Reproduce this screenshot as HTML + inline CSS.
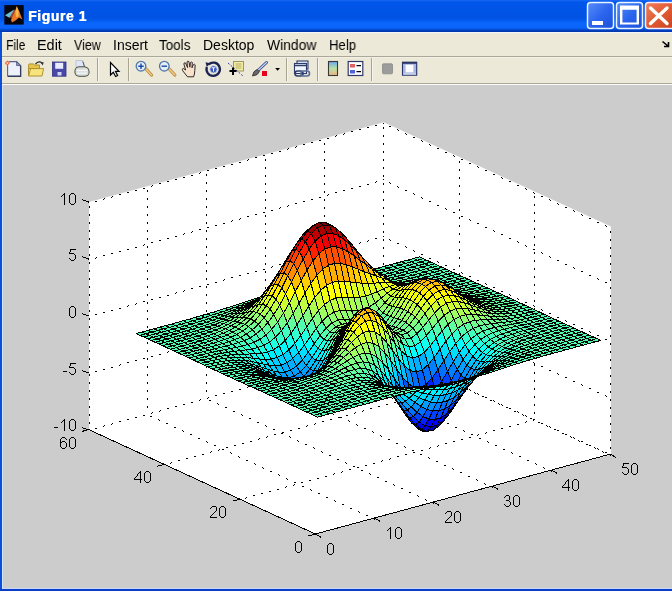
<!DOCTYPE html>
<html><head><meta charset="utf-8">
<style>
html,body{margin:0;padding:0;}
body{width:672px;height:591px;overflow:hidden;position:relative;background:#cccccc;font-family:"Liberation Sans",sans-serif;}
.abs{position:absolute;}
#title{left:0;top:0;width:672px;height:32px;background:linear-gradient(to bottom,#1a68f6 0px,#0056ea 2px,#0052e2 18px,#0a66fc 23px,#0a64fa 28px,#0038b0 31px,#0038b0 32px);}
#ttext{left:28px;top:8.4px;color:#fff;font-weight:bold;font-size:14px;letter-spacing:0.55px;text-shadow:0.4px 0 0 #fff;will-change:transform;}
#menu{left:0;top:32px;width:672px;height:24px;background:linear-gradient(to bottom,#f4f6fa 0px,#f4f6fa 1px,#ece9d8 1px);}
#menuline{left:0;top:56px;width:672px;height:1px;background:#aca899;}
#menuline2{left:0;top:57px;width:672px;height:1px;background:#f2f0e4;}
#tool{left:0;top:58px;width:672px;height:25px;background:#ece9d8;}
#toolline{left:0;top:83px;width:672px;height:1px;background:#aca899;}
#lb{left:0;top:32px;width:2px;height:559px;background:#0c4ed8;}
#lb2{left:2px;top:84px;width:1px;height:505px;background:#d4e2fa;}
#tl2{left:2px;top:84px;width:670px;height:1px;background:#fcfcfc;}
#bb{left:0;top:589px;width:672px;height:2px;background:#0a3cc8;}
#bb2{left:2px;top:588px;width:670px;height:1px;background:#c4d8fc;}
.mi{position:absolute;top:37px;font-size:14px;line-height:16px;color:#000;transform-origin:0 0;will-change:transform;white-space:nowrap;}
svg text{font-family:"Liberation Sans",sans-serif;font-size:16.5px;fill:#000;}
</style></head><body>
<div id="title" class="abs"></div>
<div id="ttext" class="abs">Figure 1</div>
<div id="menu" class="abs"></div>
<div id="menuline" class="abs"></div>
<div id="menuline2" class="abs"></div>
<div id="tool" class="abs"></div>
<div id="toolline" class="abs"></div>
<div id="lb" class="abs"></div>
<div id="bb" class="abs"></div>
<div id="lb2" class="abs"></div>
<div id="tl2" class="abs"></div>
<div id="bb2" class="abs"></div>
<span class="mi" style="left:5.8px;transform:scaleX(0.86)">File</span>
<span class="mi" style="left:36.8px;transform:scaleX(1.03)">Edit</span>
<span class="mi" style="left:73.5px;transform:scaleX(0.886)">View</span>
<span class="mi" style="left:113px;transform:scaleX(1.0)">Insert</span>
<span class="mi" style="left:158.5px;transform:scaleX(0.96)">Tools</span>
<span class="mi" style="left:203.3px;transform:scaleX(1.0)">Desktop</span>
<span class="mi" style="left:266.5px;transform:scaleX(0.99)">Window</span>
<span class="mi" style="left:329px;transform:scaleX(0.94)">Help</span>
<svg class="abs" style="left:0;top:0" width="672" height="591" viewBox="0 0 672 591">
<!-- matlab icon -->
<rect x="4.3" y="5.1" width="19.4" height="19.5" fill="#050510"/>
<path d="M5,15.2 L14.2,9.6 L12.5,14.5 L9.3,17.8 Z" fill="#68c0d8"/>
<path d="M9.5,17.5 L14.2,9.6 L16,12 L13,18 Z" fill="#a04830"/>
<path d="M16.8,6.2 L19.5,12 L22.4,19.6 L19,17.4 L15.5,20.5 L11.9,22.6 L11,19.5 L13.5,15 Z" fill="#e87828"/>
<path d="M16.8,6.2 L18.6,11 L18.5,16.5 L16,17 L15.5,11.5 Z" fill="#f8b848"/>
<!-- caption buttons -->
<defs>
<linearGradient id="gbb" x1="0" y1="0" x2="1" y2="1"><stop offset="0" stop-color="#5a8ef8"/><stop offset="0.5" stop-color="#2c66ee"/><stop offset="1" stop-color="#1c4fd8"/></linearGradient>
<linearGradient id="grb" x1="0" y1="0" x2="1" y2="1"><stop offset="0" stop-color="#f0805c"/><stop offset="0.5" stop-color="#e05a32"/><stop offset="1" stop-color="#c8401c"/></linearGradient>
</defs>
<rect x="587.5" y="2.5" width="26" height="26" rx="3" fill="url(#gbb)" stroke="#e8f4ff" stroke-width="1.5"/>
<rect x="592" y="21" width="11" height="4" fill="#fff"/>
<rect x="616.5" y="2.5" width="26" height="26" rx="3" fill="url(#gbb)" stroke="#e8f4ff" stroke-width="1.5"/>
<path d="M620,5.5 H639 V24.6 H620 Z M622.4,9.8 V22.4 H636.6 V9.8 Z" fill="#fff" fill-rule="evenodd"/>
<rect x="645.5" y="2.5" width="30" height="26" rx="3" fill="url(#grb)" stroke="#f4f0ff" stroke-width="1.5"/>
<path d="M650.5,8 L667,23.5 M667,8 L650.5,23.5" stroke="#fff" stroke-width="3.4" stroke-linecap="round"/>
<!-- dock arrow -->
<path d="M662.5,41.5 L668,46 M664,46.5 H668.5 V42" stroke="#000" stroke-width="1.6" fill="none"/>
<!-- separators -->
<g shape-rendering="crispEdges">
<rect x="97" y="58" width="1" height="23" fill="#a8a490"/><rect x="98" y="58" width="1" height="23" fill="#f6f4ec"/>
<rect x="128" y="58" width="1" height="23" fill="#a8a490"/><rect x="129" y="58" width="1" height="23" fill="#f6f4ec"/>
<rect x="286" y="58" width="1" height="23" fill="#a8a490"/><rect x="287" y="58" width="1" height="23" fill="#f6f4ec"/>
<rect x="317" y="58" width="1" height="23" fill="#a8a490"/><rect x="318" y="58" width="1" height="23" fill="#f6f4ec"/>
<rect x="371" y="58" width="1" height="23" fill="#a8a490"/><rect x="372" y="58" width="1" height="23" fill="#f6f4ec"/>
</g>
<!-- new -->
<path d="M7.6,61.6 H16.6 L20.6,65.6 V76 H7.6 Z" fill="#eef1fc" stroke="#5a6488" stroke-width="1.1"/>
<path d="M20.6,65.6 V76.3 H7.8" fill="none" stroke="#343c60" stroke-width="1.3"/>
<path d="M16.6,61.6 V65.6 H20.6 Z" fill="#8a94bc" stroke="#4a5478" stroke-width="0.8"/>
<circle cx="7.4" cy="63.1" r="2.3" fill="#f4a080" opacity="0.85"/>
<path d="M7.4,60.2 L8.2,62.3 L10.3,63.1 L8.2,63.9 L7.4,66 L6.6,63.9 L4.5,63.1 L6.6,62.3 Z" fill="#e85a30"/>
<circle cx="7.4" cy="63.1" r="0.9" fill="#fff0d8"/>
<!-- open -->
<path d="M28.6,76 V64.6 Q28.6,63.9 29.4,63.9 H33.4 L34.6,65 H39.5 V68.5 H28.6 Z" fill="#e8c448" stroke="#a88a28" stroke-width="0.9"/>
<path d="M28.6,76 L30.6,68.6 H43.6 L42,76 Z" fill="#f8e47c" stroke="#a88a28" stroke-width="0.9" stroke-linejoin="round"/>
<path d="M35.5,64 Q39,60.2 42.2,63.2" stroke="#2a2a2a" stroke-width="1.2" fill="none"/>
<path d="M40.8,62.4 L43.8,62.2 L42.6,65.4 Z" fill="#2a2a2a"/>
<!-- save -->
<rect x="52.5" y="62" width="13.5" height="14.2" fill="#4848a8" stroke="#303080" stroke-width="0.8"/>
<rect x="55.2" y="62.8" width="8" height="6" fill="#e8ecff"/>
<rect x="57.5" y="72" width="4" height="3.5" fill="#d0d4f0"/>
<!-- print -->
<path d="M76,60.5 H82.8 L84.6,67 H76 Z" fill="#dfe6f6" stroke="#a8b0c4" stroke-width="0.6"/>
<path d="M82.8,61.5 L84.6,67" stroke="#505868" stroke-width="1"/>
<path d="M75,70 Q75.5,66.8 79,66.8 H85 Q88.7,67.2 89,71 V73.3 Q88.6,76.3 85,76.3 H79 Q75.3,76.2 75,73 Z" fill="#dadede" stroke="#4a5040" stroke-width="1"/>
<path d="M76.5,70.5 H87.5 M77,73.2 H87" stroke="#fafafa" stroke-width="1"/>
<!-- arrow cursor -->
<path d="M110.5,62.5 V75 L113.3,72.3 L115.6,76.5 L117.6,75.5 L115.4,71.4 H119 Z" fill="#fff" stroke="#000" stroke-width="1.2" stroke-linejoin="miter"/>
<!-- zoom in -->
<path d="M146,69 L151.5,75" stroke="#b88840" stroke-width="3.2" stroke-linecap="round"/>
<path d="M146,69 L151.5,75" stroke="#f0c880" stroke-width="1.6" stroke-linecap="round"/>
<circle cx="141" cy="66.2" r="4.8" fill="#e4eef8" stroke="#5078a8" stroke-width="1.3"/>
<path d="M138.3,66.2 H143.7 M141,63.5 V68.9" stroke="#1848a0" stroke-width="1.4"/>
<!-- zoom out -->
<path d="M169.3,69 L174.8,75" stroke="#b88840" stroke-width="3.2" stroke-linecap="round"/>
<path d="M169.3,69 L174.8,75" stroke="#f0c880" stroke-width="1.6" stroke-linecap="round"/>
<circle cx="164.3" cy="66.2" r="4.8" fill="#e4eef8" stroke="#5078a8" stroke-width="1.3"/>
<path d="M161.6,66.2 H167" stroke="#1848a0" stroke-width="1.4"/>
<!-- hand -->
<path d="M187.5,76.8 L182.6,70.6 Q181.6,68.9 183.2,68.4 L185.6,70 L183.9,64 Q183.9,62.3 185.5,62.9 L187.6,67.6 L187,62 Q187.4,60.6 188.9,61.5 L189.9,67.2 L190.4,62.6 Q191.2,61.4 192.3,62.4 L192,67.8 L193.4,64.6 Q194.5,63.7 195.2,64.9 L194.8,70.5 Q194.6,74.5 193.6,76.8 Z" fill="#f8e2cc" stroke="#302828" stroke-width="1"/>
<!-- rotate -->
<path d="M208.6,64.4 A6.7,6.7 0 1 1 206.9,67" stroke="#1c2450" stroke-width="2.3" fill="none"/>
<path d="M205.5,62.2 L210.3,63.2 L206.8,67 Z" fill="#1c2450"/>
<circle cx="213.5" cy="69.3" r="3.6" fill="#3858b8" stroke="#c8d4f4" stroke-width="0.8"/>
<path d="M211.6,67.8 H215.4 M213.5,67.8 V71.6" stroke="#f0f4ff" stroke-width="1.1"/>
<!-- data cursor -->
<rect x="233.5" y="61.5" width="10" height="9.5" fill="#f2eca0" stroke="#909060" stroke-width="0.9"/>
<path d="M235.5,64 H241.5 M235.5,66 H241.5 M235.5,68 H241.5" stroke="#a8a060" stroke-width="0.8"/>
<path d="M228,63 L243,76" stroke="#3048b0" stroke-width="1" stroke-dasharray="2 1.5"/>
<path d="M229.5,71 H236.5 M233,67.5 V75" stroke="#000" stroke-width="2"/>
<!-- brush -->
<path d="M258.5,70 L266.5,62.5" stroke="#384888" stroke-width="3" stroke-linecap="round"/>
<path d="M258.5,70 L266.5,62.5" stroke="#c8d4f4" stroke-width="1.2" stroke-linecap="round"/>
<path d="M252.5,76 Q253,71 257,69.5 L259.5,71.5 Q258,75.5 252.5,76 Z" fill="#6a6a6a" stroke="#303030" stroke-width="0.8"/>
<rect x="262" y="71" width="5" height="5" fill="#e8001c"/>
<!-- dropdown -->
<path d="M275.2,68 H280 L277.6,70.8 Z" fill="#000"/>
<!-- link -->
<rect x="297" y="61" width="11" height="8" fill="#e0e8f8" stroke="#2c3c68" stroke-width="1.1"/>
<rect x="294.5" y="63.5" width="12" height="10" fill="#f0f4ff" stroke="#2c3c68" stroke-width="1.1"/>
<path d="M294.5,65.5 H306.5" stroke="#2c3c68" stroke-width="1.5"/>
<rect x="295" y="71" width="8" height="5" rx="2.5" fill="none" stroke="#2c3c68" stroke-width="1.6"/>
<rect x="301" y="71" width="8.5" height="5" rx="2.5" fill="none" stroke="#5a6c98" stroke-width="1.6"/>
<!-- colorbar -->
<defs><linearGradient id="cb" x1="0" y1="0" x2="0" y2="1"><stop offset="0" stop-color="#6aa8f0"/><stop offset="0.5" stop-color="#b8e0a8"/><stop offset="1" stop-color="#f0b080"/></linearGradient></defs>
<rect x="328.5" y="61.5" width="9" height="14" fill="url(#cb)" stroke="#383838" stroke-width="1.1"/>
<!-- legend -->
<rect x="348.2" y="61.5" width="14.6" height="14" fill="#fcfcff" stroke="#303868" stroke-width="1.2"/>
<rect x="350" y="64" width="5" height="3.5" fill="#e06060"/>
<rect x="350" y="70" width="5" height="3.5" fill="#5060d8"/>
<path d="M356.5,65.7 H361 M356.5,71.7 H361" stroke="#000" stroke-width="1.3"/>
<!-- gray square -->
<rect x="382.5" y="63.8" width="10" height="10" rx="1" fill="#9c9c9c" stroke="#888" stroke-width="0.8"/>
<!-- plot tools -->
<rect x="402.5" y="62.2" width="14.2" height="13" fill="#a8b8e0" stroke="#283468" stroke-width="1.1"/>
<rect x="402.5" y="62" width="14.2" height="1.8" fill="#283468"/>
<rect x="405.6" y="64.8" width="7.8" height="7.6" fill="#fcfcff"/>
<rect x="403.3" y="72.8" width="12.6" height="2" fill="#c4cce8"/>

<polygon fill="#fff" points="89,202.1 383.8,122.2 611,226.6 611,454.5 315.4,534.4 89,430.0"/>
<g shape-rendering="crispEdges">
<path fill="#000" d="M89 206h1v1h-1zM89 207h1v1h-1zM89 214h1v1h-1zM89 215h1v1h-1zM89 222h1v1h-1zM89 223h1v1h-1zM89 230h1v1h-1zM89 231h1v1h-1zM89 238h1v1h-1zM89 239h1v1h-1zM89 246h1v1h-1zM89 247h1v1h-1zM89 254h1v1h-1zM89 255h1v1h-1zM89 262h1v1h-1zM89 263h1v1h-1zM89 270h1v1h-1zM89 271h1v1h-1zM89 278h1v1h-1zM89 279h1v1h-1zM89 286h1v1h-1zM89 287h1v1h-1zM89 294h1v1h-1zM89 295h1v1h-1zM89 302h1v1h-1zM89 303h1v1h-1zM89 310h1v1h-1zM89 311h1v1h-1zM89 318h1v1h-1zM89 319h1v1h-1zM89 326h1v1h-1zM89 327h1v1h-1zM89 334h1v1h-1zM89 335h1v1h-1zM89 342h1v1h-1zM89 343h1v1h-1zM89 350h1v1h-1zM89 351h1v1h-1zM89 358h1v1h-1zM89 359h1v1h-1zM89 366h1v1h-1zM89 367h1v1h-1zM89 374h1v1h-1zM89 375h1v1h-1zM89 382h1v1h-1zM89 383h1v1h-1zM89 390h1v1h-1zM89 391h1v1h-1zM89 398h1v1h-1zM89 399h1v1h-1zM89 406h1v1h-1zM89 407h1v1h-1zM89 414h1v1h-1zM89 415h1v1h-1zM89 422h1v1h-1zM89 423h1v1h-1zM95 201h1v1h-1zM95 258h1v1h-1zM95 314h1v1h-1zM95 371h1v1h-1zM95 428h1v1h-1zM96 201h1v1h-1zM96 257h1v1h-1zM96 314h1v1h-1zM96 371h1v1h-1zM96 428h1v1h-1zM103 199h1v1h-1zM103 255h1v1h-1zM103 312h1v1h-1zM103 369h1v1h-1zM103 426h1v1h-1zM104 198h1v1h-1zM104 255h1v1h-1zM104 312h1v1h-1zM104 369h1v1h-1zM104 425h1v1h-1zM111 197h1v1h-1zM111 253h1v1h-1zM111 310h1v1h-1zM111 367h1v1h-1zM111 424h1v1h-1zM112 196h1v1h-1zM112 253h1v1h-1zM112 310h1v1h-1zM112 367h1v1h-1zM112 423h1v1h-1zM119 194h1v1h-1zM119 251h1v1h-1zM119 308h1v1h-1zM119 365h1v1h-1zM119 421h1v1h-1zM120 194h1v1h-1zM120 251h1v1h-1zM120 308h1v1h-1zM120 364h1v1h-1zM120 421h1v1h-1zM127 192h1v1h-1zM127 249h1v1h-1zM127 306h1v1h-1zM127 362h1v1h-1zM127 419h1v1h-1zM128 192h1v1h-1zM128 249h1v1h-1zM128 305h1v1h-1zM128 362h1v1h-1zM128 419h1v1h-1zM135 190h1v1h-1zM135 247h1v1h-1zM135 304h1v1h-1zM135 360h1v1h-1zM135 417h1v1h-1zM136 190h1v1h-1zM136 247h1v1h-1zM136 303h1v1h-1zM136 360h1v1h-1zM136 417h1v1h-1zM143 188h1v1h-1zM143 245h1v1h-1zM143 301h1v1h-1zM143 358h1v1h-1zM143 415h1v1h-1zM144 188h1v1h-1zM144 244h1v1h-1zM144 301h1v1h-1zM144 358h1v1h-1zM144 415h1v1h-1zM147 190h1v1h-1zM147 191h1v1h-1zM147 198h1v1h-1zM147 199h1v1h-1zM147 206h1v1h-1zM147 207h1v1h-1zM147 214h1v1h-1zM147 215h1v1h-1zM147 222h1v1h-1zM147 223h1v1h-1zM147 230h1v1h-1zM147 231h1v1h-1zM147 238h1v1h-1zM147 239h1v1h-1zM147 246h1v1h-1zM147 247h1v1h-1zM147 254h1v1h-1zM147 255h1v1h-1zM147 262h1v1h-1zM147 263h1v1h-1zM147 270h1v1h-1zM147 271h1v1h-1zM147 278h1v1h-1zM147 279h1v1h-1zM147 286h1v1h-1zM147 287h1v1h-1zM147 294h1v1h-1zM147 295h1v1h-1zM147 302h1v1h-1zM147 303h1v1h-1zM147 310h1v1h-1zM147 311h1v1h-1zM147 318h1v1h-1zM147 319h1v1h-1zM147 326h1v1h-1zM147 327h1v1h-1zM147 334h1v1h-1zM147 335h1v1h-1zM147 342h1v1h-1zM147 343h1v1h-1zM147 350h1v1h-1zM147 351h1v1h-1zM147 358h1v1h-1zM147 359h1v1h-1zM147 366h1v1h-1zM147 367h1v1h-1zM147 374h1v1h-1zM147 375h1v1h-1zM147 382h1v1h-1zM147 383h1v1h-1zM147 390h1v1h-1zM147 391h1v1h-1zM147 398h1v1h-1zM147 399h1v1h-1zM147 406h1v1h-1zM147 407h1v1h-1zM150 416h1v1h-1zM151 186h1v1h-1zM151 242h1v1h-1zM151 299h1v1h-1zM151 356h1v1h-1zM151 413h1v1h-1zM151 416h1v1h-1zM152 185h1v1h-1zM152 242h1v1h-1zM152 299h1v1h-1zM152 356h1v1h-1zM152 412h1v1h-1zM158 419h1v1h-1zM159 183h1v1h-1zM159 240h1v1h-1zM159 297h1v1h-1zM159 354h1v1h-1zM159 411h1v1h-1zM159 420h1v1h-1zM160 183h1v1h-1zM160 240h1v1h-1zM160 297h1v1h-1zM160 354h1v1h-1zM160 410h1v1h-1zM166 423h1v1h-1zM167 181h1v1h-1zM167 238h1v1h-1zM167 295h1v1h-1zM167 352h1v1h-1zM167 408h1v1h-1zM167 423h1v1h-1zM168 181h1v1h-1zM168 238h1v1h-1zM168 295h1v1h-1zM168 351h1v1h-1zM168 408h1v1h-1zM170 463h1v1h-1zM171 462h1v1h-1zM174 427h1v1h-1zM175 179h1v1h-1zM175 236h1v1h-1zM175 293h1v1h-1zM175 349h1v1h-1zM175 406h1v1h-1zM175 427h1v1h-1zM176 179h1v1h-1zM176 236h1v1h-1zM176 292h1v1h-1zM176 349h1v1h-1zM176 406h1v1h-1zM178 460h1v1h-1zM179 460h1v1h-1zM182 430h1v1h-1zM183 177h1v1h-1zM183 234h1v1h-1zM183 291h1v1h-1zM183 347h1v1h-1zM183 404h1v1h-1zM183 431h1v1h-1zM184 177h1v1h-1zM184 233h1v1h-1zM184 290h1v1h-1zM184 347h1v1h-1zM184 404h1v1h-1zM186 458h1v1h-1zM187 458h1v1h-1zM190 434h1v1h-1zM191 175h1v1h-1zM191 232h1v1h-1zM191 288h1v1h-1zM191 345h1v1h-1zM191 402h1v1h-1zM191 434h1v1h-1zM192 175h1v1h-1zM192 231h1v1h-1zM192 288h1v1h-1zM192 345h1v1h-1zM192 402h1v1h-1zM194 456h1v1h-1zM195 456h1v1h-1zM198 438h1v1h-1zM199 173h1v1h-1zM199 229h1v1h-1zM199 286h1v1h-1zM199 343h1v1h-1zM199 400h1v1h-1zM199 438h1v1h-1zM200 172h1v1h-1zM200 229h1v1h-1zM200 286h1v1h-1zM200 343h1v1h-1zM200 399h1v1h-1zM202 454h1v1h-1zM203 454h1v1h-1zM206 174h1v1h-1zM206 175h1v1h-1zM206 182h1v1h-1zM206 183h1v1h-1zM206 190h1v1h-1zM206 191h1v1h-1zM206 198h1v1h-1zM206 199h1v1h-1zM206 206h1v1h-1zM206 207h1v1h-1zM206 214h1v1h-1zM206 215h1v1h-1zM206 222h1v1h-1zM206 223h1v1h-1zM206 230h1v1h-1zM206 231h1v1h-1zM206 238h1v1h-1zM206 239h1v1h-1zM206 246h1v1h-1zM206 247h1v1h-1zM206 254h1v1h-1zM206 255h1v1h-1zM206 262h1v1h-1zM206 263h1v1h-1zM206 270h1v1h-1zM206 271h1v1h-1zM206 278h1v1h-1zM206 279h1v1h-1zM206 286h1v1h-1zM206 287h1v1h-1zM206 294h1v1h-1zM206 295h1v1h-1zM206 302h1v1h-1zM206 303h1v1h-1zM206 310h1v1h-1zM206 311h1v1h-1zM206 318h1v1h-1zM206 319h1v1h-1zM206 326h1v1h-1zM206 327h1v1h-1zM206 334h1v1h-1zM206 335h1v1h-1zM206 342h1v1h-1zM206 343h1v1h-1zM206 350h1v1h-1zM206 351h1v1h-1zM206 358h1v1h-1zM206 359h1v1h-1zM206 366h1v1h-1zM206 367h1v1h-1zM206 374h1v1h-1zM206 375h1v1h-1zM206 382h1v1h-1zM206 383h1v1h-1zM206 390h1v1h-1zM206 391h1v1h-1zM206 441h1v1h-1zM207 170h1v1h-1zM207 227h1v1h-1zM207 284h1v1h-1zM207 341h1v1h-1zM207 398h1v1h-1zM207 442h1v1h-1zM208 170h1v1h-1zM208 227h1v1h-1zM208 284h1v1h-1zM208 340h1v1h-1zM208 397h1v1h-1zM209 400h1v1h-1zM210 400h1v1h-1zM210 452h1v1h-1zM211 451h1v1h-1zM214 445h1v1h-1zM215 168h1v1h-1zM215 225h1v1h-1zM215 282h1v1h-1zM215 339h1v1h-1zM215 395h1v1h-1zM215 445h1v1h-1zM216 168h1v1h-1zM216 225h1v1h-1zM216 282h1v1h-1zM216 338h1v1h-1zM216 395h1v1h-1zM217 403h1v1h-1zM218 404h1v1h-1zM218 450h1v1h-1zM219 449h1v1h-1zM222 449h1v1h-1zM223 166h1v1h-1zM223 223h1v1h-1zM223 280h1v1h-1zM223 336h1v1h-1zM223 393h1v1h-1zM223 449h1v1h-1zM224 166h1v1h-1zM224 223h1v1h-1zM224 279h1v1h-1zM224 336h1v1h-1zM224 393h1v1h-1zM225 407h1v1h-1zM226 407h1v1h-1zM226 447h1v1h-1zM227 447h1v1h-1zM230 452h1v1h-1zM231 164h1v1h-1zM231 221h1v1h-1zM231 277h1v1h-1zM231 334h1v1h-1zM231 391h1v1h-1zM231 453h1v1h-1zM232 164h1v1h-1zM232 220h1v1h-1zM232 277h1v1h-1zM232 334h1v1h-1zM232 391h1v1h-1zM233 411h1v1h-1zM234 411h1v1h-1zM234 445h1v1h-1zM235 445h1v1h-1zM238 456h1v1h-1zM239 162h1v1h-1zM239 219h1v1h-1zM239 275h1v1h-1zM239 332h1v1h-1zM239 389h1v1h-1zM239 457h1v1h-1zM240 162h1v1h-1zM240 218h1v1h-1zM240 275h1v1h-1zM240 332h1v1h-1zM240 389h1v1h-1zM241 414h1v1h-1zM242 415h1v1h-1zM242 443h1v1h-1zM243 443h1v1h-1zM245 498h1v1h-1zM246 460h1v1h-1zM246 497h1v1h-1zM247 160h1v1h-1zM247 216h1v1h-1zM247 273h1v1h-1zM247 330h1v1h-1zM247 387h1v1h-1zM247 460h1v1h-1zM248 159h1v1h-1zM248 216h1v1h-1zM248 273h1v1h-1zM248 330h1v1h-1zM248 386h1v1h-1zM249 418h1v1h-1zM250 418h1v1h-1zM250 441h1v1h-1zM251 441h1v1h-1zM253 495h1v1h-1zM254 463h1v1h-1zM254 495h1v1h-1zM255 157h1v1h-1zM255 214h1v1h-1zM255 271h1v1h-1zM255 328h1v1h-1zM255 384h1v1h-1zM255 464h1v1h-1zM256 157h1v1h-1zM256 214h1v1h-1zM256 271h1v1h-1zM256 327h1v1h-1zM256 384h1v1h-1zM257 422h1v1h-1zM258 422h1v1h-1zM258 439h1v1h-1zM259 438h1v1h-1zM261 493h1v1h-1zM262 467h1v1h-1zM262 493h1v1h-1zM263 155h1v1h-1zM263 212h1v1h-1zM263 269h1v1h-1zM263 326h1v1h-1zM263 382h1v1h-1zM263 468h1v1h-1zM264 155h1v1h-1zM264 212h1v1h-1zM264 269h1v1h-1zM264 325h1v1h-1zM264 382h1v1h-1zM265 159h1v1h-1zM265 160h1v1h-1zM265 167h1v1h-1zM265 168h1v1h-1zM265 175h1v1h-1zM265 176h1v1h-1zM265 183h1v1h-1zM265 184h1v1h-1zM265 191h1v1h-1zM265 192h1v1h-1zM265 199h1v1h-1zM265 200h1v1h-1zM265 207h1v1h-1zM265 208h1v1h-1zM265 215h1v1h-1zM265 216h1v1h-1zM265 223h1v1h-1zM265 224h1v1h-1zM265 231h1v1h-1zM265 232h1v1h-1zM265 239h1v1h-1zM265 240h1v1h-1zM265 247h1v1h-1zM265 248h1v1h-1zM265 255h1v1h-1zM265 256h1v1h-1zM265 263h1v1h-1zM265 264h1v1h-1zM265 271h1v1h-1zM265 272h1v1h-1zM265 279h1v1h-1zM265 280h1v1h-1zM265 287h1v1h-1zM265 288h1v1h-1zM265 295h1v1h-1zM265 296h1v1h-1zM265 303h1v1h-1zM265 304h1v1h-1zM265 311h1v1h-1zM265 312h1v1h-1zM265 319h1v1h-1zM265 320h1v1h-1zM265 327h1v1h-1zM265 328h1v1h-1zM265 335h1v1h-1zM265 336h1v1h-1zM265 343h1v1h-1zM265 344h1v1h-1zM265 351h1v1h-1zM265 352h1v1h-1zM265 359h1v1h-1zM265 360h1v1h-1zM265 367h1v1h-1zM265 368h1v1h-1zM265 375h1v1h-1zM265 376h1v1h-1zM265 425h1v1h-1zM266 426h1v1h-1zM266 437h1v1h-1zM267 436h1v1h-1zM268 384h1v1h-1zM269 384h1v1h-1zM269 491h1v1h-1zM270 471h1v1h-1zM270 491h1v1h-1zM271 153h1v1h-1zM271 210h1v1h-1zM271 267h1v1h-1zM271 323h1v1h-1zM271 380h1v1h-1zM271 471h1v1h-1zM272 153h1v1h-1zM272 210h1v1h-1zM272 266h1v1h-1zM272 323h1v1h-1zM272 380h1v1h-1zM273 429h1v1h-1zM274 429h1v1h-1zM274 434h1v1h-1zM275 434h1v1h-1zM276 387h1v1h-1zM277 388h1v1h-1zM277 489h1v1h-1zM278 474h1v1h-1zM278 489h1v1h-1zM279 151h1v1h-1zM279 208h1v1h-1zM279 264h1v1h-1zM279 321h1v1h-1zM279 378h1v1h-1zM279 475h1v1h-1zM280 151h1v1h-1zM280 207h1v1h-1zM280 264h1v1h-1zM280 321h1v1h-1zM280 378h1v1h-1zM281 433h1v1h-1zM282 432h1v1h-1zM282 433h1v1h-1zM283 432h1v1h-1zM284 391h1v1h-1zM285 391h1v1h-1zM285 487h1v1h-1zM286 478h1v1h-1zM286 486h1v1h-1zM287 149h1v1h-1zM287 206h1v1h-1zM287 262h1v1h-1zM287 319h1v1h-1zM287 376h1v1h-1zM287 479h1v1h-1zM288 148h1v1h-1zM288 205h1v1h-1zM288 262h1v1h-1zM288 319h1v1h-1zM288 376h1v1h-1zM289 436h1v1h-1zM290 430h1v1h-1zM290 437h1v1h-1zM291 430h1v1h-1zM292 395h1v1h-1zM293 395h1v1h-1zM293 485h1v1h-1zM294 482h1v1h-1zM294 484h1v1h-1zM295 147h1v1h-1zM295 203h1v1h-1zM295 260h1v1h-1zM295 317h1v1h-1zM295 374h1v1h-1zM295 482h1v1h-1zM296 146h1v1h-1zM296 203h1v1h-1zM296 260h1v1h-1zM296 317h1v1h-1zM296 373h1v1h-1zM297 440h1v1h-1zM298 428h1v1h-1zM298 441h1v1h-1zM299 428h1v1h-1zM300 398h1v1h-1zM301 399h1v1h-1zM301 482h1v1h-1zM302 482h1v1h-1zM302 486h1v1h-1zM303 144h1v1h-1zM303 201h1v1h-1zM303 258h1v1h-1zM303 315h1v1h-1zM303 371h1v1h-1zM303 486h1v1h-1zM304 144h1v1h-1zM304 201h1v1h-1zM304 258h1v1h-1zM304 314h1v1h-1zM304 371h1v1h-1zM305 444h1v1h-1zM306 426h1v1h-1zM306 444h1v1h-1zM307 425h1v1h-1zM308 402h1v1h-1zM309 402h1v1h-1zM309 480h1v1h-1zM310 480h1v1h-1zM310 489h1v1h-1zM311 142h1v1h-1zM311 199h1v1h-1zM311 256h1v1h-1zM311 313h1v1h-1zM311 369h1v1h-1zM311 490h1v1h-1zM312 142h1v1h-1zM312 199h1v1h-1zM312 255h1v1h-1zM312 312h1v1h-1zM312 369h1v1h-1zM313 447h1v1h-1zM314 424h1v1h-1zM314 448h1v1h-1zM315 423h1v1h-1zM316 406h1v1h-1zM317 406h1v1h-1zM317 478h1v1h-1zM318 478h1v1h-1zM318 493h1v1h-1zM319 140h1v1h-1zM319 197h1v1h-1zM319 254h1v1h-1zM319 310h1v1h-1zM319 367h1v1h-1zM319 493h1v1h-1zM320 140h1v1h-1zM320 197h1v1h-1zM320 253h1v1h-1zM320 310h1v1h-1zM320 367h1v1h-1zM321 451h1v1h-1zM322 421h1v1h-1zM322 452h1v1h-1zM323 421h1v1h-1zM324 143h1v1h-1zM324 144h1v1h-1zM324 151h1v1h-1zM324 152h1v1h-1zM324 159h1v1h-1zM324 160h1v1h-1zM324 167h1v1h-1zM324 168h1v1h-1zM324 175h1v1h-1zM324 176h1v1h-1zM324 183h1v1h-1zM324 184h1v1h-1zM324 191h1v1h-1zM324 192h1v1h-1zM324 199h1v1h-1zM324 200h1v1h-1zM324 207h1v1h-1zM324 208h1v1h-1zM324 215h1v1h-1zM324 216h1v1h-1zM324 223h1v1h-1zM324 224h1v1h-1zM324 231h1v1h-1zM324 232h1v1h-1zM324 239h1v1h-1zM324 240h1v1h-1zM324 247h1v1h-1zM324 248h1v1h-1zM324 255h1v1h-1zM324 256h1v1h-1zM324 263h1v1h-1zM324 264h1v1h-1zM324 271h1v1h-1zM324 272h1v1h-1zM324 279h1v1h-1zM324 280h1v1h-1zM324 287h1v1h-1zM324 288h1v1h-1zM324 295h1v1h-1zM324 296h1v1h-1zM324 303h1v1h-1zM324 304h1v1h-1zM324 311h1v1h-1zM324 312h1v1h-1zM324 319h1v1h-1zM324 320h1v1h-1zM324 327h1v1h-1zM324 328h1v1h-1zM324 335h1v1h-1zM324 336h1v1h-1zM324 343h1v1h-1zM324 344h1v1h-1zM324 351h1v1h-1zM324 352h1v1h-1zM324 359h1v1h-1zM324 360h1v1h-1zM324 409h1v1h-1zM325 410h1v1h-1zM325 476h1v1h-1zM326 476h1v1h-1zM326 497h1v1h-1zM327 138h1v1h-1zM327 195h1v1h-1zM327 251h1v1h-1zM327 308h1v1h-1zM327 365h1v1h-1zM327 368h1v1h-1zM327 497h1v1h-1zM328 138h1v1h-1zM328 194h1v1h-1zM328 251h1v1h-1zM328 308h1v1h-1zM328 365h1v1h-1zM328 368h1v1h-1zM329 455h1v1h-1zM330 419h1v1h-1zM330 455h1v1h-1zM331 419h1v1h-1zM332 413h1v1h-1zM333 414h1v1h-1zM333 474h1v1h-1zM334 473h1v1h-1zM334 500h1v1h-1zM335 136h1v1h-1zM335 192h1v1h-1zM335 249h1v1h-1zM335 306h1v1h-1zM335 363h1v1h-1zM335 371h1v1h-1zM335 501h1v1h-1zM336 135h1v1h-1zM336 192h1v1h-1zM336 249h1v1h-1zM336 306h1v1h-1zM336 362h1v1h-1zM336 372h1v1h-1zM337 459h1v1h-1zM338 417h1v1h-1zM338 459h1v1h-1zM339 417h1v1h-1zM340 417h1v1h-1zM341 417h1v1h-1zM341 472h1v1h-1zM342 471h1v1h-1zM342 504h1v1h-1zM343 134h1v1h-1zM343 190h1v1h-1zM343 247h1v1h-1zM343 304h1v1h-1zM343 361h1v1h-1zM343 375h1v1h-1zM343 504h1v1h-1zM344 133h1v1h-1zM344 190h1v1h-1zM344 247h1v1h-1zM344 304h1v1h-1zM344 360h1v1h-1zM344 375h1v1h-1zM345 462h1v1h-1zM346 415h1v1h-1zM346 463h1v1h-1zM347 415h1v1h-1zM348 420h1v1h-1zM349 421h1v1h-1zM349 469h1v1h-1zM350 469h1v1h-1zM350 508h1v1h-1zM351 131h1v1h-1zM351 188h1v1h-1zM351 245h1v1h-1zM351 302h1v1h-1zM351 358h1v1h-1zM351 379h1v1h-1zM351 508h1v1h-1zM352 131h1v1h-1zM352 188h1v1h-1zM352 245h1v1h-1zM352 301h1v1h-1zM352 358h1v1h-1zM352 379h1v1h-1zM353 466h1v1h-1zM354 413h1v1h-1zM354 466h1v1h-1zM355 412h1v1h-1zM356 424h1v1h-1zM357 425h1v1h-1zM357 467h1v1h-1zM358 467h1v1h-1zM358 511h1v1h-1zM359 129h1v1h-1zM359 186h1v1h-1zM359 243h1v1h-1zM359 299h1v1h-1zM359 356h1v1h-1zM359 382h1v1h-1zM359 512h1v1h-1zM360 129h1v1h-1zM360 186h1v1h-1zM360 242h1v1h-1zM360 299h1v1h-1zM360 356h1v1h-1zM360 383h1v1h-1zM361 470h1v1h-1zM362 411h1v1h-1zM362 470h1v1h-1zM363 410h1v1h-1zM364 428h1v1h-1zM365 428h1v1h-1zM365 465h1v1h-1zM366 465h1v1h-1zM366 515h1v1h-1zM367 127h1v1h-1zM367 184h1v1h-1zM367 241h1v1h-1zM367 297h1v1h-1zM367 354h1v1h-1zM367 386h1v1h-1zM367 515h1v1h-1zM368 127h1v1h-1zM368 184h1v1h-1zM368 240h1v1h-1zM368 297h1v1h-1zM368 354h1v1h-1zM368 386h1v1h-1zM369 473h1v1h-1zM370 408h1v1h-1zM370 474h1v1h-1zM371 408h1v1h-1zM372 431h1v1h-1zM373 432h1v1h-1zM373 463h1v1h-1zM374 463h1v1h-1zM374 519h1v1h-1zM375 125h1v1h-1zM375 182h1v1h-1zM375 238h1v1h-1zM375 295h1v1h-1zM375 352h1v1h-1zM375 390h1v1h-1zM376 125h1v1h-1zM376 181h1v1h-1zM376 238h1v1h-1zM376 295h1v1h-1zM376 352h1v1h-1zM376 390h1v1h-1zM377 477h1v1h-1zM378 406h1v1h-1zM378 477h1v1h-1zM379 406h1v1h-1zM380 435h1v1h-1zM381 436h1v1h-1zM381 461h1v1h-1zM382 460h1v1h-1zM383 123h1v1h-1zM383 127h1v1h-1zM383 128h1v1h-1zM383 135h1v1h-1zM383 136h1v1h-1zM383 143h1v1h-1zM383 144h1v1h-1zM383 151h1v1h-1zM383 152h1v1h-1zM383 159h1v1h-1zM383 160h1v1h-1zM383 167h1v1h-1zM383 168h1v1h-1zM383 175h1v1h-1zM383 176h1v1h-1zM383 179h1v1h-1zM383 183h1v1h-1zM383 184h1v1h-1zM383 191h1v1h-1zM383 192h1v1h-1zM383 199h1v1h-1zM383 200h1v1h-1zM383 207h1v1h-1zM383 208h1v1h-1zM383 215h1v1h-1zM383 216h1v1h-1zM383 223h1v1h-1zM383 224h1v1h-1zM383 231h1v1h-1zM383 232h1v1h-1zM383 236h1v1h-1zM383 239h1v1h-1zM383 240h1v1h-1zM383 247h1v1h-1zM383 248h1v1h-1zM383 255h1v1h-1zM383 256h1v1h-1zM383 263h1v1h-1zM383 264h1v1h-1zM383 271h1v1h-1zM383 272h1v1h-1zM383 279h1v1h-1zM383 280h1v1h-1zM383 287h1v1h-1zM383 288h1v1h-1zM383 293h1v1h-1zM383 295h1v1h-1zM383 296h1v1h-1zM383 303h1v1h-1zM383 304h1v1h-1zM383 311h1v1h-1zM383 312h1v1h-1zM383 319h1v1h-1zM383 320h1v1h-1zM383 327h1v1h-1zM383 328h1v1h-1zM383 335h1v1h-1zM383 336h1v1h-1zM383 343h1v1h-1zM383 344h1v1h-1zM383 350h1v1h-1zM383 393h1v1h-1zM384 394h1v1h-1zM385 481h1v1h-1zM386 352h1v1h-1zM386 404h1v1h-1zM386 481h1v1h-1zM387 352h1v1h-1zM387 404h1v1h-1zM388 439h1v1h-1zM389 126h1v1h-1zM389 182h1v1h-1zM389 239h1v1h-1zM389 296h1v1h-1zM389 353h1v1h-1zM389 439h1v1h-1zM389 459h1v1h-1zM390 126h1v1h-1zM390 183h1v1h-1zM390 240h1v1h-1zM390 296h1v1h-1zM390 353h1v1h-1zM390 458h1v1h-1zM391 397h1v1h-1zM392 398h1v1h-1zM393 484h1v1h-1zM394 355h1v1h-1zM394 402h1v1h-1zM394 485h1v1h-1zM395 356h1v1h-1zM395 402h1v1h-1zM396 443h1v1h-1zM397 129h1v1h-1zM397 186h1v1h-1zM397 243h1v1h-1zM397 300h1v1h-1zM397 356h1v1h-1zM397 443h1v1h-1zM397 456h1v1h-1zM398 130h1v1h-1zM398 187h1v1h-1zM398 243h1v1h-1zM398 300h1v1h-1zM398 357h1v1h-1zM398 456h1v1h-1zM399 401h1v1h-1zM400 401h1v1h-1zM401 488h1v1h-1zM402 359h1v1h-1zM402 400h1v1h-1zM402 488h1v1h-1zM403 359h1v1h-1zM403 399h1v1h-1zM404 446h1v1h-1zM405 133h1v1h-1zM405 190h1v1h-1zM405 246h1v1h-1zM405 303h1v1h-1zM405 360h1v1h-1zM405 447h1v1h-1zM405 454h1v1h-1zM406 134h1v1h-1zM406 190h1v1h-1zM406 247h1v1h-1zM406 304h1v1h-1zM406 360h1v1h-1zM406 454h1v1h-1zM407 404h1v1h-1zM408 405h1v1h-1zM409 492h1v1h-1zM410 363h1v1h-1zM410 398h1v1h-1zM410 492h1v1h-1zM411 363h1v1h-1zM411 397h1v1h-1zM412 450h1v1h-1zM413 137h1v1h-1zM413 193h1v1h-1zM413 250h1v1h-1zM413 307h1v1h-1zM413 364h1v1h-1zM413 450h1v1h-1zM413 452h1v1h-1zM414 137h1v1h-1zM414 194h1v1h-1zM414 251h1v1h-1zM414 307h1v1h-1zM414 364h1v1h-1zM414 452h1v1h-1zM415 408h1v1h-1zM416 409h1v1h-1zM417 495h1v1h-1zM418 366h1v1h-1zM418 395h1v1h-1zM418 496h1v1h-1zM419 367h1v1h-1zM419 395h1v1h-1zM420 454h1v1h-1zM421 140h1v1h-1zM421 197h1v1h-1zM421 254h1v1h-1zM421 311h1v1h-1zM421 367h1v1h-1zM421 450h1v1h-1zM421 454h1v1h-1zM422 141h1v1h-1zM422 198h1v1h-1zM422 254h1v1h-1zM422 311h1v1h-1zM422 368h1v1h-1zM422 450h1v1h-1zM423 412h1v1h-1zM424 412h1v1h-1zM425 499h1v1h-1zM426 370h1v1h-1zM426 393h1v1h-1zM426 500h1v1h-1zM427 370h1v1h-1zM427 393h1v1h-1zM428 457h1v1h-1zM429 144h1v1h-1zM429 201h1v1h-1zM429 258h1v1h-1zM429 314h1v1h-1zM429 371h1v1h-1zM429 448h1v1h-1zM429 458h1v1h-1zM430 145h1v1h-1zM430 201h1v1h-1zM430 258h1v1h-1zM430 315h1v1h-1zM430 371h1v1h-1zM430 447h1v1h-1zM431 415h1v1h-1zM432 416h1v1h-1zM433 503h1v1h-1zM434 374h1v1h-1zM434 391h1v1h-1zM435 374h1v1h-1zM435 391h1v1h-1zM436 461h1v1h-1zM437 148h1v1h-1zM437 205h1v1h-1zM437 261h1v1h-1zM437 318h1v1h-1zM437 375h1v1h-1zM437 446h1v1h-1zM437 461h1v1h-1zM438 148h1v1h-1zM438 205h1v1h-1zM438 262h1v1h-1zM438 318h1v1h-1zM438 375h1v1h-1zM438 445h1v1h-1zM439 419h1v1h-1zM440 420h1v1h-1zM442 377h1v1h-1zM442 389h1v1h-1zM443 378h1v1h-1zM443 389h1v1h-1zM444 465h1v1h-1zM445 152h1v1h-1zM445 208h1v1h-1zM445 265h1v1h-1zM445 322h1v1h-1zM445 378h1v1h-1zM445 443h1v1h-1zM445 465h1v1h-1zM446 152h1v1h-1zM446 209h1v1h-1zM446 265h1v1h-1zM446 322h1v1h-1zM446 379h1v1h-1zM446 443h1v1h-1zM447 423h1v1h-1zM448 423h1v1h-1zM450 381h1v1h-1zM450 387h1v1h-1zM451 382h1v1h-1zM451 386h1v1h-1zM452 468h1v1h-1zM453 155h1v1h-1zM453 212h1v1h-1zM453 269h1v1h-1zM453 325h1v1h-1zM453 382h1v1h-1zM453 441h1v1h-1zM453 469h1v1h-1zM454 156h1v1h-1zM454 212h1v1h-1zM454 269h1v1h-1zM454 326h1v1h-1zM454 382h1v1h-1zM454 441h1v1h-1zM455 427h1v1h-1zM456 427h1v1h-1zM458 385h1v1h-1zM459 161h1v1h-1zM459 162h1v1h-1zM459 169h1v1h-1zM459 170h1v1h-1zM459 177h1v1h-1zM459 178h1v1h-1zM459 185h1v1h-1zM459 186h1v1h-1zM459 193h1v1h-1zM459 194h1v1h-1zM459 201h1v1h-1zM459 202h1v1h-1zM459 209h1v1h-1zM459 210h1v1h-1zM459 217h1v1h-1zM459 218h1v1h-1zM459 225h1v1h-1zM459 226h1v1h-1zM459 233h1v1h-1zM459 234h1v1h-1zM459 241h1v1h-1zM459 242h1v1h-1zM459 249h1v1h-1zM459 250h1v1h-1zM459 257h1v1h-1zM459 258h1v1h-1zM459 265h1v1h-1zM459 266h1v1h-1zM459 273h1v1h-1zM459 274h1v1h-1zM459 281h1v1h-1zM459 282h1v1h-1zM459 289h1v1h-1zM459 290h1v1h-1zM459 297h1v1h-1zM459 298h1v1h-1zM459 305h1v1h-1zM459 306h1v1h-1zM459 313h1v1h-1zM459 314h1v1h-1zM459 321h1v1h-1zM459 322h1v1h-1zM459 329h1v1h-1zM459 330h1v1h-1zM459 337h1v1h-1zM459 338h1v1h-1zM459 345h1v1h-1zM459 346h1v1h-1zM459 353h1v1h-1zM459 354h1v1h-1zM459 361h1v1h-1zM459 362h1v1h-1zM459 369h1v1h-1zM459 370h1v1h-1zM459 377h1v1h-1zM459 378h1v1h-1zM459 384h1v1h-1zM459 385h1v1h-1zM460 472h1v1h-1zM461 159h1v1h-1zM461 216h1v1h-1zM461 272h1v1h-1zM461 329h1v1h-1zM461 386h1v1h-1zM461 439h1v1h-1zM461 472h1v1h-1zM462 159h1v1h-1zM462 216h1v1h-1zM462 273h1v1h-1zM462 329h1v1h-1zM462 386h1v1h-1zM462 439h1v1h-1zM463 430h1v1h-1zM464 431h1v1h-1zM466 388h1v1h-1zM467 389h1v1h-1zM468 476h1v1h-1zM469 163h1v1h-1zM469 219h1v1h-1zM469 276h1v1h-1zM469 333h1v1h-1zM469 389h1v1h-1zM469 437h1v1h-1zM469 476h1v1h-1zM470 163h1v1h-1zM470 220h1v1h-1zM470 276h1v1h-1zM470 333h1v1h-1zM470 390h1v1h-1zM470 437h1v1h-1zM471 434h1v1h-1zM472 434h1v1h-1zM474 392h1v1h-1zM475 393h1v1h-1zM476 479h1v1h-1zM477 166h1v1h-1zM477 223h1v1h-1zM477 280h1v1h-1zM477 336h1v1h-1zM477 393h1v1h-1zM477 435h1v1h-1zM477 480h1v1h-1zM478 167h1v1h-1zM478 223h1v1h-1zM478 280h1v1h-1zM478 337h1v1h-1zM478 394h1v1h-1zM478 434h1v1h-1zM479 438h1v1h-1zM480 438h1v1h-1zM482 396h1v1h-1zM483 396h1v1h-1zM484 483h1v1h-1zM485 170h1v1h-1zM485 227h1v1h-1zM485 283h1v1h-1zM485 340h1v1h-1zM485 397h1v1h-1zM485 433h1v1h-1zM485 484h1v1h-1zM486 170h1v1h-1zM486 227h1v1h-1zM486 284h1v1h-1zM486 341h1v1h-1zM486 397h1v1h-1zM486 432h1v1h-1zM487 441h1v1h-1zM488 442h1v1h-1zM490 400h1v1h-1zM491 400h1v1h-1zM492 487h1v1h-1zM493 174h1v1h-1zM493 230h1v1h-1zM493 287h1v1h-1zM493 344h1v1h-1zM493 400h1v1h-1zM493 430h1v1h-1zM494 174h1v1h-1zM494 231h1v1h-1zM494 287h1v1h-1zM494 344h1v1h-1zM494 401h1v1h-1zM494 430h1v1h-1zM495 445h1v1h-1zM496 445h1v1h-1zM498 403h1v1h-1zM499 404h1v1h-1zM501 177h1v1h-1zM501 234h1v1h-1zM501 291h1v1h-1zM501 347h1v1h-1zM501 404h1v1h-1zM501 428h1v1h-1zM502 178h1v1h-1zM502 234h1v1h-1zM502 291h1v1h-1zM502 348h1v1h-1zM502 405h1v1h-1zM502 428h1v1h-1zM503 449h1v1h-1zM504 449h1v1h-1zM506 407h1v1h-1zM507 407h1v1h-1zM509 181h1v1h-1zM509 238h1v1h-1zM509 294h1v1h-1zM509 351h1v1h-1zM509 408h1v1h-1zM509 426h1v1h-1zM510 181h1v1h-1zM510 238h1v1h-1zM510 295h1v1h-1zM510 352h1v1h-1zM510 408h1v1h-1zM510 426h1v1h-1zM511 452h1v1h-1zM512 453h1v1h-1zM514 411h1v1h-1zM515 411h1v1h-1zM517 185h1v1h-1zM517 241h1v1h-1zM517 298h1v1h-1zM517 355h1v1h-1zM517 411h1v1h-1zM517 424h1v1h-1zM518 185h1v1h-1zM518 242h1v1h-1zM518 299h1v1h-1zM518 355h1v1h-1zM518 412h1v1h-1zM518 424h1v1h-1zM519 456h1v1h-1zM520 456h1v1h-1zM522 414h1v1h-1zM523 415h1v1h-1zM525 188h1v1h-1zM525 245h1v1h-1zM525 302h1v1h-1zM525 358h1v1h-1zM525 415h1v1h-1zM525 422h1v1h-1zM526 189h1v1h-1zM526 246h1v1h-1zM526 302h1v1h-1zM526 359h1v1h-1zM526 416h1v1h-1zM526 421h1v1h-1zM527 460h1v1h-1zM528 460h1v1h-1zM530 418h1v1h-1zM531 418h1v1h-1zM533 192h1v1h-1zM533 249h1v1h-1zM533 305h1v1h-1zM533 362h1v1h-1zM533 419h1v1h-1zM533 420h1v1h-1zM534 193h1v1h-1zM534 196h1v1h-1zM534 197h1v1h-1zM534 204h1v1h-1zM534 205h1v1h-1zM534 212h1v1h-1zM534 213h1v1h-1zM534 220h1v1h-1zM534 221h1v1h-1zM534 228h1v1h-1zM534 229h1v1h-1zM534 236h1v1h-1zM534 237h1v1h-1zM534 244h1v1h-1zM534 245h1v1h-1zM534 249h1v1h-1zM534 252h1v1h-1zM534 253h1v1h-1zM534 260h1v1h-1zM534 261h1v1h-1zM534 268h1v1h-1zM534 269h1v1h-1zM534 276h1v1h-1zM534 277h1v1h-1zM534 284h1v1h-1zM534 285h1v1h-1zM534 292h1v1h-1zM534 293h1v1h-1zM534 300h1v1h-1zM534 301h1v1h-1zM534 306h1v1h-1zM534 308h1v1h-1zM534 309h1v1h-1zM534 316h1v1h-1zM534 317h1v1h-1zM534 324h1v1h-1zM534 325h1v1h-1zM534 332h1v1h-1zM534 333h1v1h-1zM534 340h1v1h-1zM534 341h1v1h-1zM534 348h1v1h-1zM534 349h1v1h-1zM534 356h1v1h-1zM534 357h1v1h-1zM534 363h1v1h-1zM534 364h1v1h-1zM534 365h1v1h-1zM534 372h1v1h-1zM534 373h1v1h-1zM534 380h1v1h-1zM534 381h1v1h-1zM534 388h1v1h-1zM534 389h1v1h-1zM534 396h1v1h-1zM534 397h1v1h-1zM534 404h1v1h-1zM534 405h1v1h-1zM534 412h1v1h-1zM534 413h1v1h-1zM534 419h1v1h-1zM535 463h1v1h-1zM536 464h1v1h-1zM538 422h1v1h-1zM539 422h1v1h-1zM541 196h1v1h-1zM541 252h1v1h-1zM541 309h1v1h-1zM541 366h1v1h-1zM541 423h1v1h-1zM542 196h1v1h-1zM542 253h1v1h-1zM542 310h1v1h-1zM542 366h1v1h-1zM542 423h1v1h-1zM543 467h1v1h-1zM544 468h1v1h-1zM546 425h1v1h-1zM547 426h1v1h-1zM549 199h1v1h-1zM549 256h1v1h-1zM549 313h1v1h-1zM549 370h1v1h-1zM549 426h1v1h-1zM550 200h1v1h-1zM550 257h1v1h-1zM550 313h1v1h-1zM550 370h1v1h-1zM550 427h1v1h-1zM551 471h1v1h-1zM554 429h1v1h-1zM555 429h1v1h-1zM557 203h1v1h-1zM557 260h1v1h-1zM557 317h1v1h-1zM557 373h1v1h-1zM557 430h1v1h-1zM558 204h1v1h-1zM558 260h1v1h-1zM558 317h1v1h-1zM558 374h1v1h-1zM558 430h1v1h-1zM562 433h1v1h-1zM563 433h1v1h-1zM565 207h1v1h-1zM565 264h1v1h-1zM565 320h1v1h-1zM565 377h1v1h-1zM565 434h1v1h-1zM566 207h1v1h-1zM566 264h1v1h-1zM566 321h1v1h-1zM566 377h1v1h-1zM566 434h1v1h-1zM570 436h1v1h-1zM571 437h1v1h-1zM573 210h1v1h-1zM573 267h1v1h-1zM573 324h1v1h-1zM573 381h1v1h-1zM573 437h1v1h-1zM574 211h1v1h-1zM574 268h1v1h-1zM574 324h1v1h-1zM574 381h1v1h-1zM574 438h1v1h-1zM578 440h1v1h-1zM579 441h1v1h-1zM581 214h1v1h-1zM581 271h1v1h-1zM581 328h1v1h-1zM581 384h1v1h-1zM581 441h1v1h-1zM582 215h1v1h-1zM582 271h1v1h-1zM582 328h1v1h-1zM582 385h1v1h-1zM582 441h1v1h-1zM586 444h1v1h-1zM587 444h1v1h-1zM589 218h1v1h-1zM589 275h1v1h-1zM589 331h1v1h-1zM589 388h1v1h-1zM589 445h1v1h-1zM590 218h1v1h-1zM590 275h1v1h-1zM590 332h1v1h-1zM590 388h1v1h-1zM590 445h1v1h-1zM594 447h1v1h-1zM595 448h1v1h-1zM597 222h1v1h-1zM597 278h1v1h-1zM597 335h1v1h-1zM597 392h1v1h-1zM597 448h1v1h-1zM598 222h1v1h-1zM598 279h1v1h-1zM598 335h1v1h-1zM598 392h1v1h-1zM598 449h1v1h-1zM602 451h1v1h-1zM603 452h1v1h-1zM605 225h1v1h-1zM605 282h1v1h-1zM605 339h1v1h-1zM605 395h1v1h-1zM605 452h1v1h-1zM606 226h1v1h-1zM606 282h1v1h-1zM606 339h1v1h-1zM606 396h1v1h-1zM606 452h1v1h-1zM610 231h1v1h-1zM610 232h1v1h-1zM610 239h1v1h-1zM610 240h1v1h-1zM610 247h1v1h-1zM610 248h1v1h-1zM610 255h1v1h-1zM610 256h1v1h-1zM610 263h1v1h-1zM610 264h1v1h-1zM610 271h1v1h-1zM610 272h1v1h-1zM610 279h1v1h-1zM610 280h1v1h-1zM610 287h1v1h-1zM610 288h1v1h-1zM610 295h1v1h-1zM610 296h1v1h-1zM610 303h1v1h-1zM610 304h1v1h-1zM610 311h1v1h-1zM610 312h1v1h-1zM610 319h1v1h-1zM610 320h1v1h-1zM610 327h1v1h-1zM610 328h1v1h-1zM610 335h1v1h-1zM610 336h1v1h-1zM610 343h1v1h-1zM610 344h1v1h-1zM610 351h1v1h-1zM610 352h1v1h-1zM610 359h1v1h-1zM610 360h1v1h-1zM610 367h1v1h-1zM610 368h1v1h-1zM610 375h1v1h-1zM610 376h1v1h-1zM610 383h1v1h-1zM610 384h1v1h-1zM610 391h1v1h-1zM610 392h1v1h-1zM610 399h1v1h-1zM610 400h1v1h-1zM610 407h1v1h-1zM610 408h1v1h-1zM610 415h1v1h-1zM610 416h1v1h-1zM610 423h1v1h-1zM610 424h1v1h-1zM610 431h1v1h-1zM610 432h1v1h-1zM610 439h1v1h-1zM610 440h1v1h-1zM610 447h1v1h-1zM610 448h1v1h-1zM610 455h1v1h-1z"/>
<line x1="315.4" y1="534.0" x2="610.4" y2="454.1" stroke="#000" stroke-width="1"/>
<line x1="315.4" y1="534.0" x2="88.8" y2="429.6" stroke="#000" stroke-width="1"/>
</g>
<g stroke="#000" stroke-width="1" stroke-linejoin="bevel" shape-rendering="crispEdges">
<polygon fill="#50ffaf" points="417.3,260.2 423.2,258.6 419.4,256.9 413.5,258.5"/>
<polygon fill="#50ffaf" points="411.4,261.8 417.3,260.2 413.5,258.5 407.6,260.1"/>
<polygon fill="#50ffaf" points="421.1,261.9 427,260.3 423.2,258.6 417.3,260.2"/>
<polygon fill="#50ffaf" points="405.5,263.4 411.4,261.8 407.6,260.1 401.7,261.7"/>
<polygon fill="#50ffaf" points="415.2,263.5 421.1,261.9 417.3,260.2 411.4,261.8"/>
<polygon fill="#50ffaf" points="399.6,265 405.5,263.4 401.7,261.7 395.8,263.2"/>
<polygon fill="#50ffaf" points="424.9,263.7 430.8,262.1 427,260.3 421.1,261.9"/>
<polygon fill="#50ffaf" points="409.3,265.1 415.2,263.5 411.4,261.8 405.5,263.4"/>
<polygon fill="#50ffaf" points="393.7,266.6 399.6,265 395.8,263.2 389.9,264.8"/>
<polygon fill="#50ffaf" points="419,265.3 424.9,263.7 421.1,261.9 415.2,263.5"/>
<polygon fill="#50ffaf" points="403.4,266.7 409.3,265.1 405.5,263.4 399.6,265"/>
<polygon fill="#50ffaf" points="428.6,265.4 434.5,263.8 430.8,262.1 424.9,263.7"/>
<polygon fill="#50ffaf" points="387.8,268.2 393.7,266.6 389.9,264.8 384,266.4"/>
<polygon fill="#50ffaf" points="413.1,266.9 419,265.3 415.2,263.5 409.3,265.1"/>
<polygon fill="#50ffaf" points="397.5,268.3 403.4,266.7 399.6,265 393.7,266.6"/>
<polygon fill="#50ffaf" points="422.7,267 428.6,265.4 424.9,263.7 419,265.3"/>
<polygon fill="#50ffaf" points="381.9,269.7 387.8,268.2 384,266.4 378.1,268"/>
<polygon fill="#50ffaf" points="407.2,268.4 413.1,266.9 409.3,265.1 403.4,266.7"/>
<polygon fill="#50ffaf" points="432.4,267.2 438.3,265.6 434.5,263.8 428.6,265.4"/>
<polygon fill="#50ffaf" points="391.6,269.9 397.5,268.3 393.7,266.6 387.8,268.2"/>
<polygon fill="#50ffaf" points="416.8,268.6 422.7,267 419,265.3 413.1,266.9"/>
<polygon fill="#50ffaf" points="376,271.3 381.9,269.7 378.1,268 372.2,269.6"/>
<polygon fill="#50ffaf" points="401.3,270 407.2,268.4 403.4,266.7 397.5,268.3"/>
<polygon fill="#50ffaf" points="426.5,268.7 432.4,267.2 428.6,265.4 422.7,267"/>
<polygon fill="#50ffaf" points="385.7,271.4 391.6,269.9 387.8,268.2 381.9,269.7"/>
<polygon fill="#50ffaf" points="410.9,270.2 416.8,268.6 413.1,266.9 407.2,268.4"/>
<polygon fill="#50ffaf" points="436.2,268.9 442.1,267.3 438.3,265.6 432.4,267.2"/>
<polygon fill="#50ffaf" points="370.1,272.8 376,271.3 372.2,269.6 366.3,271.1"/>
<polygon fill="#50ffaf" points="395.4,271.6 401.3,270 397.5,268.3 391.6,269.9"/>
<polygon fill="#50ffaf" points="420.6,270.3 426.5,268.7 422.7,267 416.8,268.6"/>
<polygon fill="#50ffaf" points="379.8,272.9 385.7,271.4 381.9,269.7 376,271.3"/>
<polygon fill="#50ffaf" points="405,271.7 410.9,270.2 407.2,268.4 401.3,270"/>
<polygon fill="#50ffaf" points="430.3,270.5 436.2,268.9 432.4,267.2 426.5,268.7"/>
<polygon fill="#50ffaf" points="364.2,274.3 370.1,272.8 366.3,271.1 360.4,272.7"/>
<polygon fill="#50ffaf" points="389.5,273.1 395.4,271.6 391.6,269.9 385.7,271.4"/>
<polygon fill="#50ffaf" points="414.7,271.9 420.6,270.3 416.8,268.6 410.9,270.2"/>
<polygon fill="#50ffaf" points="440,270.6 445.9,269 442.1,267.3 436.2,268.9"/>
<polygon fill="#50ffaf" points="373.9,274.4 379.8,272.9 376,271.3 370.1,272.8"/>
<polygon fill="#50ffaf" points="399.1,273.3 405,271.7 401.3,270 395.4,271.6"/>
<polygon fill="#50ffaf" points="424.4,272 430.3,270.5 426.5,268.7 420.6,270.3"/>
<polygon fill="#50ffaf" points="358.3,275.8 364.2,274.3 360.4,272.7 354.5,274.2"/>
<polygon fill="#50ffaf" points="383.6,274.6 389.5,273.1 385.7,271.4 379.8,272.9"/>
<polygon fill="#50ffaf" points="408.8,273.4 414.7,271.9 410.9,270.2 405,271.7"/>
<polygon fill="#50ffaf" points="434.1,272.2 440,270.6 436.2,268.9 430.3,270.5"/>
<polygon fill="#50ffaf" points="368,275.9 373.9,274.4 370.1,272.8 364.2,274.3"/>
<polygon fill="#50ffaf" points="393.2,274.8 399.1,273.3 395.4,271.6 389.5,273.1"/>
<polygon fill="#50ffaf" points="418.5,273.6 424.4,272 420.6,270.3 414.7,271.9"/>
<polygon fill="#50ffaf" points="443.8,272.4 449.7,270.8 445.9,269 440,270.6"/>
<polygon fill="#50ffaf" points="352.4,277.2 358.3,275.8 354.5,274.2 348.6,275.7"/>
<polygon fill="#50ffaf" points="377.7,276 383.6,274.6 379.8,272.9 373.9,274.4"/>
<polygon fill="#50ffaf" points="402.9,274.9 408.8,273.4 405,271.7 399.1,273.3"/>
<polygon fill="#50ffaf" points="428.2,273.8 434.1,272.2 430.3,270.5 424.4,272"/>
<polygon fill="#50ffaf" points="362.1,277.2 368,275.9 364.2,274.3 358.3,275.8"/>
<polygon fill="#50ffaf" points="387.3,276.2 393.2,274.8 389.5,273.1 383.6,274.6"/>
<polygon fill="#50ffaf" points="412.6,275.1 418.5,273.6 414.7,271.9 408.8,273.4"/>
<polygon fill="#50ffaf" points="437.9,273.9 443.8,272.4 440,270.6 434.1,272.2"/>
<polygon fill="#50ffaf" points="346.5,278.5 352.4,277.2 348.6,275.7 342.7,277.1"/>
<polygon fill="#50ffaf" points="371.8,277.4 377.7,276 373.9,274.4 368,275.9"/>
<polygon fill="#50ffaf" points="397,276.4 402.9,274.9 399.1,273.3 393.2,274.8"/>
<polygon fill="#50ffaf" points="422.3,275.3 428.2,273.8 424.4,272 418.5,273.6"/>
<polygon fill="#50ffaf" points="447.5,274.1 453.4,272.5 449.7,270.8 443.8,272.4"/>
<polygon fill="#60ff9f" points="356.2,278.5 362.1,277.2 358.3,275.8 352.4,277.2"/>
<polygon fill="#50ffaf" points="381.4,277.5 387.3,276.2 383.6,274.6 377.7,276"/>
<polygon fill="#50ffaf" points="406.7,276.6 412.6,275.1 408.8,273.4 402.9,274.9"/>
<polygon fill="#50ffaf" points="432,275.5 437.9,273.9 434.1,272.2 428.2,273.8"/>
<polygon fill="#60ff9f" points="340.6,279.8 346.5,278.5 342.7,277.1 336.8,278.5"/>
<polygon fill="#60ff9f" points="365.9,278.6 371.8,277.4 368,275.9 362.1,277.2"/>
<polygon fill="#50ffaf" points="391.1,277.7 397,276.4 393.2,274.8 387.3,276.2"/>
<polygon fill="#50ffaf" points="416.4,276.8 422.3,275.3 418.5,273.6 412.6,275.1"/>
<polygon fill="#50ffaf" points="441.6,275.6 447.5,274.1 443.8,272.4 437.9,273.9"/>
<polygon fill="#60ff9f" points="350.3,279.7 356.2,278.5 352.4,277.2 346.5,278.5"/>
<polygon fill="#60ff9f" points="375.5,278.7 381.4,277.5 377.7,276 371.8,277.4"/>
<polygon fill="#50ffaf" points="400.8,278 406.7,276.6 402.9,274.9 397,276.4"/>
<polygon fill="#50ffaf" points="426.1,277 432,275.5 428.2,273.8 422.3,275.3"/>
<polygon fill="#60ff9f" points="334.7,280.9 340.6,279.8 336.8,278.5 330.9,279.9"/>
<polygon fill="#50ffaf" points="451.3,275.8 457.2,274.2 453.4,272.5 447.5,274.1"/>
<polygon fill="#60ff9f" points="360,279.7 365.9,278.6 362.1,277.2 356.2,278.5"/>
<polygon fill="#60ff9f" points="385.2,279 391.1,277.7 387.3,276.2 381.4,277.5"/>
<polygon fill="#50ffaf" points="410.5,278.2 416.4,276.8 412.6,275.1 406.7,276.6"/>
<polygon fill="#50ffaf" points="435.7,277.2 441.6,275.6 437.9,273.9 432,275.5"/>
<polygon fill="#60ff9f" points="344.4,280.7 350.3,279.7 346.5,278.5 340.6,279.8"/>
<polygon fill="#60ff9f" points="369.6,279.8 375.5,278.7 371.8,277.4 365.9,278.6"/>
<polygon fill="#50ffaf" points="394.9,279.2 400.8,278 397,276.4 391.1,277.7"/>
<polygon fill="#50ffaf" points="420.2,278.4 426.1,277 422.3,275.3 416.4,276.8"/>
<polygon fill="#60ff9f" points="328.8,282 334.7,280.9 330.9,279.9 325,281.2"/>
<polygon fill="#50ffaf" points="445.4,277.4 451.3,275.8 447.5,274.1 441.6,275.6"/>
<polygon fill="#60ff9f" points="354.1,280.6 360,279.7 356.2,278.5 350.3,279.7"/>
<polygon fill="#60ff9f" points="379.3,280 385.2,279 381.4,277.5 375.5,278.7"/>
<polygon fill="#50ffaf" points="404.6,279.5 410.5,278.2 406.7,276.6 400.8,278"/>
<polygon fill="#50ffaf" points="429.8,278.7 435.7,277.2 432,275.5 426.1,277"/>
<polygon fill="#50ffaf" points="455.1,277.5 461,276 457.2,274.2 451.3,275.8"/>
<polygon fill="#60ff9f" points="338.5,281.7 344.4,280.7 340.6,279.8 334.7,280.9"/>
<polygon fill="#60ff9f" points="363.7,280.7 369.6,279.8 365.9,278.6 360,279.7"/>
<polygon fill="#60ff9f" points="389,280.3 394.9,279.2 391.1,277.7 385.2,279"/>
<polygon fill="#50ffaf" points="414.3,279.8 420.2,278.4 416.4,276.8 410.5,278.2"/>
<polygon fill="#60ff9f" points="322.9,283.1 328.8,282 325,281.2 319.1,282.4"/>
<polygon fill="#50ffaf" points="439.5,278.9 445.4,277.4 441.6,275.6 435.7,277.2"/>
<polygon fill="#60ff9f" points="348.2,281.4 354.1,280.6 350.3,279.7 344.4,280.7"/>
<polygon fill="#60ff9f" points="373.4,280.8 379.3,280 375.5,278.7 369.6,279.8"/>
<polygon fill="#60ff9f" points="398.7,280.7 404.6,279.5 400.8,278 394.9,279.2"/>
<polygon fill="#50ffaf" points="423.9,280.1 429.8,278.7 426.1,277 420.2,278.4"/>
<polygon fill="#50ffaf" points="449.2,279.1 455.1,277.5 451.3,275.8 445.4,277.4"/>
<polygon fill="#60ff9f" points="332.6,282.5 338.5,281.7 334.7,280.9 328.8,282"/>
<polygon fill="#60ff9f" points="357.8,281.3 363.7,280.7 360,279.7 354.1,280.6"/>
<polygon fill="#60ff9f" points="383.1,281.2 389,280.3 385.2,279 379.3,280"/>
<polygon fill="#60ff9f" points="408.4,281 414.3,279.8 410.5,278.2 404.6,279.5"/>
<polygon fill="#50ffaf" points="433.6,280.3 439.5,278.9 435.7,277.2 429.8,278.7"/>
<polygon fill="#60ff9f" points="317,284.1 322.9,283.1 319.1,282.4 313.2,283.7"/>
<polygon fill="#50ffaf" points="458.9,279.2 464.8,277.7 461,276 455.1,277.5"/>
<polygon fill="#70ff8f" points="342.3,281.9 348.2,281.4 344.4,280.7 338.5,281.7"/>
<polygon fill="#60ff9f" points="367.5,281.4 373.4,280.8 369.6,279.8 363.7,280.7"/>
<polygon fill="#60ff9f" points="392.8,281.6 398.7,280.7 394.9,279.2 389,280.3"/>
<polygon fill="#50ffaf" points="418,281.4 423.9,280.1 420.2,278.4 414.3,279.8"/>
<polygon fill="#50ffaf" points="443.3,280.6 449.2,279.1 445.4,277.4 439.5,278.9"/>
<polygon fill="#70ff8f" points="326.7,283.2 332.6,282.5 328.8,282 322.9,283.1"/>
<polygon fill="#70ff8f" points="351.9,281.6 357.8,281.3 354.1,280.6 348.2,281.4"/>
<polygon fill="#60ff9f" points="377.2,281.7 383.1,281.2 379.3,280 373.4,280.8"/>
<polygon fill="#60ff9f" points="402.5,282.1 408.4,281 404.6,279.5 398.7,280.7"/>
<polygon fill="#50ffaf" points="427.7,281.7 433.6,280.3 429.8,278.7 423.9,280.1"/>
<polygon fill="#70ff8f" points="311.1,285.1 317,284.1 313.2,283.7 307.3,284.9"/>
<polygon fill="#50ffaf" points="453,280.8 458.9,279.2 455.1,277.5 449.2,279.1"/>
<polygon fill="#70ff8f" points="336.4,282.3 342.3,281.9 338.5,281.7 332.6,282.5"/>
<polygon fill="#70ff8f" points="361.6,281.6 367.5,281.4 363.7,280.7 357.8,281.3"/>
<polygon fill="#60ff9f" points="386.9,282.2 392.8,281.6 389,280.3 383.1,281.2"/>
<polygon fill="#60ff9f" points="412.1,282.5 418,281.4 414.3,279.8 408.4,281"/>
<polygon fill="#50ffaf" points="437.4,282 443.3,280.6 439.5,278.9 433.6,280.3"/>
<polygon fill="#70ff8f" points="320.8,283.8 326.7,283.2 322.9,283.1 317,284.1"/>
<polygon fill="#50ffaf" points="462.6,281 468.5,279.4 464.8,277.7 458.9,279.2"/>
<polygon fill="#80ff80" points="346,281.7 351.9,281.6 348.2,281.4 342.3,281.9"/>
<polygon fill="#70ff8f" points="371.3,281.9 377.2,281.7 373.4,280.8 367.5,281.4"/>
<polygon fill="#60ff9f" points="396.6,282.8 402.5,282.1 398.7,280.7 392.8,281.6"/>
<polygon fill="#60ff9f" points="421.8,282.9 427.7,281.7 423.9,280.1 418,281.4"/>
<polygon fill="#70ff8f" points="305.2,286.1 311.1,285.1 307.3,284.9 301.4,286.2"/>
<polygon fill="#50ffaf" points="447.1,282.2 453,280.8 449.2,279.1 443.3,280.6"/>
<polygon fill="#80ff80" points="330.5,282.5 336.4,282.3 332.6,282.5 326.7,283.2"/>
<polygon fill="#80ff80" points="355.7,281.4 361.6,281.6 357.8,281.3 351.9,281.6"/>
<polygon fill="#70ff8f" points="381,282.4 386.9,282.2 383.1,281.2 377.2,281.7"/>
<polygon fill="#60ff9f" points="406.2,283.4 412.1,282.5 408.4,281 402.5,282.1"/>
<polygon fill="#50ffaf" points="431.5,283.3 437.4,282 433.6,280.3 427.7,281.7"/>
<polygon fill="#80ff80" points="314.9,284.4 320.8,283.8 317,284.1 311.1,285.1"/>
<polygon fill="#50ffaf" points="456.7,282.5 462.6,281 458.9,279.2 453,280.8"/>
<polygon fill="#80ff80" points="340.1,281.4 346,281.7 342.3,281.9 336.4,282.3"/>
<polygon fill="#80ff80" points="365.4,281.5 371.3,281.9 367.5,281.4 361.6,281.6"/>
<polygon fill="#70ff8f" points="390.7,283.2 396.6,282.8 392.8,281.6 386.9,282.2"/>
<polygon fill="#60ff9f" points="415.9,284 421.8,282.9 418,281.4 412.1,282.5"/>
<polygon fill="#70ff8f" points="299.3,287.2 305.2,286.1 301.4,286.2 295.5,287.5"/>
<polygon fill="#50ffaf" points="441.2,283.6 447.1,282.2 443.3,280.6 437.4,282"/>
<polygon fill="#50ffaf" points="466.4,282.7 472.3,281.1 468.5,279.4 462.6,281"/>
<polygon fill="#80ff80" points="324.6,282.6 330.5,282.5 326.7,283.2 320.8,283.8"/>
<polygon fill="#8fff70" points="349.8,280.8 355.7,281.4 351.9,281.6 346,281.7"/>
<polygon fill="#70ff8f" points="375.1,282.1 381,282.4 377.2,281.7 371.3,281.9"/>
<polygon fill="#60ff9f" points="400.3,283.9 406.2,283.4 402.5,282.1 396.6,282.8"/>
<polygon fill="#60ff9f" points="425.6,284.4 431.5,283.3 427.7,281.7 421.8,282.9"/>
<polygon fill="#80ff80" points="309,285.1 314.9,284.4 311.1,285.1 305.2,286.1"/>
<polygon fill="#50ffaf" points="450.8,283.9 456.7,282.5 453,280.8 447.1,282.2"/>
<polygon fill="#8fff70" points="334.2,281 340.1,281.4 336.4,282.3 330.5,282.5"/>
<polygon fill="#8fff70" points="359.5,280.7 365.4,281.5 361.6,281.6 355.7,281.4"/>
<polygon fill="#70ff8f" points="384.8,283 390.7,283.2 386.9,282.2 381,282.4"/>
<polygon fill="#60ff9f" points="410,284.7 415.9,284 412.1,282.5 406.2,283.4"/>
<polygon fill="#70ff8f" points="293.4,288.4 299.3,287.2 295.5,287.5 289.6,288.8"/>
<polygon fill="#50ffaf" points="435.3,284.9 441.2,283.6 437.4,282 431.5,283.3"/>
<polygon fill="#50ffaf" points="460.5,284.1 466.4,282.7 462.6,281 456.7,282.5"/>
<polygon fill="#8fff70" points="318.7,282.7 324.6,282.6 320.8,283.8 314.9,284.4"/>
<polygon fill="#9fff60" points="343.9,279.8 349.8,280.8 346,281.7 340.1,281.4"/>
<polygon fill="#80ff80" points="369.2,281.2 375.1,282.1 371.3,281.9 365.4,281.5"/>
<polygon fill="#70ff8f" points="394.4,284 400.3,283.9 396.6,282.8 390.7,283.2"/>
<polygon fill="#60ff9f" points="419.7,285.4 425.6,284.4 421.8,282.9 415.9,284"/>
<polygon fill="#50ffaf" points="444.9,285.2 450.8,283.9 447.1,282.2 441.2,283.6"/>
<polygon fill="#80ff80" points="303.1,285.8 309,285.1 305.2,286.1 299.3,287.2"/>
<polygon fill="#50ffaf" points="470.2,284.4 476.1,282.9 472.3,281.1 466.4,282.7"/>
<polygon fill="#9fff60" points="328.3,280.3 334.2,281 330.5,282.5 324.6,282.6"/>
<polygon fill="#9fff60" points="353.6,279.3 359.5,280.7 355.7,281.4 349.8,280.8"/>
<polygon fill="#80ff80" points="378.9,282.2 384.8,283 381,282.4 375.1,282.1"/>
<polygon fill="#70ff8f" points="287.5,289.7 293.4,288.4 289.6,288.8 283.7,290.3"/>
<polygon fill="#70ff8f" points="404.1,285.1 410,284.7 406.2,283.4 400.3,283.9"/>
<polygon fill="#60ff9f" points="429.4,285.9 435.3,284.9 431.5,283.3 425.6,284.4"/>
<polygon fill="#50ffaf" points="454.6,285.5 460.5,284.1 456.7,282.5 450.8,283.9"/>
<polygon fill="#8fff70" points="312.8,282.8 318.7,282.7 314.9,284.4 309,285.1"/>
<polygon fill="#afff50" points="338,278.4 343.9,279.8 340.1,281.4 334.2,281"/>
<polygon fill="#80ff80" points="388.5,283.5 394.4,284 390.7,283.2 384.8,283"/>
<polygon fill="#9fff60" points="363.3,279.7 369.2,281.2 365.4,281.5 359.5,280.7"/>
<polygon fill="#60ff9f" points="413.8,286 419.7,285.4 415.9,284 410,284.7"/>
<polygon fill="#60ff9f" points="439,286.4 444.9,285.2 441.2,283.6 435.3,284.9"/>
<polygon fill="#8fff70" points="297.2,286.8 303.1,285.8 299.3,287.2 293.4,288.4"/>
<polygon fill="#50ffaf" points="464.3,285.8 470.2,284.4 466.4,282.7 460.5,284.1"/>
<polygon fill="#afff50" points="322.4,279.6 328.3,280.3 324.6,282.6 318.7,282.7"/>
<polygon fill="#70ff8f" points="281.6,291.2 287.5,289.7 283.7,290.3 277.8,291.8"/>
<polygon fill="#70ff8f" points="398.2,284.9 404.1,285.1 400.3,283.9 394.4,284"/>
<polygon fill="#afff50" points="347.7,277.4 353.6,279.3 349.8,280.8 343.9,279.8"/>
<polygon fill="#8fff70" points="373,280.7 378.9,282.2 375.1,282.1 369.2,281.2"/>
<polygon fill="#60ff9f" points="423.5,286.7 429.4,285.9 425.6,284.4 419.7,285.4"/>
<polygon fill="#50ffaf" points="448.7,286.8 454.6,285.5 450.8,283.9 444.9,285.2"/>
<polygon fill="#50ffaf" points="474,286 479.9,284.6 476.1,282.9 470.2,284.4"/>
<polygon fill="#9fff60" points="306.9,283.1 312.8,282.8 309,285.1 303.1,285.8"/>
<polygon fill="#bfff40" points="332.1,276.8 338,278.4 334.2,281 328.3,280.3"/>
<polygon fill="#70ff8f" points="407.9,286.1 413.8,286 410,284.7 404.1,285.1"/>
<polygon fill="#8fff70" points="382.6,282.3 388.5,283.5 384.8,283 378.9,282.2"/>
<polygon fill="#afff50" points="357.4,277.4 363.3,279.7 359.5,280.7 353.6,279.3"/>
<polygon fill="#60ff9f" points="433.1,287.3 439,286.4 435.3,284.9 429.4,285.9"/>
<polygon fill="#8fff70" points="291.3,287.9 297.2,286.8 293.4,288.4 287.5,289.7"/>
<polygon fill="#50ffaf" points="458.4,287.1 464.3,285.8 460.5,284.1 454.6,285.5"/>
<polygon fill="#bfff40" points="316.5,279.1 322.4,279.6 318.7,282.7 312.8,282.8"/>
<polygon fill="#70ff8f" points="275.7,292.9 281.6,291.2 277.8,291.8 271.9,293.4"/>
<polygon fill="#80ff80" points="392.3,284.1 398.2,284.9 394.4,284 388.5,283.5"/>
<polygon fill="#60ff9f" points="417.6,287.2 423.5,286.7 419.7,285.4 413.8,286"/>
<polygon fill="#cfff30" points="341.8,275 347.7,277.4 343.9,279.8 338,278.4"/>
<polygon fill="#afff50" points="367.1,278.4 373,280.7 369.2,281.2 363.3,279.7"/>
<polygon fill="#60ff9f" points="442.8,287.9 448.7,286.8 444.9,285.2 439,286.4"/>
<polygon fill="#50ffaf" points="468.1,287.4 474,286 470.2,284.4 464.3,285.8"/>
<polygon fill="#9fff60" points="301,283.7 306.9,283.1 303.1,285.8 297.2,286.8"/>
<polygon fill="#80ff80" points="402,285.8 407.9,286.1 404.1,285.1 398.2,284.9"/>
<polygon fill="#cfff30" points="326.2,275.2 332.1,276.8 328.3,280.3 322.4,279.6"/>
<polygon fill="#8fff70" points="285.4,289.4 291.3,287.9 287.5,289.7 281.6,291.2"/>
<polygon fill="#60ff9f" points="427.2,288 433.1,287.3 429.4,285.9 423.5,286.7"/>
<polygon fill="#9fff60" points="376.7,280.3 382.6,282.3 378.9,282.2 373,280.7"/>
<polygon fill="#60ff9f" points="452.5,288.3 458.4,287.1 454.6,285.5 448.7,286.8"/>
<polygon fill="#cfff30" points="351.5,274.4 357.4,277.4 353.6,279.3 347.7,277.4"/>
<polygon fill="#50ffaf" points="477.7,287.7 483.6,286.3 479.9,284.6 474,286"/>
<polygon fill="#70ff8f" points="269.8,294.7 275.7,292.9 271.9,293.4 266,295.2"/>
<polygon fill="#bfff40" points="310.6,278.7 316.5,279.1 312.8,282.8 306.9,283.1"/>
<polygon fill="#70ff8f" points="411.7,287.2 417.6,287.2 413.8,286 407.9,286.1"/>
<polygon fill="#8fff70" points="386.4,282.5 392.3,284.1 388.5,283.5 382.6,282.3"/>
<polygon fill="#60ff9f" points="436.9,288.7 442.8,287.9 439,286.4 433.1,287.3"/>
<polygon fill="#dfff20" points="335.9,272.3 341.8,275 338,278.4 332.1,276.8"/>
<polygon fill="#cfff30" points="361.2,275.2 367.1,278.4 363.3,279.7 357.4,277.4"/>
<polygon fill="#50ffaf" points="462.2,288.7 468.1,287.4 464.3,285.8 458.4,287.1"/>
<polygon fill="#afff50" points="295.1,284.6 301,283.7 297.2,286.8 291.3,287.9"/>
<polygon fill="#8fff70" points="279.5,291.1 285.4,289.4 281.6,291.2 275.7,292.9"/>
<polygon fill="#70ff8f" points="421.3,288.3 427.2,288 423.5,286.7 417.6,287.2"/>
<polygon fill="#8fff70" points="396.1,284.7 402,285.8 398.2,284.9 392.3,284.1"/>
<polygon fill="#dfff20" points="320.3,273.7 326.2,275.2 322.4,279.6 316.5,279.1"/>
<polygon fill="#60ff9f" points="446.6,289.3 452.5,288.3 448.7,286.8 442.8,287.9"/>
<polygon fill="#bfff40" points="370.8,277.2 376.7,280.3 373,280.7 367.1,278.4"/>
<polygon fill="#50ffaf" points="471.8,289.1 477.7,287.7 474,286 468.1,287.4"/>
<polygon fill="#efff10" points="345.6,270.8 351.5,274.4 347.7,277.4 341.8,275"/>
<polygon fill="#70ff8f" points="263.9,296.7 269.8,294.7 266,295.2 260.1,297"/>
<polygon fill="#cfff30" points="304.7,278.8 310.6,278.7 306.9,283.1 301,283.7"/>
<polygon fill="#80ff80" points="405.8,286.6 411.7,287.2 407.9,286.1 402,285.8"/>
<polygon fill="#60ff9f" points="431,289.2 436.9,288.7 433.1,287.3 427.2,288"/>
<polygon fill="#afff50" points="380.5,280 386.4,282.5 382.6,282.3 376.7,280.3"/>
<polygon fill="#60ff9f" points="456.3,289.8 462.2,288.7 458.4,287.1 452.5,288.3"/>
<polygon fill="#afff50" points="289.2,286 295.1,284.6 291.3,287.9 285.4,289.4"/>
<polygon fill="#ffff00" points="330,269.5 335.9,272.3 332.1,276.8 326.2,275.2"/>
<polygon fill="#50ffaf" points="481.5,289.4 487.4,288 483.6,286.3 477.7,287.7"/>
<polygon fill="#efff10" points="355.3,271.2 361.2,275.2 357.4,277.4 351.5,274.4"/>
<polygon fill="#8fff70" points="273.6,293.1 279.5,291.1 275.7,292.9 269.8,294.7"/>
<polygon fill="#70ff8f" points="415.4,288.2 421.3,288.3 417.6,287.2 411.7,287.2"/>
<polygon fill="#60ff9f" points="440.7,290 446.6,289.3 442.8,287.9 436.9,288.7"/>
<polygon fill="#9fff60" points="390.2,282.8 396.1,284.7 392.3,284.1 386.4,282.5"/>
<polygon fill="#efff10" points="314.4,272.6 320.3,273.7 316.5,279.1 310.6,278.7"/>
<polygon fill="#60ff9f" points="465.9,290.3 471.8,289.1 468.1,287.4 462.2,288.7"/>
<polygon fill="#dfff20" points="364.9,273.2 370.8,277.2 367.1,278.4 361.2,275.2"/>
<polygon fill="#70ff8f" points="258,298.9 263.9,296.7 260.1,297 254.2,298.9"/>
<polygon fill="#ffef00" points="339.7,266.9 345.6,270.8 341.8,275 335.9,272.3"/>
<polygon fill="#cfff30" points="298.8,279.4 304.7,278.8 301,283.7 295.1,284.6"/>
<polygon fill="#70ff8f" points="425.1,289.3 431,289.2 427.2,288 421.3,288.3"/>
<polygon fill="#8fff70" points="399.9,285.4 405.8,286.6 402,285.8 396.1,284.7"/>
<polygon fill="#60ff9f" points="450.4,290.6 456.3,289.8 452.5,288.3 446.6,289.3"/>
<polygon fill="#afff50" points="283.3,287.8 289.2,286 285.4,289.4 279.5,291.1"/>
<polygon fill="#50ffaf" points="475.6,290.7 481.5,289.4 477.7,287.7 471.8,289.1"/>
<polygon fill="#cfff30" points="374.6,276.4 380.5,280 376.7,280.3 370.8,277.2"/>
<polygon fill="#ffdf00" points="324.1,266.9 330,269.5 326.2,275.2 320.3,273.7"/>
<polygon fill="#ffef00" points="349.4,266.4 355.3,271.2 351.5,274.4 345.6,270.8"/>
<polygon fill="#80ff80" points="267.7,295.4 273.6,293.1 269.8,294.7 263.9,296.7"/>
<polygon fill="#80ff80" points="409.5,287.5 415.4,288.2 411.7,287.2 405.8,286.6"/>
<polygon fill="#70ff8f" points="434.8,290.3 440.7,290 436.9,288.7 431,289.2"/>
<polygon fill="#ffff00" points="308.5,272 314.4,272.6 310.6,278.7 304.7,278.8"/>
<polygon fill="#60ff9f" points="460,291.2 465.9,290.3 462.2,288.7 456.3,289.8"/>
<polygon fill="#bfff40" points="384.3,280 390.2,282.8 386.4,282.5 380.5,280"/>
<polygon fill="#70ff8f" points="252.1,301.1 258,298.9 254.2,298.9 248.3,300.9"/>
<polygon fill="#50ffaf" points="485.3,291.1 491.2,289.7 487.4,288 481.5,289.4"/>
<polygon fill="#cfff30" points="292.9,280.7 298.8,279.4 295.1,284.6 289.2,286"/>
<polygon fill="#ffef00" points="359,268.2 364.9,273.2 361.2,275.2 355.3,271.2"/>
<polygon fill="#ffcf00" points="333.8,262.8 339.7,266.9 335.9,272.3 330,269.5"/>
<polygon fill="#80ff80" points="419.2,289 425.1,289.3 421.3,288.3 415.4,288.2"/>
<polygon fill="#9fff60" points="277.4,290.1 283.3,287.8 279.5,291.1 273.6,293.1"/>
<polygon fill="#60ff9f" points="444.5,291.1 450.4,290.6 446.6,289.3 440.7,290"/>
<polygon fill="#9fff60" points="394,283.4 399.9,285.4 396.1,284.7 390.2,282.8"/>
<polygon fill="#60ff9f" points="469.7,291.8 475.6,290.7 471.8,289.1 465.9,290.3"/>
<polygon fill="#80ff80" points="261.8,297.8 267.7,295.4 263.9,296.7 258,298.9"/>
<polygon fill="#efff10" points="368.7,271.8 374.6,276.4 370.8,277.2 364.9,273.2"/>
<polygon fill="#ffcf00" points="318.2,264.8 324.1,266.9 320.3,273.7 314.4,272.6"/>
<polygon fill="#ffbf00" points="343.5,261.2 349.4,266.4 345.6,270.8 339.7,266.9"/>
<polygon fill="#70ff8f" points="428.9,290.2 434.8,290.3 431,289.2 425.1,289.3"/>
<polygon fill="#8fff70" points="403.6,286.2 409.5,287.5 405.8,286.6 399.9,285.4"/>
<polygon fill="#60ff9f" points="454.1,291.9 460,291.2 456.3,289.8 450.4,290.6"/>
<polygon fill="#ffef00" points="302.6,272.2 308.5,272 304.7,278.8 298.8,279.4"/>
<polygon fill="#60ff9f" points="246.2,303.3 252.1,301.1 248.3,300.9 242.4,302.9"/>
<polygon fill="#50ffaf" points="479.4,292.3 485.3,291.1 481.5,289.4 475.6,290.7"/>
<polygon fill="#dfff20" points="378.4,276.2 384.3,280 380.5,280 374.6,276.4"/>
<polygon fill="#cfff30" points="287,282.6 292.9,280.7 289.2,286 283.3,287.8"/>
<polygon fill="#9fff60" points="271.5,292.7 277.4,290.1 273.6,293.1 267.7,295.4"/>
<polygon fill="#ffcf00" points="353.1,262.4 359,268.2 355.3,271.2 349.4,266.4"/>
<polygon fill="#ffaf00" points="327.9,258.9 333.8,262.8 330,269.5 324.1,266.9"/>
<polygon fill="#70ff8f" points="438.6,291.2 444.5,291.1 440.7,290 434.8,290.3"/>
<polygon fill="#8fff70" points="413.3,288.2 419.2,289 415.4,288.2 409.5,287.5"/>
<polygon fill="#60ff9f" points="463.8,292.6 469.7,291.8 465.9,290.3 460,291.2"/>
<polygon fill="#bfff40" points="388.1,280.5 394,283.4 390.2,282.8 384.3,280"/>
<polygon fill="#50ffaf" points="489.1,292.7 495,291.4 491.2,289.7 485.3,291.1"/>
<polygon fill="#80ff80" points="255.9,300.4 261.8,297.8 258,298.9 252.1,301.1"/>
<polygon fill="#ffbf00" points="312.3,263.4 318.2,264.8 314.4,272.6 308.5,272"/>
<polygon fill="#ffdf00" points="362.8,266.1 368.7,271.8 364.9,273.2 359,268.2"/>
<polygon fill="#80ff80" points="423,289.7 428.9,290.2 425.1,289.3 419.2,289"/>
<polygon fill="#60ff9f" points="240.3,305.5 246.2,303.3 242.4,302.9 236.5,304.8"/>
<polygon fill="#70ff8f" points="448.2,292.2 454.1,291.9 450.4,290.6 444.5,291.1"/>
<polygon fill="#ffef00" points="296.7,273.4 302.6,272.2 298.8,279.4 292.9,280.7"/>
<polygon fill="#afff50" points="397.7,284.2 403.6,286.2 399.9,285.4 394,283.4"/>
<polygon fill="#60ff9f" points="473.5,293.3 479.4,292.3 475.6,290.7 469.7,291.8"/>
<polygon fill="#ff8f00" points="337.6,255.8 343.5,261.2 339.7,266.9 333.8,262.8"/>
<polygon fill="#cfff30" points="281.1,285.2 287,282.6 283.3,287.8 277.4,290.1"/>
<polygon fill="#ffff00" points="372.5,271.3 378.4,276.2 374.6,276.4 368.7,271.8"/>
<polygon fill="#8fff70" points="265.6,295.6 271.5,292.7 267.7,295.4 261.8,297.8"/>
<polygon fill="#80ff80" points="432.7,290.9 438.6,291.2 434.8,290.3 428.9,290.2"/>
<polygon fill="#60ff9f" points="457.9,293.1 463.8,292.6 460,291.2 454.1,291.9"/>
<polygon fill="#9fff60" points="407.4,286.8 413.3,288.2 409.5,287.5 403.6,286.2"/>
<polygon fill="#ff8f00" points="322,255.7 327.9,258.9 324.1,266.9 318.2,264.8"/>
<polygon fill="#60ff9f" points="483.2,293.9 489.1,292.7 485.3,291.1 479.4,292.3"/>
<polygon fill="#70ff8f" points="250,303 255.9,300.4 252.1,301.1 246.2,303.3"/>
<polygon fill="#ff8f00" points="347.2,256 353.1,262.4 349.4,266.4 343.5,261.2"/>
<polygon fill="#dfff20" points="382.2,276.7 388.1,280.5 384.3,280 378.4,276.2"/>
<polygon fill="#ffaf00" points="306.4,263.1 312.3,263.4 308.5,272 302.6,272.2"/>
<polygon fill="#60ff9f" points="234.4,307.6 240.3,305.5 236.5,304.8 230.6,306.7"/>
<polygon fill="#ffef00" points="290.8,275.4 296.7,273.4 292.9,280.7 287,282.6"/>
<polygon fill="#70ff8f" points="442.3,292 448.2,292.2 444.5,291.1 438.6,291.2"/>
<polygon fill="#8fff70" points="417.1,288.7 423,289.7 419.2,289 413.3,288.2"/>
<polygon fill="#60ff9f" points="467.6,294 473.5,293.3 469.7,291.8 463.8,292.6"/>
<polygon fill="#bfff40" points="275.2,288.3 281.1,285.2 277.4,290.1 271.5,292.7"/>
<polygon fill="#ffaf00" points="356.9,259.5 362.8,266.1 359,268.2 353.1,262.4"/>
<polygon fill="#50ffaf" points="492.9,294.4 498.8,293.1 495,291.4 489.1,292.7"/>
<polygon fill="#bfff40" points="391.8,281.5 397.7,284.2 394,283.4 388.1,280.5"/>
<polygon fill="#ff7000" points="331.7,250.7 337.6,255.8 333.8,262.8 327.9,258.9"/>
<polygon fill="#8fff70" points="259.7,298.7 265.6,295.6 261.8,297.8 255.9,300.4"/>
<polygon fill="#ffcf00" points="366.6,265.3 372.5,271.3 368.7,271.8 362.8,266.1"/>
<polygon fill="#8fff70" points="426.8,290.1 432.7,290.9 428.9,290.2 423,289.7"/>
<polygon fill="#70ff8f" points="452,293.2 457.9,293.1 454.1,291.9 448.2,292.2"/>
<polygon fill="#70ff8f" points="244.1,305.6 250,303 246.2,303.3 240.3,305.5"/>
<polygon fill="#60ff9f" points="477.3,294.9 483.2,293.9 479.4,292.3 473.5,293.3"/>
<polygon fill="#afff50" points="401.5,285 407.4,286.8 403.6,286.2 397.7,284.2"/>
<polygon fill="#ff7000" points="316.1,253.5 322,255.7 318.2,264.8 312.3,263.4"/>
<polygon fill="#ffaf00" points="300.5,264.1 306.4,263.1 302.6,272.2 296.7,273.4"/>
<polygon fill="#ff6000" points="341.3,249.5 347.2,256 343.5,261.2 337.6,255.8"/>
<polygon fill="#60ff9f" points="228.5,309.7 234.4,307.6 230.6,306.7 224.7,308.6"/>
<polygon fill="#ffef00" points="376.3,271.9 382.2,276.7 378.4,276.2 372.5,271.3"/>
<polygon fill="#ffff00" points="284.9,278.4 290.8,275.4 287,282.6 281.1,285.2"/>
<polygon fill="#bfff40" points="269.3,291.9 275.2,288.3 271.5,292.7 265.6,295.6"/>
<polygon fill="#80ff80" points="436.4,291.3 442.3,292 438.6,291.2 432.7,290.9"/>
<polygon fill="#70ff8f" points="461.7,294.3 467.6,294 463.8,292.6 457.9,293.1"/>
<polygon fill="#9fff60" points="411.2,287.3 417.1,288.7 413.3,288.2 407.4,286.8"/>
<polygon fill="#60ff9f" points="487,295.5 492.9,294.4 489.1,292.7 483.2,293.9"/>
<polygon fill="#80ff80" points="253.8,301.8 259.7,298.7 255.9,300.4 250,303"/>
<polygon fill="#dfff20" points="385.9,278 391.8,281.5 388.1,280.5 382.2,276.7"/>
<polygon fill="#ff7000" points="351,252.4 356.9,259.5 353.1,262.4 347.2,256"/>
<polygon fill="#ff5000" points="325.8,246.4 331.7,250.7 327.9,258.9 322,255.7"/>
<polygon fill="#60ff9f" points="238.2,308.1 244.1,305.6 240.3,305.5 234.4,307.6"/>
<polygon fill="#80ff80" points="446.1,292.7 452,293.2 448.2,292.2 442.3,292"/>
<polygon fill="#60ff9f" points="471.4,295.4 477.3,294.9 473.5,293.3 467.6,294"/>
<polygon fill="#9fff60" points="420.9,288.9 426.8,290.1 423,289.7 417.1,288.7"/>
<polygon fill="#50ffaf" points="496.6,296.1 502.5,294.8 498.8,293.1 492.9,294.4"/>
<polygon fill="#cfff30" points="395.6,282.6 401.5,285 397.7,284.2 391.8,281.5"/>
<polygon fill="#ff6000" points="310.2,252.7 316.1,253.5 312.3,263.4 306.4,263.1"/>
<polygon fill="#ff9f00" points="360.7,258.5 366.6,265.3 362.8,266.1 356.9,259.5"/>
<polygon fill="#ffaf00" points="294.6,266.3 300.5,264.1 296.7,273.4 290.8,275.4"/>
<polygon fill="#efff10" points="279,282.2 284.9,278.4 281.1,285.2 275.2,288.3"/>
<polygon fill="#60ff9f" points="222.6,311.7 228.5,309.7 224.7,308.6 218.8,310.5"/>
<polygon fill="#afff50" points="263.4,295.7 269.3,291.9 265.6,295.6 259.7,298.7"/>
<polygon fill="#70ff8f" points="455.8,294.1 461.7,294.3 457.9,293.1 452,293.2"/>
<polygon fill="#ff3000" points="335.4,243.3 341.3,249.5 337.6,255.8 331.7,250.7"/>
<polygon fill="#8fff70" points="430.5,290.2 436.4,291.3 432.7,290.9 426.8,290.1"/>
<polygon fill="#ffcf00" points="370.4,266.2 376.3,271.9 372.5,271.3 366.6,265.3"/>
<polygon fill="#60ff9f" points="481.1,296.4 487,295.5 483.2,293.9 477.3,294.9"/>
<polygon fill="#80ff80" points="247.9,304.9 253.8,301.8 250,303 244.1,305.6"/>
<polygon fill="#bfff40" points="405.3,285.6 411.2,287.3 407.4,286.8 401.5,285"/>
<polygon fill="#ffef00" points="380,273.8 385.9,278 382.2,276.7 376.3,271.9"/>
<polygon fill="#60ff9f" points="232.3,310.5 238.2,308.1 234.4,307.6 228.5,309.7"/>
<polygon fill="#ff3000" points="319.9,243.3 325.8,246.4 322,255.7 316.1,253.5"/>
<polygon fill="#70ff8f" points="465.5,295.5 471.4,295.4 467.6,294 461.7,294.3"/>
<polygon fill="#ff4000" points="345.1,245 351,252.4 347.2,256 341.3,249.5"/>
<polygon fill="#8fff70" points="440.2,291.6 446.1,292.7 442.3,292 436.4,291.3"/>
<polygon fill="#60ff9f" points="490.7,297.2 496.6,296.1 492.9,294.4 487,295.5"/>
<polygon fill="#afff50" points="415,287.4 420.9,288.9 417.1,288.7 411.2,287.3"/>
<polygon fill="#ff6000" points="304.3,253.4 310.2,252.7 306.4,263.1 300.5,264.1"/>
<polygon fill="#dfff20" points="273.1,286.5 279,282.2 275.2,288.3 269.3,291.9"/>
<polygon fill="#ffbf00" points="288.7,269.8 294.6,266.3 290.8,275.4 284.9,278.4"/>
<polygon fill="#dfff20" points="389.7,279.8 395.6,282.6 391.8,281.5 385.9,278"/>
<polygon fill="#50ffaf" points="216.7,313.7 222.6,311.7 218.8,310.5 212.9,312.3"/>
<polygon fill="#9fff60" points="257.5,299.6 263.4,295.7 259.7,298.7 253.8,301.8"/>
<polygon fill="#ff6000" points="354.8,251.1 360.7,258.5 356.9,259.5 351,252.4"/>
<polygon fill="#70ff8f" points="242,307.9 247.9,304.9 244.1,305.6 238.2,308.1"/>
<polygon fill="#60ff9f" points="475.2,296.9 481.1,296.4 477.3,294.9 471.4,295.4"/>
<polygon fill="#80ff80" points="449.9,293.3 455.8,294.1 452,293.2 446.1,292.7"/>
<polygon fill="#9fff60" points="424.6,288.7 430.5,290.2 426.8,290.1 420.9,288.9"/>
<polygon fill="#50ffaf" points="500.4,297.8 506.3,296.5 502.5,294.8 496.6,296.1"/>
<polygon fill="#cfff30" points="399.4,283.7 405.3,285.6 401.5,285 395.6,282.6"/>
<polygon fill="#ff1000" points="329.5,238 335.4,243.3 331.7,250.7 325.8,246.4"/>
<polygon fill="#ff8f00" points="364.5,259.8 370.4,266.2 366.6,265.3 360.7,258.5"/>
<polygon fill="#60ff9f" points="226.4,312.7 232.3,310.5 228.5,309.7 222.6,311.7"/>
<polygon fill="#80ff80" points="459.6,295.1 465.5,295.5 461.7,294.3 455.8,294.1"/>
<polygon fill="#ffcf00" points="374.1,268.9 380,273.8 376.3,271.9 370.4,266.2"/>
<polygon fill="#60ff9f" points="484.8,298 490.7,297.2 487,295.5 481.1,296.4"/>
<polygon fill="#ff2000" points="314,241.9 319.9,243.3 316.1,253.5 310.2,252.7"/>
<polygon fill="#cfff30" points="267.2,291.3 273.1,286.5 269.3,291.9 263.4,295.7"/>
<polygon fill="#9fff60" points="434.3,290.1 440.2,291.6 436.4,291.3 430.5,290.2"/>
<polygon fill="#ffcf00" points="282.8,274.3 288.7,269.8 284.9,278.4 279,282.2"/>
<polygon fill="#ff6000" points="298.4,255.8 304.3,253.4 300.5,264.1 294.6,266.3"/>
<polygon fill="#bfff40" points="409.1,285.9 415,287.4 411.2,287.3 405.3,285.6"/>
<polygon fill="#8fff70" points="251.6,303.4 257.5,299.6 253.8,301.8 247.9,304.9"/>
<polygon fill="#50ffaf" points="210.8,315.5 216.7,313.7 212.9,312.3 207,314"/>
<polygon fill="#ff1000" points="339.2,238 345.1,245 341.3,249.5 335.4,243.3"/>
<polygon fill="#ffff00" points="383.8,276.6 389.7,279.8 385.9,278 380,273.8"/>
<polygon fill="#70ff8f" points="236.1,310.8 242,307.9 238.2,308.1 232.3,310.5"/>
<polygon fill="#70ff8f" points="469.3,296.8 475.2,296.9 471.4,295.4 465.5,295.5"/>
<polygon fill="#60ff9f" points="494.5,298.9 500.4,297.8 496.6,296.1 490.7,297.2"/>
<polygon fill="#8fff70" points="444,291.8 449.9,293.3 446.1,292.7 440.2,291.6"/>
<polygon fill="#bfff40" points="418.7,287.1 424.6,288.7 420.9,288.9 415,287.4"/>
<polygon fill="#ff3000" points="348.9,243.4 354.8,251.1 351,252.4 345.1,245"/>
<polygon fill="#dfff20" points="393.5,281.7 399.4,283.7 395.6,282.6 389.7,279.8"/>
<polygon fill="#60ff9f" points="220.5,314.9 226.4,312.7 222.6,311.7 216.7,313.7"/>
<polygon fill="#ef0000" points="323.6,234.1 329.5,238 325.8,246.4 319.9,243.3"/>
<polygon fill="#bfff40" points="261.3,296.2 267.2,291.3 263.4,295.7 257.5,299.6"/>
<polygon fill="#ffdf00" points="276.9,279.7 282.8,274.3 279,282.2 273.1,286.5"/>
<polygon fill="#ff6000" points="358.6,252.7 364.5,259.8 360.7,258.5 354.8,251.1"/>
<polygon fill="#60ff9f" points="478.9,298.4 484.8,298 481.1,296.4 475.2,296.9"/>
<polygon fill="#ff7000" points="292.5,259.9 298.4,255.8 294.6,266.3 288.7,269.8"/>
<polygon fill="#8fff70" points="453.7,293.9 459.6,295.1 455.8,294.1 449.9,293.3"/>
<polygon fill="#ff1000" points="308.1,242.4 314,241.9 310.2,252.7 304.3,253.4"/>
<polygon fill="#80ff80" points="245.7,307.1 251.6,303.4 247.9,304.9 242,307.9"/>
<polygon fill="#50ffaf" points="504.2,299.5 510.1,298.2 506.3,296.5 500.4,297.8"/>
<polygon fill="#afff50" points="428.4,288.2 434.3,290.1 430.5,290.2 424.6,288.7"/>
<polygon fill="#50ffaf" points="204.9,317.3 210.8,315.5 207,314 201.1,315.7"/>
<polygon fill="#cfff30" points="403.2,284.4 409.1,285.9 405.3,285.6 399.4,283.7"/>
<polygon fill="#ff9f00" points="368.2,263.4 374.1,268.9 370.4,266.2 364.5,259.8"/>
<polygon fill="#60ff9f" points="230.2,313.4 236.1,310.8 232.3,310.5 226.4,312.7"/>
<polygon fill="#df0000" points="333.3,232 339.2,238 335.4,243.3 329.5,238"/>
<polygon fill="#ffdf00" points="377.9,273 383.8,276.6 380,273.8 374.1,268.9"/>
<polygon fill="#60ff9f" points="488.6,299.6 494.5,298.9 490.7,297.2 484.8,298"/>
<polygon fill="#80ff80" points="463.4,296.1 469.3,296.8 465.5,295.5 459.6,295.1"/>
<polygon fill="#afff50" points="438.1,289.8 444,291.8 440.2,291.6 434.3,290.1"/>
<polygon fill="#cfff30" points="412.8,285.6 418.7,287.1 415,287.4 409.1,285.9"/>
<polygon fill="#60ff9f" points="214.6,316.9 220.5,314.9 216.7,313.7 210.8,315.5"/>
<polygon fill="#ffff00" points="271,285.6 276.9,279.7 273.1,286.5 267.2,291.3"/>
<polygon fill="#afff50" points="255.4,301 261.3,296.2 257.5,299.6 251.6,303.4"/>
<polygon fill="#ffff00" points="387.6,279.7 393.5,281.7 389.7,279.8 383.8,276.6"/>
<polygon fill="#ef0000" points="343,236.1 348.9,243.4 345.1,245 339.2,238"/>
<polygon fill="#ff8f00" points="286.6,265.3 292.5,259.9 288.7,269.8 282.8,274.3"/>
<polygon fill="#cf0000" points="317.7,232.1 323.6,234.1 319.9,243.3 314,241.9"/>
<polygon fill="#70ff8f" points="239.8,310.6 245.7,307.1 242,307.9 236.1,310.8"/>
<polygon fill="#ff2000" points="302.2,245 308.1,242.4 304.3,253.4 298.4,255.8"/>
<polygon fill="#70ff8f" points="473,298.2 478.9,298.4 475.2,296.9 469.3,296.8"/>
<polygon fill="#60ff9f" points="498.3,300.6 504.2,299.5 500.4,297.8 494.5,298.9"/>
<polygon fill="#50ffaf" points="199,319.1 204.9,317.3 201.1,315.7 195.2,317.4"/>
<polygon fill="#9fff60" points="447.8,292 453.7,293.9 449.9,293.3 444,291.8"/>
<polygon fill="#cfff30" points="422.5,286.3 428.4,288.2 424.6,288.7 418.7,287.1"/>
<polygon fill="#ff3000" points="352.7,245.5 358.6,252.7 354.8,251.1 348.9,243.4"/>
<polygon fill="#dfff20" points="397.3,283.3 403.2,284.4 399.4,283.7 393.5,281.7"/>
<polygon fill="#60ff9f" points="224.3,315.9 230.2,313.4 226.4,312.7 220.5,314.9"/>
<polygon fill="#ff7000" points="362.3,257.4 368.2,263.4 364.5,259.8 358.6,252.7"/>
<polygon fill="#60ff9f" points="482.7,300 488.6,299.6 484.8,298 478.9,298.4"/>
<polygon fill="#50ffaf" points="508,301.3 513.9,300 510.1,298.2 504.2,299.5"/>
<polygon fill="#8fff70" points="457.5,294.6 463.4,296.1 459.6,295.1 453.7,293.9"/>
<polygon fill="#af0000" points="327.4,227.5 333.3,232 329.5,238 323.6,234.1"/>
<polygon fill="#dfff20" points="265.1,291.7 271,285.6 267.2,291.3 261.3,296.2"/>
<polygon fill="#ffbf00" points="372,269 377.9,273 374.1,268.9 368.2,263.4"/>
<polygon fill="#50ffaf" points="208.7,318.8 214.6,316.9 210.8,315.5 204.9,317.3"/>
<polygon fill="#8fff70" points="249.5,305.6 255.4,301 251.6,303.4 245.7,307.1"/>
<polygon fill="#bfff40" points="432.2,287.4 438.1,289.8 434.3,290.1 428.4,288.2"/>
<polygon fill="#dfff20" points="406.9,284.5 412.8,285.6 409.1,285.9 403.2,284.4"/>
<polygon fill="#ffaf00" points="280.7,271.8 286.6,265.3 282.8,274.3 276.9,279.7"/>
<polygon fill="#70ff8f" points="233.9,313.7 239.8,310.6 236.1,310.8 230.2,313.4"/>
<polygon fill="#ff3000" points="296.3,249.6 302.2,245 298.4,255.8 292.5,259.9"/>
<polygon fill="#ffef00" points="381.7,277.8 387.6,279.7 383.8,276.6 377.9,273"/>
<polygon fill="#cf0000" points="311.8,232.4 317.7,232.1 314,241.9 308.1,242.4"/>
<polygon fill="#60ff9f" points="492.4,301.3 498.3,300.6 494.5,298.9 488.6,299.6"/>
<polygon fill="#80ff80" points="467.1,297.2 473,298.2 469.3,296.8 463.4,296.1"/>
<polygon fill="#50ffaf" points="193.1,320.8 199,319.1 195.2,317.4 189.3,319.1"/>
<polygon fill="#bf0000" points="337.1,229.8 343,236.1 339.2,238 333.3,232"/>
<polygon fill="#bfff40" points="441.9,289.5 447.8,292 444,291.8 438.1,289.8"/>
<polygon fill="#60ff9f" points="218.4,318.1 224.3,315.9 220.5,314.9 214.6,316.9"/>
<polygon fill="#dfff20" points="416.6,284.7 422.5,286.3 418.7,287.1 412.8,285.6"/>
<polygon fill="#efff10" points="391.4,282.7 397.3,283.3 393.5,281.7 387.6,279.7"/>
<polygon fill="#ef0000" points="346.8,238.5 352.7,245.5 348.9,243.4 343,236.1"/>
<polygon fill="#cfff30" points="259.2,297.7 265.1,291.7 261.3,296.2 255.4,301"/>
<polygon fill="#70ff8f" points="476.8,299.7 482.7,300 478.9,298.4 473,298.2"/>
<polygon fill="#60ff9f" points="502.1,302.4 508,301.3 504.2,299.5 498.3,300.6"/>
<polygon fill="#80ff80" points="243.6,309.8 249.5,305.6 245.7,307.1 239.8,310.6"/>
<polygon fill="#ffcf00" points="274.8,279 280.7,271.8 276.9,279.7 271,285.6"/>
<polygon fill="#50ffaf" points="202.8,320.6 208.7,318.8 204.9,317.3 199,319.1"/>
<polygon fill="#9fff60" points="451.6,292.3 457.5,294.6 453.7,293.9 447.8,292"/>
<polygon fill="#ff4000" points="356.4,251.3 362.3,257.4 358.6,252.7 352.7,245.5"/>
<polygon fill="#9f0000" points="321.5,225.1 327.4,227.5 323.6,234.1 317.7,232.1"/>
<polygon fill="#ff5000" points="290.4,255.9 296.3,249.6 292.5,259.9 286.6,265.3"/>
<polygon fill="#dfff20" points="426.3,285.1 432.2,287.4 428.4,288.2 422.5,286.3"/>
<polygon fill="#efff10" points="401,284.2 406.9,284.5 403.2,284.4 397.3,283.3"/>
<polygon fill="#60ff9f" points="228,316.6 233.9,313.7 230.2,313.4 224.3,315.9"/>
<polygon fill="#ff8f00" points="366.1,264.8 372,269 368.2,263.4 362.3,257.4"/>
<polygon fill="#cf0000" points="305.9,235.2 311.8,232.4 308.1,242.4 302.2,245"/>
<polygon fill="#50ffaf" points="187.2,322.4 193.1,320.8 189.3,319.1 183.4,320.7"/>
<polygon fill="#ffdf00" points="375.8,275.8 381.7,277.8 377.9,273 372,269"/>
<polygon fill="#60ff9f" points="486.5,301.6 492.4,301.3 488.6,299.6 482.7,300"/>
<polygon fill="#50ffaf" points="511.7,303 517.6,301.7 513.9,300 508,301.3"/>
<polygon fill="#8fff70" points="461.2,295.5 467.1,297.2 463.4,296.1 457.5,294.6"/>
<polygon fill="#60ff9f" points="212.5,320.2 218.4,318.1 214.6,316.9 208.7,318.8"/>
<polygon fill="#cfff30" points="436,286.6 441.9,289.5 438.1,289.8 432.2,287.4"/>
<polygon fill="#afff50" points="253.3,303.4 259.2,297.7 255.4,301 249.5,305.6"/>
<polygon fill="#efff10" points="410.7,283.8 416.6,284.7 412.8,285.6 406.9,284.5"/>
<polygon fill="#9f0000" points="331.2,225 337.1,229.8 333.3,232 327.4,227.5"/>
<polygon fill="#ffef00" points="268.9,286.4 274.8,279 271,285.6 265.1,291.7"/>
<polygon fill="#ffff00" points="385.5,282.5 391.4,282.7 387.6,279.7 381.7,277.8"/>
<polygon fill="#80ff80" points="237.7,313.6 243.6,309.8 239.8,310.6 233.9,313.7"/>
<polygon fill="#60ff9f" points="496.2,303.1 502.1,302.4 498.3,300.6 492.4,301.3"/>
<polygon fill="#50ffaf" points="196.9,322.4 202.8,320.6 199,319.1 193.1,320.8"/>
<polygon fill="#80ff80" points="470.9,298.6 476.8,299.7 473,298.2 467.1,297.2"/>
<polygon fill="#ff7000" points="284.5,263.6 290.4,255.9 286.6,265.3 280.7,271.8"/>
<polygon fill="#cf0000" points="340.9,232.4 346.8,238.5 343,236.1 337.1,229.8"/>
<polygon fill="#bfff40" points="445.7,289.4 451.6,292.3 447.8,292 441.9,289.5"/>
<polygon fill="#60ff9f" points="222.1,319.2 228,316.6 224.3,315.9 218.4,318.1"/>
<polygon fill="#8f0000" points="315.6,225.2 321.5,225.1 317.7,232.1 311.8,232.4"/>
<polygon fill="#df0000" points="300,240.3 305.9,235.2 302.2,245 296.3,249.6"/>
<polygon fill="#efff10" points="395.1,284.8 401,284.2 397.3,283.3 391.4,282.7"/>
<polygon fill="#efff10" points="420.4,283.3 426.3,285.1 422.5,286.3 416.6,284.7"/>
<polygon fill="#ff1000" points="350.5,245.3 356.4,251.3 352.7,245.5 346.8,238.5"/>
<polygon fill="#50ffaf" points="181.3,324.1 187.2,322.4 183.4,320.7 177.5,322.3"/>
<polygon fill="#ff7000" points="360.2,260.4 366.1,264.8 362.3,257.4 356.4,251.3"/>
<polygon fill="#70ff8f" points="480.6,301.3 486.5,301.6 482.7,300 476.8,299.7"/>
<polygon fill="#60ff9f" points="505.8,304.1 511.7,303 508,301.3 502.1,302.4"/>
<polygon fill="#50ffaf" points="206.6,322.2 212.5,320.2 208.7,318.8 202.8,320.6"/>
<polygon fill="#ffbf00" points="369.9,273.8 375.8,275.8 372,269 366.1,264.8"/>
<polygon fill="#efff10" points="263,293.8 268.9,286.4 265.1,291.7 259.2,297.7"/>
<polygon fill="#9fff60" points="247.4,308.6 253.3,303.4 249.5,305.6 243.6,309.8"/>
<polygon fill="#afff50" points="455.3,292.9 461.2,295.5 457.5,294.6 451.6,292.3"/>
<polygon fill="#efff10" points="404.8,284.1 410.7,283.8 406.9,284.5 401,284.2"/>
<polygon fill="#ff9f00" points="278.6,272.2 284.5,263.6 280.7,271.8 274.8,279"/>
<polygon fill="#70ff8f" points="231.8,317 237.7,313.6 233.9,313.7 228,316.6"/>
<polygon fill="#efff10" points="430.1,283.9 436,286.6 432.2,287.4 426.3,285.1"/>
<polygon fill="#ffff00" points="379.6,282.8 385.5,282.5 381.7,277.8 375.8,275.8"/>
<polygon fill="#800000" points="325.3,222.4 331.2,225 327.4,227.5 321.5,225.1"/>
<polygon fill="#50ffaf" points="191,324.1 196.9,322.4 193.1,320.8 187.2,322.4"/>
<polygon fill="#60ff9f" points="490.3,303.4 496.2,303.1 492.4,301.3 486.5,301.6"/>
<polygon fill="#50ffaf" points="515.5,304.8 521.4,303.5 517.6,301.7 511.7,303"/>
<polygon fill="#9fff60" points="465,296.7 470.9,298.6 467.1,297.2 461.2,295.5"/>
<polygon fill="#ff1000" points="294.1,247.5 300,240.3 296.3,249.6 290.4,255.9"/>
<polygon fill="#60ff9f" points="216.2,321.5 222.1,319.2 218.4,318.1 212.5,320.2"/>
<polygon fill="#9f0000" points="309.7,228.1 315.6,225.2 311.8,232.4 305.9,235.2"/>
<polygon fill="#efff10" points="389.2,286.5 395.1,284.8 391.4,282.7 385.5,282.5"/>
<polygon fill="#dfff20" points="439.8,286 445.7,289.4 441.9,289.5 436,286.6"/>
<polygon fill="#9f0000" points="335,227.7 340.9,232.4 337.1,229.8 331.2,225"/>
<polygon fill="#ffff00" points="414.5,282.5 420.4,283.3 416.6,284.7 410.7,283.8"/>
<polygon fill="#50ffaf" points="175.4,325.7 181.3,324.1 177.5,322.3 171.6,324"/>
<polygon fill="#cfff30" points="257.1,300.7 263,293.8 259.2,297.7 253.3,303.4"/>
<polygon fill="#80ff80" points="241.5,313.2 247.4,308.6 243.6,309.8 237.7,313.6"/>
<polygon fill="#60ff9f" points="499.9,304.9 505.8,304.1 502.1,302.4 496.2,303.1"/>
<polygon fill="#50ffaf" points="200.7,324 206.6,322.2 202.8,320.6 196.9,322.4"/>
<polygon fill="#80ff80" points="474.7,300.2 480.6,301.3 476.8,299.7 470.9,298.6"/>
<polygon fill="#ef0000" points="344.6,240 350.5,245.3 346.8,238.5 340.9,232.4"/>
<polygon fill="#ffbf00" points="272.7,281.1 278.6,272.2 274.8,279 268.9,286.4"/>
<polygon fill="#ff5000" points="354.3,256 360.2,260.4 356.4,251.3 350.5,245.3"/>
<polygon fill="#ffaf00" points="364,271.6 369.9,273.8 366.1,264.8 360.2,260.4"/>
<polygon fill="#60ff9f" points="225.9,320 231.8,317 228,316.6 222.1,319.2"/>
<polygon fill="#cfff30" points="449.4,289.6 455.3,292.9 451.6,292.3 445.7,289.4"/>
<polygon fill="#efff10" points="398.9,285.9 404.8,284.1 401,284.2 395.1,284.8"/>
<polygon fill="#ff3000" points="288.2,256.3 294.1,247.5 290.4,255.9 284.5,263.6"/>
<polygon fill="#ffef00" points="373.7,283.1 379.6,282.8 375.8,275.8 369.9,273.8"/>
<polygon fill="#ffff00" points="424.2,281.7 430.1,283.9 426.3,285.1 420.4,283.3"/>
<polygon fill="#50ffaf" points="185.1,325.8 191,324.1 187.2,322.4 181.3,324.1"/>
<polygon fill="#800000" points="319.4,222.4 325.3,222.4 321.5,225.1 315.6,225.2"/>
<polygon fill="#70ff8f" points="484.4,303.1 490.3,303.4 486.5,301.6 480.6,301.3"/>
<polygon fill="#60ff9f" points="509.6,306 515.5,304.8 511.7,303 505.8,304.1"/>
<polygon fill="#af0000" points="303.8,233.6 309.7,228.1 305.9,235.2 300,240.3"/>
<polygon fill="#60ff9f" points="210.3,323.6 216.2,321.5 212.5,320.2 206.6,322.2"/>
<polygon fill="#afff50" points="459.1,293.9 465,296.7 461.2,295.5 455.3,292.9"/>
<polygon fill="#afff50" points="251.2,307 257.1,300.7 253.3,303.4 247.4,308.6"/>
<polygon fill="#efff10" points="383.3,288.8 389.2,286.5 385.5,282.5 379.6,282.8"/>
<polygon fill="#ffef00" points="266.8,289.8 272.7,281.1 268.9,286.4 263,293.8"/>
<polygon fill="#50ffaf" points="169.5,327.3 175.4,325.7 171.6,324 165.7,325.6"/>
<polygon fill="#70ff8f" points="235.6,317.2 241.5,313.2 237.7,313.6 231.8,317"/>
<polygon fill="#ffff00" points="408.6,283.2 414.5,282.5 410.7,283.8 404.8,284.1"/>
<polygon fill="#ffff00" points="433.9,282.8 439.8,286 436,286.6 430.1,283.9"/>
<polygon fill="#800000" points="329.1,225.1 335,227.7 331.2,225 325.3,222.4"/>
<polygon fill="#50ffaf" points="194.8,325.8 200.7,324 196.9,322.4 191,324.1"/>
<polygon fill="#60ff9f" points="494,305.3 499.9,304.9 496.2,303.1 490.3,303.4"/>
<polygon fill="#50ffaf" points="519.3,306.6 525.2,305.3 521.4,303.5 515.5,304.8"/>
<polygon fill="#ff7000" points="282.3,266.1 288.2,256.3 284.5,263.6 278.6,272.2"/>
<polygon fill="#9fff60" points="468.8,298.2 474.7,300.2 470.9,298.6 465,296.7"/>
<polygon fill="#60ff9f" points="220,322.6 225.9,320 222.1,319.2 216.2,321.5"/>
<polygon fill="#cf0000" points="338.7,235.8 344.6,240 340.9,232.4 335,227.7"/>
<polygon fill="#efff10" points="393,289 398.9,285.9 395.1,284.8 389.2,286.5"/>
<polygon fill="#ff3000" points="348.4,252 354.3,256 350.5,245.3 344.6,240"/>
<polygon fill="#ff8f00" points="358.1,269.2 364,271.6 360.2,260.4 354.3,256"/>
<polygon fill="#efff10" points="443.5,285.9 449.4,289.6 445.7,289.4 439.8,286"/>
<polygon fill="#df0000" points="297.9,241.4 303.8,233.6 300,240.3 294.1,247.5"/>
<polygon fill="#50ffaf" points="179.2,327.4 185.1,325.8 181.3,324.1 175.4,325.7"/>
<polygon fill="#800000" points="313.5,225.2 319.4,222.4 315.6,225.2 309.7,228.1"/>
<polygon fill="#ffef00" points="367.8,283.4 373.7,283.1 369.9,273.8 364,271.6"/>
<polygon fill="#ffef00" points="418.3,280.8 424.2,281.7 420.4,283.3 414.5,282.5"/>
<polygon fill="#60ff9f" points="503.7,306.8 509.6,306 505.8,304.1 499.9,304.9"/>
<polygon fill="#50ffaf" points="204.4,325.6 210.3,323.6 206.6,322.2 200.7,324"/>
<polygon fill="#80ff80" points="478.5,302 484.4,303.1 480.6,301.3 474.7,300.2"/>
<polygon fill="#8fff70" points="245.3,312.5 251.2,307 247.4,308.6 241.5,313.2"/>
<polygon fill="#dfff20" points="260.9,298 266.8,289.8 263,293.8 257.1,300.7"/>
<polygon fill="#dfff20" points="377.4,291.6 383.3,288.8 379.6,282.8 373.7,283.1"/>
<polygon fill="#70ff8f" points="229.7,320.7 235.6,317.2 231.8,317 225.9,320"/>
<polygon fill="#cfff30" points="453.2,290.3 459.1,293.9 455.3,292.9 449.4,289.6"/>
<polygon fill="#ff9f00" points="276.4,276.4 282.3,266.1 278.6,272.2 272.7,281.1"/>
<polygon fill="#50ffaf" points="163.6,328.9 169.5,327.3 165.7,325.6 159.8,327.2"/>
<polygon fill="#ffff00" points="402.7,285.8 408.6,283.2 404.8,284.1 398.9,285.9"/>
<polygon fill="#50ffaf" points="188.9,327.5 194.8,325.8 191,324.1 185.1,325.8"/>
<polygon fill="#70ff8f" points="488.1,305.1 494,305.3 490.3,303.4 484.4,303.1"/>
<polygon fill="#ffdf00" points="428,280.3 433.9,282.8 430.1,283.9 424.2,281.7"/>
<polygon fill="#800000" points="323.2,225 329.1,225.1 325.3,222.4 319.4,222.4"/>
<polygon fill="#60ff9f" points="513.4,307.8 519.3,306.6 515.5,304.8 509.6,306"/>
<polygon fill="#60ff9f" points="214.1,325 220,322.6 216.2,321.5 210.3,323.6"/>
<polygon fill="#ff1000" points="292,251.1 297.9,241.4 294.1,247.5 288.2,256.3"/>
<polygon fill="#dfff20" points="387.1,293.3 393,289 389.2,286.5 383.3,288.8"/>
<polygon fill="#afff50" points="462.9,295.3 468.8,298.2 465,296.7 459.1,293.9"/>
<polygon fill="#9f0000" points="307.6,230.9 313.5,225.2 309.7,228.1 303.8,233.6"/>
<polygon fill="#af0000" points="332.8,233.5 338.7,235.8 335,227.7 329.1,225.1"/>
<polygon fill="#50ffaf" points="173.3,329 179.2,327.4 175.4,325.7 169.5,327.3"/>
<polygon fill="#bfff40" points="255,305.5 260.9,298 257.1,300.7 251.2,307"/>
<polygon fill="#80ff80" points="239.4,317.3 245.3,312.5 241.5,313.2 235.6,317.2"/>
<polygon fill="#ff1000" points="342.5,248.7 348.4,252 344.6,240 338.7,235.8"/>
<polygon fill="#ff8000" points="352.2,266.9 358.1,269.2 354.3,256 348.4,252"/>
<polygon fill="#ffdf00" points="412.4,281.8 418.3,280.8 414.5,282.5 408.6,283.2"/>
<polygon fill="#ffef00" points="437.6,282.2 443.5,285.9 439.8,286 433.9,282.8"/>
<polygon fill="#50ffaf" points="198.5,327.4 204.4,325.6 200.7,324 194.8,325.8"/>
<polygon fill="#60ff9f" points="497.8,307.2 503.7,306.8 499.9,304.9 494,305.3"/>
<polygon fill="#ffdf00" points="361.9,283.2 367.8,283.4 364,271.6 358.1,269.2"/>
<polygon fill="#ffcf00" points="270.5,286.4 276.4,276.4 272.7,281.1 266.8,289.8"/>
<polygon fill="#50ffaf" points="523.1,308.4 529,307.1 525.2,305.3 519.3,306.6"/>
<polygon fill="#9fff60" points="472.6,300.1 478.5,302 474.7,300.2 468.8,298.2"/>
<polygon fill="#dfff20" points="371.5,294.2 377.4,291.6 373.7,283.1 367.8,283.4"/>
<polygon fill="#60ff9f" points="223.8,323.7 229.7,320.7 225.9,320 220,322.6"/>
<polygon fill="#efff10" points="396.8,290.1 402.7,285.8 398.9,285.9 393,289"/>
<polygon fill="#50ffaf" points="157.7,330.5 163.6,328.9 159.8,327.2 153.9,328.8"/>
<polygon fill="#ff4000" points="286.1,262 292,251.1 288.2,256.3 282.3,266.1"/>
<polygon fill="#50ffaf" points="183,329.1 188.9,327.5 185.1,325.8 179.2,327.4"/>
<polygon fill="#efff10" points="447.3,286.3 453.2,290.3 449.4,289.6 443.5,285.9"/>
<polygon fill="#800000" points="317.3,227.8 323.2,225 319.4,222.4 313.5,225.2"/>
<polygon fill="#60ff9f" points="507.5,308.7 513.4,307.8 509.6,306 503.7,306.8"/>
<polygon fill="#80ff80" points="482.2,304.1 488.1,305.1 484.4,303.1 478.5,302"/>
<polygon fill="#50ffaf" points="208.2,327.1 214.1,325 210.3,323.6 204.4,325.6"/>
<polygon fill="#bfff40" points="381.2,298.2 387.1,293.3 383.3,288.8 377.4,291.6"/>
<polygon fill="#ffcf00" points="422.1,279.2 428,280.3 424.2,281.7 418.3,280.8"/>
<polygon fill="#bf0000" points="301.7,239.1 307.6,230.9 303.8,233.6 297.9,241.4"/>
<polygon fill="#9fff60" points="249.1,311.9 255,305.5 251.2,307 245.3,312.5"/>
<polygon fill="#ffff00" points="264.6,295.9 270.5,286.4 266.8,289.8 260.9,298"/>
<polygon fill="#cfff30" points="457,291.7 462.9,295.3 459.1,293.9 453.2,290.3"/>
<polygon fill="#50ffaf" points="167.4,330.6 173.3,329 169.5,327.3 163.6,328.9"/>
<polygon fill="#70ff8f" points="233.5,321.3 239.4,317.3 235.6,317.2 229.7,320.7"/>
<polygon fill="#9f0000" points="326.9,233.4 332.8,233.5 329.1,225.1 323.2,225"/>
<polygon fill="#ffef00" points="406.5,284.9 412.4,281.8 408.6,283.2 402.7,285.8"/>
<polygon fill="#50ffaf" points="192.6,329.1 198.5,327.4 194.8,325.8 188.9,327.5"/>
<polygon fill="#70ff8f" points="491.9,307.1 497.8,307.2 494,305.3 488.1,305.1"/>
<polygon fill="#ff8000" points="280.2,273.3 286.1,262 282.3,266.1 276.4,276.4"/>
<polygon fill="#50ffaf" points="517.2,309.7 523.1,308.4 519.3,306.6 513.4,307.8"/>
<polygon fill="#ffcf00" points="356,282.7 361.9,283.2 358.1,269.2 352.2,266.9"/>
<polygon fill="#ff0000" points="336.6,246.8 342.5,248.7 338.7,235.8 332.8,233.5"/>
<polygon fill="#ff6000" points="346.3,264.8 352.2,266.9 348.4,252 342.5,248.7"/>
<polygon fill="#ffcf00" points="431.7,279.4 437.6,282.2 433.9,282.8 428,280.3"/>
<polygon fill="#60ff9f" points="217.9,326.3 223.8,323.7 220,322.6 214.1,325"/>
<polygon fill="#cfff30" points="390.9,296 396.8,290.1 393,289 387.1,293.3"/>
<polygon fill="#dfff20" points="365.6,296.2 371.5,294.2 367.8,283.4 361.9,283.2"/>
<polygon fill="#afff50" points="466.7,297.2 472.6,300.1 468.8,298.2 462.9,295.3"/>
<polygon fill="#50ffaf" points="151.8,332.1 157.7,330.5 153.9,328.8 148,330.4"/>
<polygon fill="#ef0000" points="295.8,249.4 301.7,239.1 297.9,241.4 292,251.1"/>
<polygon fill="#9f0000" points="311.4,233.4 317.3,227.8 313.5,225.2 307.6,230.9"/>
<polygon fill="#50ffaf" points="177.1,330.8 183,329.1 179.2,327.4 173.3,329"/>
<polygon fill="#afff50" points="375.3,302.9 381.2,298.2 377.4,291.6 371.5,294.2"/>
<polygon fill="#cfff30" points="258.7,304.4 264.6,295.9 260.9,298 255,305.5"/>
<polygon fill="#60ff9f" points="501.6,309.3 507.5,308.7 503.7,306.8 497.8,307.2"/>
<polygon fill="#50ffaf" points="202.3,329 208.2,327.1 204.4,325.6 198.5,327.4"/>
<polygon fill="#8fff70" points="243.2,317.4 249.1,311.9 245.3,312.5 239.4,317.3"/>
<polygon fill="#50ffaf" points="526.8,310.2 532.7,308.8 529,307.1 523.1,308.4"/>
<polygon fill="#ffef00" points="441.4,282.5 447.3,286.3 443.5,285.9 437.6,282.2"/>
<polygon fill="#ffcf00" points="416.2,280.2 422.1,279.2 418.3,280.8 412.4,281.8"/>
<polygon fill="#8fff70" points="476.3,302.3 482.2,304.1 478.5,302 472.6,300.1"/>
<polygon fill="#ffbf00" points="274.3,284.5 280.2,273.3 276.4,276.4 270.5,286.4"/>
<polygon fill="#60ff9f" points="227.6,324.7 233.5,321.3 229.7,320.7 223.8,323.7"/>
<polygon fill="#50ffaf" points="161.5,332.2 167.4,330.6 163.6,328.9 157.7,330.5"/>
<polygon fill="#ffff00" points="400.6,290.2 406.5,284.9 402.7,285.8 396.8,290.1"/>
<polygon fill="#af0000" points="321,235.9 326.9,233.4 323.2,225 317.3,227.8"/>
<polygon fill="#50ffaf" points="186.7,330.8 192.6,329.1 188.9,327.5 183,329.1"/>
<polygon fill="#ffff00" points="451.1,287.6 457,291.7 453.2,290.3 447.3,286.3"/>
<polygon fill="#afff50" points="385,302.6 390.9,296 387.1,293.3 381.2,298.2"/>
<polygon fill="#ff3000" points="289.9,260.9 295.8,249.4 292,251.1 286.1,262"/>
<polygon fill="#60ff9f" points="511.3,310.7 517.2,309.7 513.4,307.8 507.5,308.7"/>
<polygon fill="#80ff80" points="486,306.4 491.9,307.1 488.1,305.1 482.2,304.1"/>
<polygon fill="#60ff9f" points="212,328.5 217.9,326.3 214.1,325 208.2,327.1"/>
<polygon fill="#ef0000" points="330.7,246.8 336.6,246.8 332.8,233.5 326.9,233.4"/>
<polygon fill="#ffbf00" points="350.1,281.8 356,282.7 352.2,266.9 346.3,264.8"/>
<polygon fill="#ff5000" points="340.4,263.5 346.3,264.8 342.5,248.7 336.6,246.8"/>
<polygon fill="#dfff20" points="359.7,297.3 365.6,296.2 361.9,283.2 356,282.7"/>
<polygon fill="#bf0000" points="305.5,241.6 311.4,233.4 307.6,230.9 301.7,239.1"/>
<polygon fill="#ffbf00" points="425.8,278.2 431.7,279.4 428,280.3 422.1,279.2"/>
<polygon fill="#50ffaf" points="145.9,333.7 151.8,332.1 148,330.4 142.1,332"/>
<polygon fill="#afff50" points="252.8,311.7 258.7,304.4 255,305.5 249.1,311.9"/>
<polygon fill="#cfff30" points="460.8,293.7 466.7,297.2 462.9,295.3 457,291.7"/>
<polygon fill="#50ffaf" points="171.2,332.4 177.1,330.8 173.3,329 167.4,330.6"/>
<polygon fill="#ffef00" points="268.4,294.9 274.3,284.5 270.5,286.4 264.6,295.9"/>
<polygon fill="#9fff60" points="369.4,306.8 375.3,302.9 371.5,294.2 365.6,296.2"/>
<polygon fill="#80ff80" points="237.3,322 243.2,317.4 239.4,317.3 233.5,321.3"/>
<polygon fill="#50ffaf" points="196.4,330.8 202.3,329 198.5,327.4 192.6,329.1"/>
<polygon fill="#70ff8f" points="495.7,309.3 501.6,309.3 497.8,307.2 491.9,307.1"/>
<polygon fill="#50ffaf" points="520.9,311.5 526.8,310.2 523.1,308.4 517.2,309.7"/>
<polygon fill="#ffdf00" points="410.3,283.7 416.2,280.2 412.4,281.8 406.5,284.9"/>
<polygon fill="#ff7000" points="284,272.9 289.9,260.9 286.1,262 280.2,273.3"/>
<polygon fill="#60ff9f" points="221.7,327.6 227.6,324.7 223.8,323.7 217.9,326.3"/>
<polygon fill="#cfff30" points="394.7,297.2 400.6,290.2 396.8,290.1 390.9,296"/>
<polygon fill="#ffcf00" points="435.5,279.5 441.4,282.5 437.6,282.2 431.7,279.4"/>
<polygon fill="#afff50" points="470.4,299.6 476.3,302.3 472.6,300.1 466.7,297.2"/>
<polygon fill="#50ffaf" points="155.6,333.8 161.5,332.2 157.7,330.5 151.8,332.1"/>
<polygon fill="#bf0000" points="315.1,241.2 321,235.9 317.3,227.8 311.4,233.4"/>
<polygon fill="#8fff70" points="379.1,309 385,302.6 381.2,298.2 375.3,302.9"/>
<polygon fill="#ff0000" points="299.6,251.9 305.5,241.6 301.7,239.1 295.8,249.4"/>
<polygon fill="#50ffaf" points="180.8,332.5 186.7,330.8 183,329.1 177.1,330.8"/>
<polygon fill="#60ff9f" points="505.4,311.3 511.3,310.7 507.5,308.7 501.6,309.3"/>
<polygon fill="#50ffaf" points="206.1,330.6 212,328.5 208.2,327.1 202.3,329"/>
<polygon fill="#50ffaf" points="530.6,312.1 536.5,310.6 532.7,308.8 526.8,310.2"/>
<polygon fill="#8fff70" points="246.9,317.9 252.8,311.7 249.1,311.9 243.2,317.4"/>
<polygon fill="#dfff20" points="262.5,304.3 268.4,294.9 264.6,295.9 258.7,304.4"/>
<polygon fill="#ef0000" points="324.8,249 330.7,246.8 326.9,233.4 321,235.9"/>
<polygon fill="#ffdf00" points="445.2,283.6 451.1,287.6 447.3,286.3 441.4,282.5"/>
<polygon fill="#8fff70" points="480.1,304.8 486,306.4 482.2,304.1 476.3,302.3"/>
<polygon fill="#dfff20" points="353.8,297.6 359.7,297.3 356,282.7 350.1,281.8"/>
<polygon fill="#ffaf00" points="344.2,281.1 350.1,281.8 346.3,264.8 340.4,263.5"/>
<polygon fill="#50ffaf" points="140,335.3 145.9,333.7 142.1,332 136.2,333.6"/>
<polygon fill="#ff5000" points="334.5,263.4 340.4,263.5 336.6,246.8 330.7,246.8"/>
<polygon fill="#ffbf00" points="419.9,279.2 425.8,278.2 422.1,279.2 416.2,280.2"/>
<polygon fill="#70ff8f" points="231.4,325.8 237.3,322 233.5,321.3 227.6,324.7"/>
<polygon fill="#ffaf00" points="278.1,284.8 284,272.9 280.2,273.3 274.3,284.5"/>
<polygon fill="#50ffaf" points="165.3,334 171.2,332.4 167.4,330.6 161.5,332.2"/>
<polygon fill="#9fff60" points="363.5,309.4 369.4,306.8 365.6,296.2 359.7,297.3"/>
<polygon fill="#ffff00" points="404.4,289.6 410.3,283.7 406.5,284.9 400.6,290.2"/>
<polygon fill="#50ffaf" points="190.5,332.5 196.4,330.8 192.6,329.1 186.7,330.8"/>
<polygon fill="#efff10" points="454.9,289.6 460.8,293.7 457,291.7 451.1,287.6"/>
<polygon fill="#afff50" points="388.8,305.1 394.7,297.2 390.9,296 385,302.6"/>
<polygon fill="#60ff9f" points="515,312.6 520.9,311.5 517.2,309.7 511.3,310.7"/>
<polygon fill="#80ff80" points="489.8,308.8 495.7,309.3 491.9,307.1 486,306.4"/>
<polygon fill="#ff4000" points="293.7,263.6 299.6,251.9 295.8,249.4 289.9,260.9"/>
<polygon fill="#ef0000" points="309.2,249 315.1,241.2 311.4,233.4 305.5,241.6"/>
<polygon fill="#60ff9f" points="215.8,330 221.7,327.6 217.9,326.3 212,328.5"/>
<polygon fill="#80ff80" points="373.2,314.5 379.1,309 375.3,302.9 369.4,306.8"/>
<polygon fill="#50ffaf" points="149.7,335.4 155.6,333.8 151.8,332.1 145.9,333.7"/>
<polygon fill="#ffbf00" points="429.6,278.1 435.5,279.5 431.7,279.4 425.8,278.2"/>
<polygon fill="#cfff30" points="464.5,296.3 470.4,299.6 466.7,297.2 460.8,293.7"/>
<polygon fill="#afff50" points="256.6,312.3 262.5,304.3 258.7,304.4 252.8,311.7"/>
<polygon fill="#50ffaf" points="174.9,334.1 180.8,332.5 177.1,330.8 171.2,332.4"/>
<polygon fill="#80ff80" points="241,323 246.9,317.9 243.2,317.4 237.3,322"/>
<polygon fill="#ffef00" points="272.2,295.9 278.1,284.8 274.3,284.5 268.4,294.9"/>
<polygon fill="#50ffaf" points="200.2,332.4 206.1,330.6 202.3,329 196.4,330.8"/>
<polygon fill="#ff0000" points="318.9,253.7 324.8,249 321,235.9 315.1,241.2"/>
<polygon fill="#70ff8f" points="499.5,311.6 505.4,311.3 501.6,309.3 495.7,309.3"/>
<polygon fill="#50ffaf" points="524.7,313.4 530.6,312.1 526.8,310.2 520.9,311.5"/>
<polygon fill="#ffcf00" points="414,282.9 419.9,279.2 416.2,280.2 410.3,283.7"/>
<polygon fill="#ff8000" points="287.8,275.8 293.7,263.6 289.9,260.9 284,272.9"/>
<polygon fill="#ff5000" points="328.6,265.2 334.5,263.4 330.7,246.8 324.8,249"/>
<polygon fill="#60ff9f" points="225.5,328.9 231.4,325.8 227.6,324.7 221.7,327.6"/>
<polygon fill="#afff50" points="474.2,302.4 480.1,304.8 476.3,302.3 470.4,299.6"/>
<polygon fill="#efff10" points="347.9,297.4 353.8,297.6 350.1,281.8 344.2,281.1"/>
<polygon fill="#ffaf00" points="338.3,281 344.2,281.1 340.4,263.5 334.5,263.4"/>
<polygon fill="#ffcf00" points="439.3,280.6 445.2,283.6 441.4,282.5 435.5,279.5"/>
<polygon fill="#dfff20" points="398.5,297.5 404.4,289.6 400.6,290.2 394.7,297.2"/>
<polygon fill="#8fff70" points="382.9,312.9 388.8,305.1 385,302.6 379.1,309"/>
<polygon fill="#50ffaf" points="159.4,335.6 165.3,334 161.5,332.2 155.6,333.8"/>
<polygon fill="#ff2000" points="303.3,259 309.2,249 305.5,241.6 299.6,251.9"/>
<polygon fill="#9fff60" points="357.6,310.6 363.5,309.4 359.7,297.3 353.8,297.6"/>
<polygon fill="#50ffaf" points="184.6,334.2 190.5,332.5 186.7,330.8 180.8,332.5"/>
<polygon fill="#60ff9f" points="509.1,313.4 515,312.6 511.3,310.7 505.4,311.3"/>
<polygon fill="#50ffaf" points="209.9,332.2 215.8,330 212,328.5 206.1,330.6"/>
<polygon fill="#50ffaf" points="534.4,313.9 540.3,312.4 536.5,310.6 530.6,312.1"/>
<polygon fill="#70ff8f" points="367.3,318.1 373.2,314.5 369.4,306.8 363.5,309.4"/>
<polygon fill="#8fff70" points="483.9,307.5 489.8,308.8 486,306.4 480.1,304.8"/>
<polygon fill="#ffdf00" points="449,285.8 454.9,289.6 451.1,287.6 445.2,283.6"/>
<polygon fill="#8fff70" points="250.7,319 256.6,312.3 252.8,311.7 246.9,317.9"/>
<polygon fill="#dfff20" points="266.3,305.7 272.2,295.9 268.4,294.9 262.5,304.3"/>
<polygon fill="#50ffaf" points="143.8,337 149.7,335.4 145.9,333.7 140,335.3"/>
<polygon fill="#ffaf00" points="423.7,279.1 429.6,278.1 425.8,278.2 419.9,279.2"/>
<polygon fill="#70ff8f" points="235.1,327.1 241,323 237.3,322 231.4,325.8"/>
<polygon fill="#50ffaf" points="169,335.7 174.9,334.1 171.2,332.4 165.3,334"/>
<polygon fill="#ff2000" points="313,260.8 318.9,253.7 315.1,241.2 309.2,249"/>
<polygon fill="#ffbf00" points="281.9,287.9 287.8,275.8 284,272.9 278.1,284.8"/>
<polygon fill="#50ffaf" points="194.3,334.2 200.2,332.4 196.4,330.8 190.5,332.5"/>
<polygon fill="#efff10" points="458.6,292.5 464.5,296.3 460.8,293.7 454.9,289.6"/>
<polygon fill="#ff6000" points="297.4,270.3 303.3,259 299.6,251.9 293.7,263.6"/>
<polygon fill="#afff50" points="392.6,306.4 398.5,297.5 394.7,297.2 388.8,305.1"/>
<polygon fill="#ffef00" points="408.1,289.2 414,282.9 410.3,283.7 404.4,289.6"/>
<polygon fill="#60ff9f" points="518.8,314.6 524.7,313.4 520.9,311.5 515,312.6"/>
<polygon fill="#70ff8f" points="493.6,311.3 499.5,311.6 495.7,309.3 489.8,308.8"/>
<polygon fill="#70ff8f" points="377,319.3 382.9,312.9 379.1,309 373.2,314.5"/>
<polygon fill="#ff6000" points="322.7,269.1 328.6,265.2 324.8,249 318.9,253.7"/>
<polygon fill="#60ff9f" points="219.6,331.5 225.5,328.9 221.7,327.6 215.8,330"/>
<polygon fill="#ffaf00" points="332.4,282.3 338.3,281 334.5,263.4 328.6,265.2"/>
<polygon fill="#ffff00" points="342,297.3 347.9,297.4 344.2,281.1 338.3,281"/>
<polygon fill="#50ffaf" points="153.5,337.2 159.4,335.6 155.6,333.8 149.7,335.4"/>
<polygon fill="#bfff40" points="468.3,299.4 474.2,302.4 470.4,299.6 464.5,296.3"/>
<polygon fill="#afff50" points="351.7,310.7 357.6,310.6 353.8,297.6 347.9,297.4"/>
<polygon fill="#ffaf00" points="433.4,279.2 439.3,280.6 435.5,279.5 429.6,278.1"/>
<polygon fill="#50ffaf" points="178.7,335.8 184.6,334.2 180.8,332.5 174.9,334.1"/>
<polygon fill="#afff50" points="260.4,314.2 266.3,305.7 262.5,304.3 256.6,312.3"/>
<polygon fill="#ffef00" points="276,299.2 281.9,287.9 278.1,284.8 272.2,295.9"/>
<polygon fill="#80ff80" points="244.8,324.4 250.7,319 246.9,317.9 241,323"/>
<polygon fill="#50ffaf" points="204,334.1 209.9,332.2 206.1,330.6 200.2,332.4"/>
<polygon fill="#60ff9f" points="503.2,313.9 509.1,313.4 505.4,311.3 499.5,311.6"/>
<polygon fill="#70ff8f" points="361.4,319.9 367.3,318.1 363.5,309.4 357.6,310.6"/>
<polygon fill="#50ffaf" points="528.5,315.3 534.4,313.9 530.6,312.1 524.7,313.4"/>
<polygon fill="#ff5000" points="307.1,269.9 313,260.8 309.2,249 303.3,259"/>
<polygon fill="#ff8f00" points="291.5,282.2 297.4,270.3 293.7,263.6 287.8,275.8"/>
<polygon fill="#9fff60" points="478,305.6 483.9,307.5 480.1,304.8 474.2,302.4"/>
<polygon fill="#60ff9f" points="229.2,330.4 235.1,327.1 231.4,325.8 225.5,328.9"/>
<polygon fill="#ffbf00" points="417.8,282.9 423.7,279.1 419.9,279.2 414,282.9"/>
<polygon fill="#ffcf00" points="443.1,282.8 449,285.8 445.2,283.6 439.3,280.6"/>
<polygon fill="#8fff70" points="386.7,315 392.6,306.4 388.8,305.1 382.9,312.9"/>
<polygon fill="#50ffaf" points="163.1,337.3 169,335.7 165.3,334 159.4,335.6"/>
<polygon fill="#efff10" points="402.2,297.7 408.1,289.2 404.4,289.6 398.5,297.5"/>
<polygon fill="#50ffaf" points="188.4,335.9 194.3,334.2 190.5,332.5 184.6,334.2"/>
<polygon fill="#60ff9f" points="371.1,323.8 377,319.3 373.2,314.5 367.3,318.1"/>
<polygon fill="#ff7000" points="316.8,275.3 322.7,269.1 318.9,253.7 313,260.8"/>
<polygon fill="#60ff9f" points="512.9,315.6 518.8,314.6 515,312.6 509.1,313.4"/>
<polygon fill="#60ff9f" points="213.7,333.8 219.6,331.5 215.8,330 209.9,332.2"/>
<polygon fill="#80ff80" points="487.7,310.4 493.6,311.3 489.8,308.8 483.9,307.5"/>
<polygon fill="#50ffaf" points="538.2,315.7 544.1,314.2 540.3,312.4 534.4,313.9"/>
<polygon fill="#ffef00" points="452.7,288.9 458.6,292.5 454.9,289.6 449,285.8"/>
<polygon fill="#cfff30" points="270.1,309.1 276,299.2 272.2,295.9 266.3,305.7"/>
<polygon fill="#ffaf00" points="326.5,285.4 332.4,282.3 328.6,265.2 322.7,269.1"/>
<polygon fill="#8fff70" points="254.5,321.1 260.4,314.2 256.6,312.3 250.7,319"/>
<polygon fill="#50ffaf" points="147.6,338.8 153.5,337.2 149.7,335.4 143.8,337"/>
<polygon fill="#ffcf00" points="285.6,294 291.5,282.2 287.8,275.8 281.9,287.9"/>
<polygon fill="#ffff00" points="336.1,298 342,297.3 338.3,281 332.4,282.3"/>
<polygon fill="#ff8f00" points="301.2,280.5 307.1,269.9 303.3,259 297.4,270.3"/>
<polygon fill="#50ffaf" points="172.8,337.5 178.7,335.8 174.9,334.1 169,335.7"/>
<polygon fill="#afff50" points="345.8,310.3 351.7,310.7 347.9,297.4 342,297.3"/>
<polygon fill="#70ff8f" points="238.9,328.8 244.8,324.4 241,323 235.1,327.1"/>
<polygon fill="#ffaf00" points="427.5,280.2 433.4,279.2 429.6,278.1 423.7,279.1"/>
<polygon fill="#dfff20" points="462.4,296.1 468.3,299.4 464.5,296.3 458.6,292.5"/>
<polygon fill="#50ffaf" points="198.1,335.9 204,334.1 200.2,332.4 194.3,334.2"/>
<polygon fill="#80ff80" points="355.5,320.1 361.4,319.9 357.6,310.6 351.7,310.7"/>
<polygon fill="#70ff8f" points="497.3,313.9 503.2,313.9 499.5,311.6 493.6,311.3"/>
<polygon fill="#50ffaf" points="522.6,316.5 528.5,315.3 524.7,313.4 518.8,314.6"/>
<polygon fill="#60ff9f" points="380.8,322.2 386.7,315 382.9,312.9 377,319.3"/>
<polygon fill="#bfff40" points="396.3,307.2 402.2,297.7 398.5,297.5 392.6,306.4"/>
<polygon fill="#ffdf00" points="411.9,289.5 417.8,282.9 414,282.9 408.1,289.2"/>
<polygon fill="#60ff9f" points="223.3,333.2 229.2,330.4 225.5,328.9 219.6,331.5"/>
<polygon fill="#ff9f00" points="310.9,283.4 316.8,275.3 313,260.8 307.1,269.9"/>
<polygon fill="#50ffaf" points="157.2,338.9 163.1,337.3 159.4,335.6 153.5,337.2"/>
<polygon fill="#bfff40" points="472.1,303 478,305.6 474.2,302.4 468.3,299.4"/>
<polygon fill="#ffbf00" points="437.2,281.4 443.1,282.8 439.3,280.6 433.4,279.2"/>
<polygon fill="#60ff9f" points="365.2,325.8 371.1,323.8 367.3,318.1 361.4,319.9"/>
<polygon fill="#afff50" points="264.2,317.6 270.1,309.1 266.3,305.7 260.4,314.2"/>
<polygon fill="#50ffaf" points="182.5,337.6 188.4,335.9 184.6,334.2 178.7,335.8"/>
<polygon fill="#efff10" points="279.7,305 285.6,294 281.9,287.9 276,299.2"/>
<polygon fill="#ffbf00" points="295.3,291.7 301.2,280.5 297.4,270.3 291.5,282.2"/>
<polygon fill="#80ff80" points="248.6,326.6 254.5,321.1 250.7,319 244.8,324.4"/>
<polygon fill="#60ff9f" points="507,316.2 512.9,315.6 509.1,313.4 503.2,313.9"/>
<polygon fill="#50ffaf" points="207.8,335.8 213.7,333.8 209.9,332.2 204,334.1"/>
<polygon fill="#ffcf00" points="320.6,290.5 326.5,285.4 322.7,269.1 316.8,275.3"/>
<polygon fill="#50ffaf" points="532.3,317.1 538.2,315.7 534.4,313.9 528.5,315.3"/>
<polygon fill="#8fff70" points="481.8,309 487.7,310.4 483.9,307.5 478,305.6"/>
<polygon fill="#ffff00" points="330.2,300.3 336.1,298 332.4,282.3 326.5,285.4"/>
<polygon fill="#ffcf00" points="446.8,286.1 452.7,288.9 449,285.8 443.1,282.8"/>
<polygon fill="#60ff9f" points="233,332.2 238.9,328.8 235.1,327.1 229.2,330.4"/>
<polygon fill="#8fff70" points="390.4,316.4 396.3,307.2 392.6,306.4 386.7,315"/>
<polygon fill="#ffbf00" points="421.6,284.1 427.5,280.2 423.7,279.1 417.8,282.9"/>
<polygon fill="#50ffaf" points="166.9,339.1 172.8,337.5 169,335.7 163.1,337.3"/>
<polygon fill="#bfff40" points="339.9,310.5 345.8,310.3 342,297.3 336.1,298"/>
<polygon fill="#50ffaf" points="374.9,327 380.8,322.2 377,319.3 371.1,323.8"/>
<polygon fill="#efff10" points="406,298.3 411.9,289.5 408.1,289.2 402.2,297.7"/>
<polygon fill="#50ffaf" points="192.2,337.6 198.1,335.9 194.3,334.2 188.4,335.9"/>
<polygon fill="#ffcf00" points="305,293 310.9,283.4 307.1,269.9 301.2,280.5"/>
<polygon fill="#60ff9f" points="516.7,317.6 522.6,316.5 518.8,314.6 512.9,315.6"/>
<polygon fill="#8fff70" points="349.6,319.4 355.5,320.1 351.7,310.7 345.8,310.3"/>
<polygon fill="#80ff80" points="491.4,313.5 497.3,313.9 493.6,311.3 487.7,310.4"/>
<polygon fill="#ffff00" points="289.4,302.8 295.3,291.7 291.5,282.2 285.6,294"/>
<polygon fill="#ffff00" points="456.5,292.8 462.4,296.1 458.6,292.5 452.7,288.9"/>
<polygon fill="#bfff40" points="273.8,314.6 279.7,305 276,299.2 270.1,309.1"/>
<polygon fill="#60ff9f" points="217.4,335.5 223.3,333.2 219.6,331.5 213.7,333.8"/>
<polygon fill="#50ffaf" points="541.9,317.5 547.8,315.9 544.1,314.2 538.2,315.7"/>
<polygon fill="#8fff70" points="258.3,324.4 264.2,317.6 260.4,314.2 254.5,321.1"/>
<polygon fill="#50ffaf" points="151.3,340.5 157.2,338.9 153.5,337.2 147.6,338.8"/>
<polygon fill="#ffef00" points="314.7,297.6 320.6,290.5 316.8,275.3 310.9,283.4"/>
<polygon fill="#60ff9f" points="359.3,325.8 365.2,325.8 361.4,319.9 355.5,320.1"/>
<polygon fill="#50ffaf" points="176.6,339.2 182.5,337.6 178.7,335.8 172.8,337.5"/>
<polygon fill="#70ff8f" points="242.7,331 248.6,326.6 244.8,324.4 238.9,328.8"/>
<polygon fill="#ffaf00" points="431.3,282.5 437.2,281.4 433.4,279.2 427.5,280.2"/>
<polygon fill="#cfff30" points="466.2,300.2 472.1,303 468.3,299.4 462.4,296.1"/>
<polygon fill="#50ffaf" points="201.9,337.6 207.8,335.8 204,334.1 198.1,335.9"/>
<polygon fill="#70ff8f" points="501.1,316.6 507,316.2 503.2,313.9 497.3,313.9"/>
<polygon fill="#60ff9f" points="384.5,323.9 390.4,316.4 386.7,315 380.8,322.2"/>
<polygon fill="#50ffaf" points="526.4,318.5 532.3,317.1 528.5,315.3 522.6,316.5"/>
<polygon fill="#bfff40" points="400.1,308.1 406,298.3 402.2,297.7 396.3,307.2"/>
<polygon fill="#efff10" points="324.3,304.5 330.2,300.3 326.5,285.4 320.6,290.5"/>
<polygon fill="#ffff00" points="299.1,303.2 305,293 301.2,280.5 295.3,291.7"/>
<polygon fill="#ffdf00" points="415.7,290.7 421.6,284.1 417.8,282.9 411.9,289.5"/>
<polygon fill="#60ff9f" points="227.1,335 233,332.2 229.2,330.4 223.3,333.2"/>
<polygon fill="#afff50" points="475.9,307 481.8,309 478,305.6 472.1,303"/>
<polygon fill="#cfff30" points="283.5,313.1 289.4,302.8 285.6,294 279.7,305"/>
<polygon fill="#50ffaf" points="161,340.7 166.9,339.1 163.1,337.3 157.2,338.9"/>
<polygon fill="#50ffaf" points="369,329 374.9,327 371.1,323.8 365.2,325.8"/>
<polygon fill="#8fff70" points="267.9,322.6 273.8,314.6 270.1,309.1 264.2,317.6"/>
<polygon fill="#ffbf00" points="440.9,284.9 446.8,286.1 443.1,282.8 437.2,281.4"/>
<polygon fill="#bfff40" points="334,312.1 339.9,310.5 336.1,298 330.2,300.3"/>
<polygon fill="#50ffaf" points="186.3,339.3 192.2,337.6 188.4,335.9 182.5,337.6"/>
<polygon fill="#70ff8f" points="252.4,329.8 258.3,324.4 254.5,321.1 248.6,326.6"/>
<polygon fill="#60ff9f" points="510.8,318.5 516.7,317.6 512.9,315.6 507,316.2"/>
<polygon fill="#50ffaf" points="211.5,337.6 217.4,335.5 213.7,333.8 207.8,335.8"/>
<polygon fill="#50ffaf" points="536,319 541.9,317.5 538.2,315.7 532.3,317.1"/>
<polygon fill="#8fff70" points="343.7,319 349.6,319.4 345.8,310.3 339.9,310.5"/>
<polygon fill="#efff10" points="308.8,306.2 314.7,297.6 310.9,283.4 305,293"/>
<polygon fill="#8fff70" points="485.5,312.5 491.4,313.5 487.7,310.4 481.8,309"/>
<polygon fill="#ffdf00" points="450.6,290.4 456.5,292.8 452.7,288.9 446.8,286.1"/>
<polygon fill="#60ff9f" points="236.8,334.5 242.7,331 238.9,328.8 233,332.2"/>
<polygon fill="#ffbf00" points="425.4,286.4 431.3,282.5 427.5,280.2 421.6,284.1"/>
<polygon fill="#bfff40" points="293.2,313.4 299.1,303.2 295.3,291.7 289.4,302.8"/>
<polygon fill="#8fff70" points="394.2,317.6 400.1,308.1 396.3,307.2 390.4,316.4"/>
<polygon fill="#50ffaf" points="170.7,340.8 176.6,339.2 172.8,337.5 166.9,339.1"/>
<polygon fill="#50ffaf" points="378.6,328.8 384.5,323.9 380.8,322.2 374.9,327"/>
<polygon fill="#70ff8f" points="353.4,324.7 359.3,325.8 355.5,320.1 349.6,319.4"/>
<polygon fill="#efff10" points="409.8,299.6 415.7,290.7 411.9,289.5 406,298.3"/>
<polygon fill="#9fff60" points="277.6,322 283.5,313.1 279.7,305 273.8,314.6"/>
<polygon fill="#50ffaf" points="196,339.4 201.9,337.6 198.1,335.9 192.2,337.6"/>
<polygon fill="#cfff30" points="318.4,310.7 324.3,304.5 320.6,290.5 314.7,297.6"/>
<polygon fill="#efff10" points="460.3,297.5 466.2,300.2 462.4,296.1 456.5,292.8"/>
<polygon fill="#60ff9f" points="520.5,319.7 526.4,318.5 522.6,316.5 516.7,317.6"/>
<polygon fill="#70ff8f" points="495.2,316.5 501.1,316.6 497.3,313.9 491.4,313.5"/>
<polygon fill="#80ff80" points="262,329.1 267.9,322.6 264.2,317.6 258.3,324.4"/>
<polygon fill="#50ffaf" points="221.2,337.4 227.1,335 223.3,333.2 217.4,335.5"/>
<polygon fill="#50ffaf" points="545.7,319.3 551.6,317.7 547.8,315.9 541.9,317.5"/>
<polygon fill="#50ffaf" points="155.1,342.3 161,340.7 157.2,338.9 151.3,340.5"/>
<polygon fill="#afff50" points="328.1,315.5 334,312.1 330.2,300.3 324.3,304.5"/>
<polygon fill="#60ff9f" points="363.1,328.7 369,329 365.2,325.8 359.3,325.8"/>
<polygon fill="#bfff40" points="302.9,315.5 308.8,306.2 305,293 299.1,303.2"/>
<polygon fill="#bfff40" points="470,304.8 475.9,307 472.1,303 466.2,300.2"/>
<polygon fill="#60ff9f" points="246.5,334 252.4,329.8 248.6,326.6 242.7,331"/>
<polygon fill="#ffbf00" points="435,286.1 440.9,284.9 437.2,281.4 431.3,282.5"/>
<polygon fill="#50ffaf" points="180.4,340.9 186.3,339.3 182.5,337.6 176.6,339.2"/>
<polygon fill="#50ffaf" points="205.6,339.4 211.5,337.6 207.8,335.8 201.9,337.6"/>
<polygon fill="#9fff60" points="287.3,322.8 293.2,313.4 289.4,302.8 283.5,313.1"/>
<polygon fill="#60ff9f" points="504.9,319.2 510.8,318.5 507,316.2 501.1,316.6"/>
<polygon fill="#50ffaf" points="530.1,320.4 536,319 532.3,317.1 526.4,318.5"/>
<polygon fill="#70ff8f" points="388.3,325.2 394.2,317.6 390.4,316.4 384.5,323.9"/>
<polygon fill="#9fff60" points="337.8,320 343.7,319 339.9,310.5 334,312.1"/>
<polygon fill="#bfff40" points="403.9,309.5 409.8,299.6 406,298.3 400.1,308.1"/>
<polygon fill="#ffdf00" points="419.5,293 425.4,286.4 421.6,284.1 415.7,290.7"/>
<polygon fill="#60ff9f" points="230.9,337.2 236.8,334.5 233,332.2 227.1,335"/>
<polygon fill="#9fff60" points="479.6,311.2 485.5,312.5 481.8,309 475.9,307"/>
<polygon fill="#80ff80" points="271.7,329.3 277.6,322 273.8,314.6 267.9,322.6"/>
<polygon fill="#afff50" points="312.5,318.4 318.4,310.7 314.7,297.6 308.8,306.2"/>
<polygon fill="#ffcf00" points="444.7,289.5 450.6,290.4 446.8,286.1 440.9,284.9"/>
<polygon fill="#50ffaf" points="372.7,330.6 378.6,328.8 374.9,327 369,329"/>
<polygon fill="#50ffaf" points="164.8,342.4 170.7,340.8 166.9,339.1 161,340.7"/>
<polygon fill="#50ffaf" points="190.1,341 196,339.4 192.2,337.6 186.3,339.3"/>
<polygon fill="#60ff9f" points="256.1,334 262,329.1 258.3,324.4 252.4,329.8"/>
<polygon fill="#80ff80" points="347.5,323.8 353.4,324.7 349.6,319.4 343.7,319"/>
<polygon fill="#60ff9f" points="514.6,320.8 520.5,319.7 516.7,317.6 510.8,318.5"/>
<polygon fill="#8fff70" points="297,324.7 302.9,315.5 299.1,303.2 293.2,313.4"/>
<polygon fill="#50ffaf" points="215.3,339.4 221.2,337.4 217.4,335.5 211.5,337.6"/>
<polygon fill="#80ff80" points="489.3,316.1 495.2,316.5 491.4,313.5 485.5,312.5"/>
<polygon fill="#50ffaf" points="539.8,320.8 545.7,319.3 541.9,317.5 536,319"/>
<polygon fill="#ffff00" points="454.4,295.6 460.3,297.5 456.5,292.8 450.6,290.4"/>
<polygon fill="#9fff60" points="322.2,321.1 328.1,315.5 324.3,304.5 318.4,310.7"/>
<polygon fill="#70ff8f" points="281.4,330.8 287.3,322.8 283.5,313.1 277.6,322"/>
<polygon fill="#60ff9f" points="240.6,337.2 246.5,334 242.7,331 236.8,334.5"/>
<polygon fill="#ffcf00" points="429.1,289.9 435,286.1 431.3,282.5 425.4,286.4"/>
<polygon fill="#70ff8f" points="357.2,327.1 363.1,328.7 359.3,325.8 353.4,324.7"/>
<polygon fill="#50ffaf" points="174.5,342.5 180.4,340.9 176.6,339.2 170.7,340.8"/>
<polygon fill="#8fff70" points="398,318.9 403.9,309.5 400.1,308.1 394.2,317.6"/>
<polygon fill="#50ffaf" points="382.4,329.9 388.3,325.2 384.5,323.9 378.6,328.8"/>
<polygon fill="#dfff20" points="464.1,302.8 470,304.8 466.2,300.2 460.3,297.5"/>
<polygon fill="#efff10" points="413.6,301.7 419.5,293 415.7,290.7 409.8,299.6"/>
<polygon fill="#50ffaf" points="199.7,341.1 205.6,339.4 201.9,337.6 196,339.4"/>
<polygon fill="#60ff9f" points="265.8,335 271.7,329.3 267.9,322.6 262,329.1"/>
<polygon fill="#80ff80" points="306.6,327 312.5,318.4 308.8,306.2 302.9,315.5"/>
<polygon fill="#70ff8f" points="499,319.5 504.9,319.2 501.1,316.6 495.2,316.5"/>
<polygon fill="#50ffaf" points="524.2,321.7 530.1,320.4 526.4,318.5 520.5,319.7"/>
<polygon fill="#8fff70" points="331.9,322.9 337.8,320 334,312.1 328.1,315.5"/>
<polygon fill="#50ffaf" points="225,339.5 230.9,337.2 227.1,335 221.2,337.4"/>
<polygon fill="#50ffaf" points="549.5,321 555.4,319.5 551.6,317.7 545.7,319.3"/>
<polygon fill="#60ff9f" points="291.1,333.2 297,324.7 293.2,313.4 287.3,322.8"/>
<polygon fill="#afff50" points="473.7,309.7 479.6,311.2 475.9,307 470,304.8"/>
<polygon fill="#50ffaf" points="158.9,344 164.8,342.4 161,340.7 155.1,342.3"/>
<polygon fill="#60ff9f" points="366.8,329.8 372.7,330.6 369,329 363.1,328.7"/>
<polygon fill="#ffcf00" points="438.8,290.8 444.7,289.5 440.9,284.9 435,286.1"/>
<polygon fill="#50ffaf" points="250.2,337.8 256.1,334 252.4,329.8 246.5,334"/>
<polygon fill="#50ffaf" points="184.2,342.7 190.1,341 186.3,339.3 180.4,340.9"/>
<polygon fill="#80ff80" points="316.3,328.4 322.2,321.1 318.4,310.7 312.5,318.4"/>
<polygon fill="#8fff70" points="341.6,324.1 347.5,323.8 343.7,319 337.8,320"/>
<polygon fill="#60ff9f" points="508.7,321.7 514.6,320.8 510.8,318.5 504.9,319.2"/>
<polygon fill="#50ffaf" points="275.5,337.2 281.4,330.8 277.6,322 271.7,329.3"/>
<polygon fill="#50ffaf" points="209.4,341.2 215.3,339.4 211.5,337.6 205.6,339.4"/>
<polygon fill="#50ffaf" points="533.9,322.3 539.8,320.8 536,319 530.1,320.4"/>
<polygon fill="#70ff8f" points="392.1,326.3 398,318.9 394.2,317.6 388.3,325.2"/>
<polygon fill="#8fff70" points="483.4,315.4 489.3,316.1 485.5,312.5 479.6,311.2"/>
<polygon fill="#ffef00" points="423.2,296.3 429.1,289.9 425.4,286.4 419.5,293"/>
<polygon fill="#bfff40" points="407.7,311.4 413.6,301.7 409.8,299.6 403.9,309.5"/>
<polygon fill="#50ffaf" points="234.7,339.7 240.6,337.2 236.8,334.5 230.9,337.2"/>
<polygon fill="#ffef00" points="448.5,295.1 454.4,295.6 450.6,290.4 444.7,289.5"/>
<polygon fill="#50ffaf" points="300.7,335.6 306.6,327 302.9,315.5 297,324.7"/>
<polygon fill="#50ffaf" points="168.6,344.1 174.5,342.5 170.7,340.8 164.8,342.4"/>
<polygon fill="#50ffaf" points="376.5,331.3 382.4,329.9 378.6,328.8 372.7,330.6"/>
<polygon fill="#50ffaf" points="259.9,339.3 265.8,335 262,329.1 256.1,334"/>
<polygon fill="#80ff80" points="351.3,325.5 357.2,327.1 353.4,324.7 347.5,323.8"/>
<polygon fill="#80ff80" points="326,328.2 331.9,322.9 328.1,315.5 322.2,321.1"/>
<polygon fill="#50ffaf" points="193.8,342.8 199.7,341.1 196,339.4 190.1,341"/>
<polygon fill="#40ffbf" points="285.2,340.4 291.1,333.2 287.3,322.8 281.4,330.8"/>
<polygon fill="#60ff9f" points="518.3,323 524.2,321.7 520.5,319.7 514.6,320.8"/>
<polygon fill="#efff10" points="458.2,301.5 464.1,302.8 460.3,297.5 454.4,295.6"/>
<polygon fill="#70ff8f" points="493.1,319.6 499,319.5 495.2,316.5 489.3,316.1"/>
<polygon fill="#50ffaf" points="219.1,341.4 225,339.5 221.2,337.4 215.3,339.4"/>
<polygon fill="#50ffaf" points="543.6,322.6 549.5,321 545.7,319.3 539.8,320.8"/>
<polygon fill="#50ffaf" points="244.3,340.6 250.2,337.8 246.5,334 240.6,337.2"/>
<polygon fill="#50ffaf" points="310.4,336.6 316.3,328.4 312.5,318.4 306.6,327"/>
<polygon fill="#ffdf00" points="432.9,294.5 438.8,290.8 435,286.1 429.1,289.9"/>
<polygon fill="#40ffbf" points="269.6,342 275.5,337.2 271.7,329.3 265.8,335"/>
<polygon fill="#bfff40" points="467.8,308.5 473.7,309.7 470,304.8 464.1,302.8"/>
<polygon fill="#70ff8f" points="360.9,327.5 366.8,329.8 363.1,328.7 357.2,327.1"/>
<polygon fill="#50ffaf" points="178.3,344.3 184.2,342.7 180.4,340.9 174.5,342.5"/>
<polygon fill="#8fff70" points="401.8,320.4 407.7,311.4 403.9,309.5 398,318.9"/>
<polygon fill="#80ff80" points="335.7,326.8 341.6,324.1 337.8,320 331.9,322.9"/>
<polygon fill="#efff10" points="417.3,304.6 423.2,296.3 419.5,293 413.6,301.7"/>
<polygon fill="#60ff9f" points="386.2,330.7 392.1,326.3 388.3,325.2 382.4,329.9"/>
<polygon fill="#30ffcf" points="294.8,343.4 300.7,335.6 297,324.7 291.1,333.2"/>
<polygon fill="#50ffaf" points="203.5,342.9 209.4,341.2 205.6,339.4 199.7,341.1"/>
<polygon fill="#60ff9f" points="502.8,322.4 508.7,321.7 504.9,319.2 499,319.5"/>
<polygon fill="#50ffaf" points="528,323.7 533.9,322.3 530.1,320.4 524.2,321.7"/>
<polygon fill="#50ffaf" points="228.8,341.8 234.7,339.7 230.9,337.2 225,339.5"/>
<polygon fill="#50ffaf" points="553.3,322.8 559.2,321.2 555.4,319.5 549.5,321"/>
<polygon fill="#9fff60" points="477.5,314.8 483.4,315.4 479.6,311.2 473.7,309.7"/>
<polygon fill="#ffef00" points="442.6,296.5 448.5,295.1 444.7,289.5 438.8,290.8"/>
<polygon fill="#40ffbf" points="254,342.3 259.9,339.3 256.1,334 250.2,337.8"/>
<polygon fill="#50ffaf" points="320.1,335.4 326,328.2 322.2,321.1 316.3,328.4"/>
<polygon fill="#50ffaf" points="162.7,345.7 168.6,344.1 164.8,342.4 158.9,344"/>
<polygon fill="#30ffcf" points="279.3,345.9 285.2,340.4 281.4,330.8 275.5,337.2"/>
<polygon fill="#70ff8f" points="370.6,330 376.5,331.3 372.7,330.6 366.8,329.8"/>
<polygon fill="#50ffaf" points="187.9,344.4 193.8,342.8 190.1,341 184.2,342.7"/>
<polygon fill="#8fff70" points="345.4,325.4 351.3,325.5 347.5,323.8 341.6,324.1"/>
<polygon fill="#20ffdf" points="304.5,345 310.4,336.6 306.6,327 300.7,335.6"/>
<polygon fill="#60ff9f" points="512.4,324.1 518.3,323 514.6,320.8 508.7,321.7"/>
<polygon fill="#50ffaf" points="213.2,343.2 219.1,341.4 215.3,339.4 209.4,341.2"/>
<polygon fill="#efff10" points="452.3,301.5 458.2,301.5 454.4,295.6 448.5,295.1"/>
<polygon fill="#80ff80" points="487.2,319.6 493.1,319.6 489.3,316.1 483.4,315.4"/>
<polygon fill="#50ffaf" points="537.7,324.1 543.6,322.6 539.8,320.8 533.9,322.3"/>
<polygon fill="#ffff00" points="427,300.6 432.9,294.5 429.1,289.9 423.2,296.3"/>
<polygon fill="#70ff8f" points="395.9,327.4 401.8,320.4 398,318.9 392.1,326.3"/>
<polygon fill="#50ffaf" points="238.4,342.7 244.3,340.6 240.6,337.2 234.7,339.7"/>
<polygon fill="#bfff40" points="411.4,313.8 417.3,304.6 413.6,301.7 407.7,311.4"/>
<polygon fill="#30ffcf" points="263.7,345.4 269.6,342 265.8,335 259.9,339.3"/>
<polygon fill="#10ffef" points="288.9,349.9 294.8,343.4 291.1,333.2 285.2,340.4"/>
<polygon fill="#70ff8f" points="329.8,332 335.7,326.8 331.9,322.9 326,328.2"/>
<polygon fill="#50ffaf" points="172.4,345.9 178.3,344.3 174.5,342.5 168.6,344.1"/>
<polygon fill="#60ff9f" points="380.3,331.6 386.2,330.7 382.4,329.9 376.5,331.3"/>
<polygon fill="#cfff30" points="461.9,308 467.8,308.5 464.1,302.8 458.2,301.5"/>
<polygon fill="#8fff70" points="355,325.3 360.9,327.5 357.2,327.1 351.3,325.5"/>
<polygon fill="#50ffaf" points="197.6,344.6 203.5,342.9 199.7,341.1 193.8,342.8"/>
<polygon fill="#30ffcf" points="314.2,343.8 320.1,335.4 316.3,328.4 310.4,336.6"/>
<polygon fill="#70ff8f" points="496.9,323 502.8,322.4 499,319.5 493.1,319.6"/>
<polygon fill="#50ffaf" points="522.1,325.1 528,323.7 524.2,321.7 518.3,323"/>
<polygon fill="#50ffaf" points="222.9,343.6 228.8,341.8 225,339.5 219.1,341.4"/>
<polygon fill="#50ffaf" points="547.4,324.4 553.3,322.8 549.5,321 543.6,322.6"/>
<polygon fill="#ffff00" points="436.7,300.2 442.6,296.5 438.8,290.8 432.9,294.5"/>
<polygon fill="#40ffbf" points="248.1,344.5 254,342.3 250.2,337.8 244.3,340.6"/>
<polygon fill="#20ffdf" points="273.4,349.7 279.3,345.9 275.5,337.2 269.6,342"/>
<polygon fill="#00ffff" points="298.6,352.6 304.5,345 300.7,335.6 294.8,343.4"/>
<polygon fill="#afff50" points="471.6,314.4 477.5,314.8 473.7,309.7 467.8,308.5"/>
<polygon fill="#50ffaf" points="182,346 187.9,344.4 184.2,342.7 178.3,344.3"/>
<polygon fill="#dfff20" points="421.1,308.5 427,300.6 423.2,296.3 417.3,304.6"/>
<polygon fill="#8fff70" points="405.5,322.3 411.4,313.8 407.7,311.4 401.8,320.4"/>
<polygon fill="#80ff80" points="364.7,327 370.6,330 366.8,329.8 360.9,327.5"/>
<polygon fill="#8fff70" points="339.5,327.8 345.4,325.4 341.6,324.1 335.7,326.8"/>
<polygon fill="#60ff9f" points="390,331.3 395.9,327.4 392.1,326.3 386.2,330.7"/>
<polygon fill="#50ffaf" points="207.3,344.8 213.2,343.2 209.4,341.2 203.5,342.9"/>
<polygon fill="#60ff9f" points="506.5,325.2 512.4,324.1 508.7,321.7 502.8,322.4"/>
<polygon fill="#50ffaf" points="531.8,325.6 537.7,324.1 533.9,322.3 528,323.7"/>
<polygon fill="#efff10" points="446.4,303.3 452.3,301.5 448.5,295.1 442.6,296.5"/>
<polygon fill="#00ffff" points="283,354.6 288.9,349.9 285.2,340.4 279.3,345.9"/>
<polygon fill="#50ffaf" points="232.5,344.4 238.4,342.7 234.7,339.7 228.8,341.8"/>
<polygon fill="#8fff70" points="481.3,319.8 487.2,319.6 483.4,315.4 477.5,314.8"/>
<polygon fill="#30ffcf" points="257.8,347.6 263.7,345.4 259.9,339.3 254,342.3"/>
<polygon fill="#50ffaf" points="323.9,339.4 329.8,332 326,328.2 320.1,335.4"/>
<polygon fill="#50ffaf" points="557.1,324.6 563,323 559.2,321.2 553.3,322.8"/>
<polygon fill="#00ffff" points="308.3,352.3 314.2,343.8 310.4,336.6 304.5,345"/>
<polygon fill="#50ffaf" points="166.5,347.5 172.4,345.9 168.6,344.1 162.7,345.7"/>
<polygon fill="#70ff8f" points="374.4,329.6 380.3,331.6 376.5,331.3 370.6,330"/>
<polygon fill="#50ffaf" points="191.7,346.2 197.6,344.6 193.8,342.8 187.9,344.4"/>
<polygon fill="#cfff30" points="456,308.7 461.9,308 458.2,301.5 452.3,301.5"/>
<polygon fill="#9fff60" points="349.1,324.7 355,325.3 351.3,325.5 345.4,325.4"/>
<polygon fill="#efff10" points="430.8,306.1 436.7,300.2 432.9,294.5 427,300.6"/>
<polygon fill="#60ff9f" points="516.2,326.4 522.1,325.1 518.3,323 512.4,324.1"/>
<polygon fill="#00dfff" points="292.7,358.6 298.6,352.6 294.8,343.4 288.9,349.9"/>
<polygon fill="#70ff8f" points="491,323.7 496.9,323 493.1,319.6 487.2,319.6"/>
<polygon fill="#50ffaf" points="217,345.2 222.9,343.6 219.1,341.4 213.2,343.2"/>
<polygon fill="#10ffef" points="267.5,352.1 273.4,349.7 269.6,342 263.7,345.4"/>
<polygon fill="#50ffaf" points="541.5,325.9 547.4,324.4 543.6,322.6 537.7,324.1"/>
<polygon fill="#40ffbf" points="242.2,346.1 248.1,344.5 244.3,340.6 238.4,342.7"/>
<polygon fill="#afff50" points="415.2,317 421.1,308.5 417.3,304.6 411.4,313.8"/>
<polygon fill="#70ff8f" points="399.6,328.6 405.5,322.3 401.8,320.4 395.9,327.4"/>
<polygon fill="#afff50" points="465.7,314.8 471.6,314.4 467.8,308.5 461.9,308"/>
<polygon fill="#70ff8f" points="333.6,333 339.5,327.8 335.7,326.8 329.8,332"/>
<polygon fill="#50ffaf" points="176.1,347.6 182,346 178.3,344.3 172.4,345.9"/>
<polygon fill="#20ffdf" points="318,348.3 323.9,339.4 320.1,335.4 314.2,343.8"/>
<polygon fill="#70ff8f" points="384.1,331.5 390,331.3 386.2,330.7 380.3,331.6"/>
<polygon fill="#50ffaf" points="201.4,346.4 207.3,344.8 203.5,342.9 197.6,344.6"/>
<polygon fill="#00efff" points="277.1,357.5 283,354.6 279.3,345.9 273.4,349.7"/>
<polygon fill="#60ff9f" points="500.6,326.2 506.5,325.2 502.8,322.4 496.9,323"/>
<polygon fill="#dfff20" points="440.5,307.2 446.4,303.3 442.6,296.5 436.7,300.2"/>
<polygon fill="#9fff60" points="358.8,324 364.7,327 360.9,327.5 355,325.3"/>
<polygon fill="#00dfff" points="302.4,360 308.3,352.3 304.5,345 298.6,352.6"/>
<polygon fill="#50ffaf" points="525.9,327.1 531.8,325.6 528,323.7 522.1,325.1"/>
<polygon fill="#50ffaf" points="226.6,346 232.5,344.4 228.8,341.8 222.9,343.6"/>
<polygon fill="#30ffcf" points="251.9,349 257.8,347.6 254,342.3 248.1,344.5"/>
<polygon fill="#8fff70" points="475.4,320.3 481.3,319.8 477.5,314.8 471.6,314.4"/>
<polygon fill="#50ffaf" points="551.2,326.1 557.1,324.6 553.3,322.8 547.4,324.4"/>
<polygon fill="#cfff30" points="424.9,313.5 430.8,306.1 427,300.6 421.1,308.5"/>
<polygon fill="#00cfff" points="286.8,362.8 292.7,358.6 288.9,349.9 283,354.6"/>
<polygon fill="#8fff70" points="409.3,324.8 415.2,317 411.4,313.8 405.5,322.3"/>
<polygon fill="#50ffaf" points="185.8,347.8 191.7,346.2 187.9,344.4 182,346"/>
<polygon fill="#cfff30" points="450.1,311.1 456,308.7 452.3,301.5 446.4,303.3"/>
<polygon fill="#9fff60" points="343.2,326.8 349.1,324.7 345.4,325.4 339.5,327.8"/>
<polygon fill="#60ff9f" points="510.3,327.7 516.2,326.4 512.4,324.1 506.5,325.2"/>
<polygon fill="#8fff70" points="368.5,325.8 374.4,329.6 370.6,330 364.7,327"/>
<polygon fill="#50ffaf" points="211.1,346.7 217,345.2 213.2,343.2 207.3,344.8"/>
<polygon fill="#20ffdf" points="261.6,353.3 267.5,352.1 263.7,345.4 257.8,347.6"/>
<polygon fill="#70ff8f" points="393.7,331.8 399.6,328.6 395.9,327.4 390,331.3"/>
<polygon fill="#70ff8f" points="485.1,324.6 491,323.7 487.2,319.6 481.3,319.8"/>
<polygon fill="#50ffaf" points="535.6,327.5 541.5,325.9 537.7,324.1 531.8,325.6"/>
<polygon fill="#40ffbf" points="236.3,347.4 242.2,346.1 238.4,342.7 232.5,344.4"/>
<polygon fill="#50ffaf" points="327.7,340.9 333.6,333 329.8,332 323.9,339.4"/>
<polygon fill="#00efff" points="312.1,357.4 318,348.3 314.2,343.8 308.3,352.3"/>
<polygon fill="#50ffaf" points="560.8,326.3 566.7,324.7 563,323 557.1,324.6"/>
<polygon fill="#afff50" points="459.8,316.4 465.7,314.8 461.9,308 456,308.7"/>
<polygon fill="#50ffaf" points="170.2,349.2 176.1,347.6 172.4,345.9 166.5,347.5"/>
<polygon fill="#00bfff" points="296.5,366.1 302.4,360 298.6,352.6 292.7,358.6"/>
<polygon fill="#cfff30" points="434.6,313 440.5,307.2 436.7,300.2 430.8,306.1"/>
<polygon fill="#00efff" points="271.2,359 277.1,357.5 273.4,349.7 267.5,352.1"/>
<polygon fill="#50ffaf" points="195.5,348 201.4,346.4 197.6,344.6 191.7,346.2"/>
<polygon fill="#80ff80" points="378.2,328.7 384.1,331.5 380.3,331.6 374.4,329.6"/>
<polygon fill="#60ff9f" points="494.7,327.4 500.6,326.2 496.9,323 491,323.7"/>
<polygon fill="#50ffaf" points="520,328.6 525.9,327.1 522.1,325.1 516.2,326.4"/>
<polygon fill="#50ffaf" points="220.7,347.4 226.6,346 222.9,343.6 217,345.2"/>
<polygon fill="#30ffcf" points="246,349.9 251.9,349 248.1,344.5 242.2,346.1"/>
<polygon fill="#9fff60" points="419,321.4 424.9,313.5 421.1,308.5 415.2,317"/>
<polygon fill="#afff50" points="352.9,322.8 358.8,324 355,325.3 349.1,324.7"/>
<polygon fill="#50ffaf" points="545.3,327.7 551.2,326.1 547.4,324.4 541.5,325.9"/>
<polygon fill="#8fff70" points="469.5,321.7 475.4,320.3 471.6,314.4 465.7,314.8"/>
<polygon fill="#70ff8f" points="403.4,330.3 409.3,324.8 405.5,322.3 399.6,328.6"/>
<polygon fill="#00cfff" points="280.9,365.1 286.8,362.8 283,354.6 277.1,357.5"/>
<polygon fill="#bfff40" points="444.2,315.3 450.1,311.1 446.4,303.3 440.5,307.2"/>
<polygon fill="#50ffaf" points="179.9,349.4 185.8,347.8 182,346 176.1,347.6"/>
<polygon fill="#20ffdf" points="321.8,350.4 327.7,340.9 323.9,339.4 318,348.3"/>
<polygon fill="#80ff80" points="337.3,332.1 343.2,326.8 339.5,327.8 333.6,333"/>
<polygon fill="#00bfff" points="306.2,365.5 312.1,357.4 308.3,352.3 302.4,360"/>
<polygon fill="#60ff9f" points="504.4,329.2 510.3,327.7 506.5,325.2 500.6,326.2"/>
<polygon fill="#50ffaf" points="205.2,348.3 211.1,346.7 207.3,344.8 201.4,346.4"/>
<polygon fill="#70ff8f" points="387.8,331.3 393.7,331.8 390,331.3 384.1,331.5"/>
<polygon fill="#20ffdf" points="255.7,353.9 261.6,353.3 257.8,347.6 251.9,349"/>
<polygon fill="#70ff8f" points="479.2,326 485.1,324.6 481.3,319.8 475.4,320.3"/>
<polygon fill="#50ffaf" points="529.7,329 535.6,327.5 531.8,325.6 525.9,327.1"/>
<polygon fill="#40ffbf" points="230.4,348.5 236.3,347.4 232.5,344.4 226.6,346"/>
<polygon fill="#afff50" points="362.6,322.1 368.5,325.8 364.7,327 358.8,324"/>
<polygon fill="#50ffaf" points="554.9,327.9 560.8,326.3 557.1,324.6 551.2,326.1"/>
<polygon fill="#00afff" points="290.6,370.1 296.5,366.1 292.7,358.6 286.8,362.8"/>
<polygon fill="#afff50" points="428.7,320 434.6,313 430.8,306.1 424.9,313.5"/>
<polygon fill="#9fff60" points="453.9,319.5 459.8,316.4 456,308.7 450.1,311.1"/>
<polygon fill="#80ff80" points="413.1,328.3 419,321.4 415.2,317 409.3,324.8"/>
<polygon fill="#00ffff" points="265.3,359.3 271.2,359 267.5,352.1 261.6,353.3"/>
<polygon fill="#50ffaf" points="189.6,349.6 195.5,348 191.7,346.2 185.8,347.8"/>
<polygon fill="#60ff9f" points="488.8,329 494.7,327.4 491,323.7 485.1,324.6"/>
<polygon fill="#50ffaf" points="514.1,330.1 520,328.6 516.2,326.4 510.3,327.7"/>
<polygon fill="#50ffaf" points="214.8,348.8 220.7,347.4 217,345.2 211.1,346.7"/>
<polygon fill="#40ffbf" points="240.1,350.6 246,349.9 242.2,346.1 236.3,347.4"/>
<polygon fill="#70ff8f" points="397.5,332.6 403.4,330.3 399.6,328.6 393.7,331.8"/>
<polygon fill="#50ffaf" points="539.4,329.3 545.3,327.7 541.5,325.9 535.6,327.5"/>
<polygon fill="#00efff" points="315.9,360.2 321.8,350.4 318,348.3 312.1,357.4"/>
<polygon fill="#afff50" points="347,324.6 352.9,322.8 349.1,324.7 343.2,326.8"/>
<polygon fill="#afff50" points="372.3,324.2 378.2,328.7 374.4,329.6 368.5,325.8"/>
<polygon fill="#8fff70" points="463.6,324.2 469.5,321.7 465.7,314.8 459.8,316.4"/>
<polygon fill="#00afff" points="300.3,371.9 306.2,365.5 302.4,360 296.5,366.1"/>
<polygon fill="#60ff9f" points="331.4,340.3 337.3,332.1 333.6,333 327.7,340.9"/>
<polygon fill="#50ffaf" points="564.6,328.1 570.5,326.5 566.7,324.7 560.8,326.3"/>
<polygon fill="#9fff60" points="438.3,321.2 444.2,315.3 440.5,307.2 434.6,313"/>
<polygon fill="#00cfff" points="275,365.8 280.9,365.1 277.1,357.5 271.2,359"/>
<polygon fill="#50ffaf" points="174,351 179.9,349.4 176.1,347.6 170.2,349.2"/>
<polygon fill="#50ffaf" points="199.3,349.8 205.2,348.3 201.4,346.4 195.5,348"/>
<polygon fill="#60ff9f" points="498.5,330.8 504.4,329.2 500.6,326.2 494.7,327.4"/>
<polygon fill="#80ff80" points="422.8,327.4 428.7,320 424.9,313.5 419,321.4"/>
<polygon fill="#20ffdf" points="249.8,354 255.7,353.9 251.9,349 246,349.9"/>
<polygon fill="#70ff8f" points="473.3,328.3 479.2,326 475.4,320.3 469.5,321.7"/>
<polygon fill="#50ffaf" points="523.8,330.6 529.7,329 525.9,327.1 520,328.6"/>
<polygon fill="#50ffaf" points="224.5,349.7 230.4,348.5 226.6,346 220.7,347.4"/>
<polygon fill="#8fff70" points="381.9,327.7 387.8,331.3 384.1,331.5 378.2,328.7"/>
<polygon fill="#00afff" points="284.7,372 290.6,370.1 286.8,362.8 280.9,365.1"/>
<polygon fill="#50ffaf" points="549,329.5 554.9,327.9 551.2,326.1 545.3,327.7"/>
<polygon fill="#8fff70" points="448,324.4 453.9,319.5 450.1,311.1 444.2,315.3"/>
<polygon fill="#70ff8f" points="407.2,333.1 413.1,328.3 409.3,324.8 403.4,330.3"/>
<polygon fill="#cfff30" points="356.7,320.2 362.6,322.1 358.8,324 352.9,322.8"/>
<polygon fill="#00bfff" points="310,369.1 315.9,360.2 312.1,357.4 306.2,365.5"/>
<polygon fill="#50ffaf" points="183.7,351.1 189.6,349.6 185.8,347.8 179.9,349.4"/>
<polygon fill="#10ffef" points="259.4,359 265.3,359.3 261.6,353.3 255.7,353.9"/>
<polygon fill="#20ffdf" points="325.5,350.5 331.4,340.3 327.7,340.9 321.8,350.4"/>
<polygon fill="#60ff9f" points="482.9,331.2 488.8,329 485.1,324.6 479.2,326"/>
<polygon fill="#50ffaf" points="508.2,331.8 514.1,330.1 510.3,327.7 504.4,329.2"/>
<polygon fill="#50ffaf" points="208.9,350.2 214.8,348.8 211.1,346.7 205.2,348.3"/>
<polygon fill="#9fff60" points="341.1,329.8 347,324.6 343.2,326.8 337.3,332.1"/>
<polygon fill="#80ff80" points="432.4,328.3 438.3,321.2 434.6,313 428.7,320"/>
<polygon fill="#40ffbf" points="234.2,351.3 240.1,350.6 236.3,347.4 230.4,348.5"/>
<polygon fill="#009fff" points="294.4,376 300.3,371.9 296.5,366.1 290.6,370.1"/>
<polygon fill="#80ff80" points="457.7,328.3 463.6,324.2 459.8,316.4 453.9,319.5"/>
<polygon fill="#80ff80" points="391.6,331.4 397.5,332.6 393.7,331.8 387.8,331.3"/>
<polygon fill="#50ffaf" points="533.5,330.9 539.4,329.3 535.6,327.5 529.7,329"/>
<polygon fill="#50ffaf" points="558.7,329.7 564.6,328.1 560.8,326.3 554.9,327.9"/>
<polygon fill="#00dfff" points="269.1,365.2 275,365.8 271.2,359 265.3,359.3"/>
<polygon fill="#cfff30" points="366.4,319.7 372.3,324.2 368.5,325.8 362.6,322.1"/>
<polygon fill="#70ff8f" points="416.9,333.8 422.8,327.4 419,321.4 413.1,328.3"/>
<polygon fill="#50ffaf" points="193.4,351.3 199.3,349.8 195.5,348 189.6,349.6"/>
<polygon fill="#50ffaf" points="492.6,332.9 498.5,330.8 494.7,327.4 488.8,329"/>
<polygon fill="#60ff9f" points="467.4,331.8 473.3,328.3 469.5,321.7 463.6,324.2"/>
<polygon fill="#50ffaf" points="517.9,332.3 523.8,330.6 520,328.6 514.1,330.1"/>
<polygon fill="#70ff8f" points="442.1,330.8 448,324.4 444.2,315.3 438.3,321.2"/>
<polygon fill="#30ffcf" points="243.9,354.1 249.8,354 246,349.9 240.1,350.6"/>
<polygon fill="#50ffaf" points="218.6,350.9 224.5,349.7 220.7,347.4 214.8,348.8"/>
<polygon fill="#70ff8f" points="401.3,334.7 407.2,333.1 403.4,330.3 397.5,332.6"/>
<polygon fill="#00bfff" points="278.8,372.1 284.7,372 280.9,365.1 275,365.8"/>
<polygon fill="#50ffaf" points="543.1,331.1 549,329.5 545.3,327.7 539.4,329.3"/>
<polygon fill="#009fff" points="304.1,376.1 310,369.1 306.2,365.5 300.3,371.9"/>
<polygon fill="#00efff" points="319.6,361.1 325.5,350.5 321.8,350.4 315.9,360.2"/>
<polygon fill="#bfff40" points="376,322.4 381.9,327.7 378.2,328.7 372.3,324.2"/>
<polygon fill="#50ffaf" points="568.4,329.8 574.3,328.2 570.5,326.5 564.6,328.1"/>
<polygon fill="#cfff30" points="350.8,321.5 356.7,320.2 352.9,322.8 347,324.6"/>
<polygon fill="#70ff8f" points="335.2,338.3 341.1,329.8 337.3,332.1 331.4,340.3"/>
<polygon fill="#60ff9f" points="426.5,335.5 432.4,328.3 428.7,320 422.8,327.4"/>
<polygon fill="#50ffaf" points="177.8,352.7 183.7,351.1 179.9,349.4 174,351"/>
<polygon fill="#60ff9f" points="477,334.3 482.9,331.2 479.2,326 473.3,328.3"/>
<polygon fill="#10ffef" points="253.5,358.3 259.4,359 255.7,353.9 249.8,354"/>
<polygon fill="#60ff9f" points="451.8,334 457.7,328.3 453.9,319.5 448,324.4"/>
<polygon fill="#50ffaf" points="502.3,333.8 508.2,331.8 504.4,329.2 498.5,330.8"/>
<polygon fill="#50ffaf" points="203,351.7 208.9,350.2 205.2,348.3 199.3,349.8"/>
<polygon fill="#009fff" points="288.5,377.8 294.4,376 290.6,370.1 284.7,372"/>
<polygon fill="#40ffbf" points="228.3,352.1 234.2,351.3 230.4,348.5 224.5,349.7"/>
<polygon fill="#50ffaf" points="527.6,332.6 533.5,330.9 529.7,329 523.8,330.6"/>
<polygon fill="#60ff9f" points="411,338 416.9,333.8 413.1,328.3 407.2,333.1"/>
<polygon fill="#50ffaf" points="552.8,331.3 558.7,329.7 554.9,327.9 549,329.5"/>
<polygon fill="#9fff60" points="385.7,327.1 391.6,331.4 387.8,331.3 381.9,327.7"/>
<polygon fill="#00efff" points="263.2,364.1 269.1,365.2 265.3,359.3 259.4,359"/>
<polygon fill="#50ffaf" points="436.2,338.2 442.1,330.8 438.3,321.2 432.4,328.3"/>
<polygon fill="#00bfff" points="313.7,370.8 319.6,361.1 315.9,360.2 310,369.1"/>
<polygon fill="#50ffaf" points="461.5,336.9 467.4,331.8 463.6,324.2 457.7,328.3"/>
<polygon fill="#50ffaf" points="486.7,335.7 492.6,332.9 488.8,329 482.9,331.2"/>
<polygon fill="#efff10" points="360.5,317.1 366.4,319.7 362.6,322.1 356.7,320.2"/>
<polygon fill="#50ffaf" points="187.5,352.9 193.4,351.3 189.6,349.6 183.7,351.1"/>
<polygon fill="#008fff" points="298.2,380.5 304.1,376.1 300.3,371.9 294.4,376"/>
<polygon fill="#50ffaf" points="512,334.2 517.9,332.3 514.1,330.1 508.2,331.8"/>
<polygon fill="#50ffaf" points="212.7,352.2 218.6,350.9 214.8,348.8 208.9,350.2"/>
<polygon fill="#40ffbf" points="238,354.3 243.9,354.1 240.1,350.6 234.2,351.3"/>
<polygon fill="#40ffbf" points="329.3,348.9 335.2,338.3 331.4,340.3 325.5,350.5"/>
<polygon fill="#50ffaf" points="537.2,332.7 543.1,331.1 539.4,329.3 533.5,330.9"/>
<polygon fill="#80ff80" points="395.4,332.8 401.3,334.7 397.5,332.6 391.6,331.4"/>
<polygon fill="#40ffbf" points="420.6,341.7 426.5,335.5 422.8,327.4 416.9,333.8"/>
<polygon fill="#00cfff" points="272.9,370.9 278.8,372.1 275,365.8 269.1,365.2"/>
<polygon fill="#bfff40" points="344.9,326.5 350.8,321.5 347,324.6 341.1,329.8"/>
<polygon fill="#50ffaf" points="562.5,331.4 568.4,329.8 564.6,328.1 558.7,329.7"/>
<polygon fill="#40ffbf" points="445.9,341.2 451.8,334 448,324.4 442.1,330.8"/>
<polygon fill="#40ffbf" points="471.1,338.7 477,334.3 473.3,328.3 467.4,331.8"/>
<polygon fill="#50ffaf" points="496.4,336.2 502.3,333.8 498.5,330.8 492.6,332.9"/>
<polygon fill="#efff10" points="370.1,317.1 376,322.4 372.3,324.2 366.4,319.7"/>
<polygon fill="#50ffaf" points="197.1,353.2 203,351.7 199.3,349.8 193.4,351.3"/>
<polygon fill="#20ffdf" points="247.6,357.7 253.5,358.3 249.8,354 243.9,354.1"/>
<polygon fill="#009fff" points="282.6,377.6 288.5,377.8 284.7,372 278.8,372.1"/>
<polygon fill="#50ffaf" points="521.7,334.3 527.6,332.6 523.8,330.6 517.9,332.3"/>
<polygon fill="#50ffaf" points="222.4,353.1 228.3,352.1 224.5,349.7 218.6,350.9"/>
<polygon fill="#60ff9f" points="405.1,339.1 411,338 407.2,333.1 401.3,334.7"/>
<polygon fill="#008fff" points="307.8,378.4 313.7,370.8 310,369.1 304.1,376.1"/>
<polygon fill="#30ffcf" points="430.3,345.7 436.2,338.2 432.4,328.3 426.5,335.5"/>
<polygon fill="#50ffaf" points="546.9,332.9 552.8,331.3 549,329.5 543.1,331.1"/>
<polygon fill="#30ffcf" points="455.6,343.6 461.5,336.9 457.7,328.3 451.8,334"/>
<polygon fill="#00ffff" points="323.4,360.2 329.3,348.9 325.5,350.5 319.6,361.1"/>
<polygon fill="#50ffaf" points="572.2,331.5 578.1,329.9 574.3,328.2 568.4,329.8"/>
<polygon fill="#40ffbf" points="480.8,339.5 486.7,335.7 482.9,331.2 477,334.3"/>
<polygon fill="#cfff30" points="379.8,321 385.7,327.1 381.9,327.7 376,322.4"/>
<polygon fill="#00ffff" points="257.3,362.7 263.2,364.1 259.4,359 253.5,358.3"/>
<polygon fill="#50ffaf" points="181.6,354.5 187.5,352.9 183.7,351.1 177.8,352.7"/>
<polygon fill="#0080ff" points="292.3,382.4 298.2,380.5 294.4,376 288.5,377.8"/>
<polygon fill="#50ffaf" points="506.1,336.3 512,334.2 508.2,331.8 502.3,333.8"/>
<polygon fill="#efff10" points="354.6,317.8 360.5,317.1 356.7,320.2 350.8,321.5"/>
<polygon fill="#30ffcf" points="414.7,345.7 420.6,341.7 416.9,333.8 411,338"/>
<polygon fill="#8fff70" points="339,335 344.9,326.5 341.1,329.8 335.2,338.3"/>
<polygon fill="#50ffaf" points="206.8,353.5 212.7,352.2 208.9,350.2 203,351.7"/>
<polygon fill="#40ffbf" points="232.1,354.7 238,354.3 234.2,351.3 228.3,352.1"/>
<polygon fill="#50ffaf" points="531.3,334.4 537.2,332.7 533.5,330.9 527.6,332.6"/>
<polygon fill="#10ffef" points="440,349.3 445.9,341.2 442.1,330.8 436.2,338.2"/>
<polygon fill="#50ffaf" points="556.6,333 562.5,331.4 558.7,329.7 552.8,331.3"/>
<polygon fill="#30ffcf" points="465.2,344.7 471.1,338.7 467.4,331.8 461.5,336.9"/>
<polygon fill="#00dfff" points="267,369 272.9,370.9 269.1,365.2 263.2,364.1"/>
<polygon fill="#afff50" points="389.5,327.9 395.4,332.8 391.6,331.4 385.7,327.1"/>
<polygon fill="#40ffbf" points="490.5,339.4 496.4,336.2 492.6,332.9 486.7,335.7"/>
<polygon fill="#10ffef" points="424.4,352.2 430.3,345.7 426.5,335.5 420.6,341.7"/>
<polygon fill="#00bfff" points="317.5,370.6 323.4,360.2 319.6,361.1 313.7,370.8"/>
<polygon fill="#50ffaf" points="191.2,354.7 197.1,353.2 193.4,351.3 187.5,352.9"/>
<polygon fill="#0080ff" points="301.9,383.4 307.8,378.4 304.1,376.1 298.2,380.5"/>
<polygon fill="#50ffaf" points="515.8,336.3 521.7,334.3 517.9,332.3 512,334.2"/>
<polygon fill="#30ffcf" points="241.7,357.4 247.6,357.7 243.9,354.1 238,354.3"/>
<polygon fill="#50ffaf" points="216.5,354.2 222.4,353.1 218.6,350.9 212.7,352.2"/>
<polygon fill="#10ffef" points="449.7,351.7 455.6,343.6 451.8,334 445.9,341.2"/>
<polygon fill="#00bfff" points="276.7,375.9 282.6,377.6 278.8,372.1 272.9,370.9"/>
<polygon fill="#ffef00" points="364.2,313.7 370.1,317.1 366.4,319.7 360.5,317.1"/>
<polygon fill="#70ff8f" points="399.2,336.7 405.1,339.1 401.3,334.7 395.4,332.8"/>
<polygon fill="#50ffaf" points="541,334.5 546.9,332.9 543.1,331.1 537.2,332.7"/>
<polygon fill="#50ffaf" points="333.1,345.8 339,335 335.2,338.3 329.3,348.9"/>
<polygon fill="#30ffcf" points="474.9,344.6 480.8,339.5 477,334.3 471.1,338.7"/>
<polygon fill="#50ffaf" points="566.3,333.1 572.2,331.5 568.4,329.8 562.5,331.4"/>
<polygon fill="#00efff" points="434.1,357.5 440,349.3 436.2,338.2 430.3,345.7"/>
<polygon fill="#dfff20" points="348.7,322.4 354.6,317.8 350.8,321.5 344.9,326.5"/>
<polygon fill="#40ffbf" points="500.2,339 506.1,336.3 502.3,333.8 496.4,336.2"/>
<polygon fill="#008fff" points="286.4,382.1 292.3,382.4 288.5,377.8 282.6,377.6"/>
<polygon fill="#20ffdf" points="251.4,361.4 257.3,362.7 253.5,358.3 247.6,357.7"/>
<polygon fill="#40ffbf" points="408.8,346.7 414.7,345.7 411,338 405.1,339.1"/>
<polygon fill="#50ffaf" points="200.9,355 206.8,353.5 203,351.7 197.1,353.2"/>
<polygon fill="#00ffff" points="459.3,352.3 465.2,344.7 461.5,336.9 455.6,343.6"/>
<polygon fill="#50ffaf" points="525.4,336.2 531.3,334.4 527.6,332.6 521.7,334.3"/>
<polygon fill="#40ffbf" points="226.2,355.4 232.1,354.7 228.3,352.1 222.4,353.1"/>
<polygon fill="#ffff00" points="373.9,315 379.8,321 376,322.4 370.1,317.1"/>
<polygon fill="#009fff" points="311.6,378.9 317.5,370.6 313.7,370.8 307.8,378.4"/>
<polygon fill="#50ffaf" points="550.7,334.6 556.6,333 552.8,331.3 546.9,332.9"/>
<polygon fill="#30ffcf" points="484.6,343.7 490.5,339.4 486.7,335.7 480.8,339.5"/>
<polygon fill="#00ffff" points="418.5,356.5 424.4,352.2 420.6,341.7 414.7,345.7"/>
<polygon fill="#50ffaf" points="575.9,333.3 581.8,331.7 578.1,329.9 572.2,331.5"/>
<polygon fill="#00ffff" points="261.1,366.9 267,369 263.2,364.1 257.3,362.7"/>
<polygon fill="#00dfff" points="443.8,360.8 449.7,351.7 445.9,341.2 440,349.3"/>
<polygon fill="#0080ff" points="296,385.6 301.9,383.4 298.2,380.5 292.3,382.4"/>
<polygon fill="#20ffdf" points="327.2,357.6 333.1,345.8 329.3,348.9 323.4,360.2"/>
<polygon fill="#50ffaf" points="185.3,356.2 191.2,354.7 187.5,352.9 181.6,354.5"/>
<polygon fill="#dfff20" points="383.6,321.2 389.5,327.9 385.7,327.1 379.8,321"/>
<polygon fill="#50ffaf" points="509.9,338.5 515.8,336.3 512,334.2 506.1,336.3"/>
<polygon fill="#50ffaf" points="210.6,355.5 216.5,354.2 212.7,352.2 206.8,353.5"/>
<polygon fill="#40ffbf" points="235.8,357.4 241.7,357.4 238,354.3 232.1,354.7"/>
<polygon fill="#10ffef" points="469,351.3 474.9,344.6 471.1,338.7 465.2,344.7"/>
<polygon fill="#50ffaf" points="535.1,336.2 541,334.5 537.2,332.7 531.3,334.4"/>
<polygon fill="#00cfff" points="270.8,373.5 276.7,375.9 272.9,370.9 267,369"/>
<polygon fill="#00cfff" points="428.2,364.7 434.1,357.5 430.3,345.7 424.4,352.2"/>
<polygon fill="#ffef00" points="358.3,313.7 364.2,313.7 360.5,317.1 354.6,317.8"/>
<polygon fill="#afff50" points="342.8,330.6 348.7,322.4 344.9,326.5 339,335"/>
<polygon fill="#50ffaf" points="560.4,334.7 566.3,333.1 562.5,331.4 556.6,333"/>
<polygon fill="#9fff60" points="393.3,331.4 399.2,336.7 395.4,332.8 389.5,327.9"/>
<polygon fill="#00dfff" points="453.4,361.4 459.3,352.3 455.6,343.6 449.7,351.7"/>
<polygon fill="#40ffbf" points="494.3,342.4 500.2,339 496.4,336.2 490.5,339.4"/>
<polygon fill="#50ffaf" points="195,356.5 200.9,355 197.1,353.2 191.2,354.7"/>
<polygon fill="#00afff" points="280.5,380.2 286.4,382.1 282.6,377.6 276.7,375.9"/>
<polygon fill="#0080ff" points="305.7,384.5 311.6,378.9 307.8,378.4 301.9,383.4"/>
<polygon fill="#30ffcf" points="245.5,360.5 251.4,361.4 247.6,357.7 241.7,357.4"/>
<polygon fill="#50ffaf" points="402.9,344.3 408.8,346.7 405.1,339.1 399.2,336.7"/>
<polygon fill="#50ffaf" points="519.5,338.2 525.4,336.2 521.7,334.3 515.8,336.3"/>
<polygon fill="#50ffaf" points="220.3,356.3 226.2,355.4 222.4,353.1 216.5,354.2"/>
<polygon fill="#00afff" points="437.9,369.9 443.8,360.8 440,349.3 434.1,357.5"/>
<polygon fill="#00dfff" points="321.3,368.6 327.2,357.6 323.4,360.2 317.5,370.6"/>
<polygon fill="#50ffaf" points="544.8,336.3 550.7,334.6 546.9,332.9 541,334.5"/>
<polygon fill="#20ffdf" points="478.7,349.3 484.6,343.7 480.8,339.5 474.9,344.6"/>
<polygon fill="#00ffff" points="412.6,357.8 418.5,356.5 414.7,345.7 408.8,346.7"/>
<polygon fill="#ffdf00" points="368,310.8 373.9,315 370.1,317.1 364.2,313.7"/>
<polygon fill="#50ffaf" points="570,334.9 575.9,333.3 572.2,331.5 566.3,333.1"/>
<polygon fill="#008fff" points="290.1,385.4 296,385.6 292.3,382.4 286.4,382.1"/>
<polygon fill="#00dfff" points="463.1,359.6 469,351.3 465.2,344.7 459.3,352.3"/>
<polygon fill="#10ffef" points="255.2,365 261.1,366.9 257.3,362.7 251.4,361.4"/>
<polygon fill="#40ffbf" points="504,341.3 509.9,338.5 506.1,336.3 500.2,339"/>
<polygon fill="#80ff80" points="336.9,341.5 342.8,330.6 339,335 333.1,345.8"/>
<polygon fill="#00afff" points="422.3,369.8 428.2,364.7 424.4,352.2 418.5,356.5"/>
<polygon fill="#50ffaf" points="204.7,356.8 210.6,355.5 206.8,353.5 200.9,355"/>
<polygon fill="#009fff" points="447.5,371.4 453.4,361.4 449.7,351.7 443.8,360.8"/>
<polygon fill="#40ffbf" points="229.9,357.7 235.8,357.4 232.1,354.7 226.2,355.4"/>
<polygon fill="#50ffaf" points="529.2,338 535.1,336.2 531.3,334.4 525.4,336.2"/>
<polygon fill="#ffff00" points="352.4,317.7 358.3,313.7 354.6,317.8 348.7,322.4"/>
<polygon fill="#ffef00" points="377.7,314.5 383.6,321.2 379.8,321 373.9,315"/>
<polygon fill="#50ffaf" points="554.5,336.4 560.4,334.7 556.6,333 550.7,334.6"/>
<polygon fill="#00efff" points="264.9,370.8 270.8,373.5 267,369 261.1,366.9"/>
<polygon fill="#30ffcf" points="488.4,346.9 494.3,342.4 490.5,339.4 484.6,343.7"/>
<polygon fill="#00afff" points="315.4,377.6 321.3,368.6 317.5,370.6 311.6,378.9"/>
<polygon fill="#0080ff" points="432,378.1 437.9,369.9 434.1,357.5 428.2,364.7"/>
<polygon fill="#50ffaf" points="579.7,335 585.6,333.4 581.8,331.7 575.9,333.3"/>
<polygon fill="#0080ff" points="299.8,387.2 305.7,384.5 301.9,383.4 296,385.6"/>
<polygon fill="#50ffaf" points="189.1,358 195,356.5 191.2,354.7 185.3,356.2"/>
<polygon fill="#50ffaf" points="513.6,340.5 519.5,338.2 515.8,336.3 509.9,338.5"/>
<polygon fill="#cfff30" points="387.4,324.3 393.3,331.4 389.5,327.9 383.6,321.2"/>
<polygon fill="#00ffff" points="472.8,356.4 478.7,349.3 474.9,344.6 469,351.3"/>
<polygon fill="#30ffcf" points="239.6,360 245.5,360.5 241.7,357.4 235.8,357.4"/>
<polygon fill="#50ffaf" points="214.4,357.4 220.3,356.3 216.5,354.2 210.6,355.5"/>
<polygon fill="#00bfff" points="274.6,377.3 280.5,380.2 276.7,375.9 270.8,373.5"/>
<polygon fill="#40ffbf" points="331,353.4 336.9,341.5 333.1,345.8 327.2,357.6"/>
<polygon fill="#00afff" points="457.2,369.4 463.1,359.6 459.3,352.3 453.4,361.4"/>
<polygon fill="#50ffaf" points="538.9,338 544.8,336.3 541,334.5 535.1,336.2"/>
<polygon fill="#80ff80" points="397,338.9 402.9,344.3 399.2,336.7 393.3,331.4"/>
<polygon fill="#50ffaf" points="564.1,336.5 570,334.9 566.3,333.1 560.4,334.7"/>
<polygon fill="#0070ff" points="441.6,381.5 447.5,371.4 443.8,360.8 437.9,369.9"/>
<polygon fill="#10ffef" points="406.7,355.8 412.6,357.8 408.8,346.7 402.9,344.3"/>
<polygon fill="#40ffbf" points="498.1,344.7 504,341.3 500.2,339 494.3,342.4"/>
<polygon fill="#ffcf00" points="362.1,310 368,310.8 364.2,313.7 358.3,313.7"/>
<polygon fill="#00afff" points="416.4,371.9 422.3,369.8 418.5,356.5 412.6,357.8"/>
<polygon fill="#009fff" points="284.2,383.4 290.1,385.4 286.4,382.1 280.5,380.2"/>
<polygon fill="#dfff20" points="346.5,325.4 352.4,317.7 348.7,322.4 342.8,330.6"/>
<polygon fill="#20ffdf" points="249.3,363.6 255.2,365 251.4,361.4 245.5,360.5"/>
<polygon fill="#50ffaf" points="198.8,358.3 204.7,356.8 200.9,355 195,356.5"/>
<polygon fill="#50ffaf" points="523.3,339.9 529.2,338 525.4,336.2 519.5,338.2"/>
<polygon fill="#50ffaf" points="224,358.4 229.9,357.7 226.2,355.4 220.3,356.3"/>
<polygon fill="#008fff" points="309.5,383.9 315.4,377.6 311.6,378.9 305.7,384.5"/>
<polygon fill="#10ffef" points="482.5,352.6 488.4,346.9 484.6,343.7 478.7,349.3"/>
<polygon fill="#0070ff" points="426.1,384.3 432,378.1 428.2,364.7 422.3,369.8"/>
<polygon fill="#50ffaf" points="548.6,338 554.5,336.4 550.7,334.6 544.8,336.3"/>
<polygon fill="#00ffff" points="325.1,364.9 331,353.4 327.2,357.6 321.3,368.6"/>
<polygon fill="#00cfff" points="466.9,365 472.8,356.4 469,351.3 463.1,359.6"/>
<polygon fill="#50ffaf" points="573.8,336.6 579.7,335 575.9,333.3 570,334.9"/>
<polygon fill="#0080ff" points="451.3,380.1 457.2,369.4 453.4,361.4 447.5,371.4"/>
<polygon fill="#00ffff" points="259,368.4 264.9,370.8 261.1,366.9 255.2,365"/>
<polygon fill="#008fff" points="293.9,387.3 299.8,387.2 296,385.6 290.1,385.4"/>
<polygon fill="#ffbf00" points="371.8,309.5 377.7,314.5 373.9,315 368,310.8"/>
<polygon fill="#40ffbf" points="507.7,343.2 513.6,340.5 509.9,338.5 504,341.3"/>
<polygon fill="#0040ff" points="435.7,390.8 441.6,381.5 437.9,369.9 432,378.1"/>
<polygon fill="#50ffaf" points="208.5,358.7 214.4,357.4 210.6,355.5 204.7,356.8"/>
<polygon fill="#40ffbf" points="233.7,360.1 239.6,360 235.8,357.4 229.9,357.7"/>
<polygon fill="#50ffaf" points="533,339.7 538.9,338 535.1,336.2 529.2,338"/>
<polygon fill="#afff50" points="340.6,336.1 346.5,325.4 342.8,330.6 336.9,341.5"/>
<polygon fill="#00dfff" points="268.7,374.3 274.6,377.3 270.8,373.5 264.9,370.8"/>
<polygon fill="#50ffaf" points="558.2,338.1 564.1,336.5 560.4,334.7 554.5,336.4"/>
<polygon fill="#ffef00" points="381.5,317 387.4,324.3 383.6,321.2 377.7,314.5"/>
<polygon fill="#20ffdf" points="492.2,349.1 498.1,344.7 494.3,342.4 488.4,346.9"/>
<polygon fill="#ffcf00" points="356.2,313.1 362.1,310 358.3,313.7 352.4,317.7"/>
<polygon fill="#50ffaf" points="583.5,336.8 589.4,335.2 585.6,333.4 579.7,335"/>
<polygon fill="#afff50" points="391.1,331.5 397,338.9 393.3,331.4 387.4,324.3"/>
<polygon fill="#40ffbf" points="400.8,350.6 406.7,355.8 402.9,344.3 397,338.9"/>
<polygon fill="#00efff" points="476.6,359.7 482.5,352.6 478.7,349.3 472.8,356.4"/>
<polygon fill="#00bfff" points="410.5,370.7 416.4,371.9 412.6,357.8 406.7,355.8"/>
<polygon fill="#00cfff" points="319.2,374.5 325.1,364.9 321.3,368.6 315.4,377.6"/>
<polygon fill="#008fff" points="303.6,387.1 309.5,383.9 305.7,384.5 299.8,387.2"/>
<polygon fill="#50ffaf" points="192.9,359.8 198.8,358.3 195,356.5 189.1,358"/>
<polygon fill="#009fff" points="461,375.1 466.9,365 463.1,359.6 457.2,369.4"/>
<polygon fill="#50ffaf" points="517.4,342.2 523.3,339.9 519.5,338.2 513.6,340.5"/>
<polygon fill="#30ffcf" points="243.4,362.7 249.3,363.6 245.5,360.5 239.6,360"/>
<polygon fill="#0040ff" points="445.4,391 451.3,380.1 447.5,371.4 441.6,381.5"/>
<polygon fill="#0060ff" points="420.2,387.5 426.1,384.3 422.3,369.8 416.4,371.9"/>
<polygon fill="#00bfff" points="278.3,380.4 284.2,383.4 280.5,380.2 274.6,377.3"/>
<polygon fill="#50ffaf" points="218.1,359.4 224,358.4 220.3,356.3 214.4,357.4"/>
<polygon fill="#50ffaf" points="542.7,339.7 548.6,338 544.8,336.3 538.9,338"/>
<polygon fill="#0020ff" points="429.8,398.1 435.7,390.8 432,378.1 426.1,384.3"/>
<polygon fill="#50ffaf" points="567.9,338.2 573.8,336.6 570,334.9 564.1,336.5"/>
<polygon fill="#70ff8f" points="334.7,348 340.6,336.1 336.9,341.5 331,353.4"/>
<polygon fill="#40ffbf" points="501.8,346.5 507.7,343.2 504,341.3 498.1,344.7"/>
<polygon fill="#009fff" points="288,385.5 293.9,387.3 290.1,385.4 284.2,383.4"/>
<polygon fill="#20ffdf" points="253.1,366.5 259,368.4 255.2,365 249.3,363.6"/>
<polygon fill="#50ffaf" points="202.6,360.1 208.5,358.7 204.7,356.8 198.8,358.3"/>
<polygon fill="#ffaf00" points="365.9,307.7 371.8,309.5 368,310.8 362.1,310"/>
<polygon fill="#50ffaf" points="527.1,341.6 533,339.7 529.2,338 523.3,339.9"/>
<polygon fill="#40ffbf" points="227.8,360.6 233.7,360.1 229.9,357.7 224,358.4"/>
<polygon fill="#10ffef" points="486.3,354.7 492.2,349.1 488.4,346.9 482.5,352.6"/>
<polygon fill="#0060ff" points="455.1,386.1 461,375.1 457.2,369.4 451.3,380.1"/>
<polygon fill="#ffef00" points="350.3,320.2 356.2,313.1 352.4,317.7 346.5,325.4"/>
<polygon fill="#50ffaf" points="552.3,339.7 558.2,338.1 554.5,336.4 548.6,338"/>
<polygon fill="#00bfff" points="470.7,368.3 476.6,359.7 472.8,356.4 466.9,365"/>
<polygon fill="#00afff" points="313.3,381.4 319.2,374.5 315.4,377.6 309.5,383.9"/>
<polygon fill="#0010ff" points="439.5,401.2 445.4,391 441.6,381.5 435.7,390.8"/>
<polygon fill="#00ffff" points="262.8,371.5 268.7,374.3 264.9,370.8 259,368.4"/>
<polygon fill="#50ffaf" points="577.6,338.4 583.5,336.8 579.7,335 573.8,336.6"/>
<polygon fill="#008fff" points="297.7,387.7 303.6,387.1 299.8,387.2 293.9,387.3"/>
<polygon fill="#40ffbf" points="511.5,344.7 517.4,342.2 513.6,340.5 507.7,343.2"/>
<polygon fill="#ffbf00" points="375.6,311.2 381.5,317 377.7,314.5 371.8,309.5"/>
<polygon fill="#30ffcf" points="328.8,359.7 334.7,348 331,353.4 325.1,364.9"/>
<polygon fill="#0070ff" points="414.3,387.3 420.2,387.5 416.4,371.9 410.5,370.7"/>
<polygon fill="#50ffaf" points="212.2,360.6 218.1,359.4 214.4,357.4 208.5,358.7"/>
<polygon fill="#40ffbf" points="237.5,362.4 243.4,362.7 239.6,360 233.7,360.1"/>
<polygon fill="#00efff" points="404.6,366.1 410.5,370.7 406.7,355.8 400.8,350.6"/>
<polygon fill="#50ffaf" points="536.8,341.4 542.7,339.7 538.9,338 533,339.7"/>
<polygon fill="#0010ff" points="423.9,402.6 429.8,398.1 426.1,384.3 420.2,387.5"/>
<polygon fill="#efff10" points="385.2,323.7 391.1,331.5 387.4,324.3 381.5,317"/>
<polygon fill="#70ff8f" points="394.9,343.3 400.8,350.6 397,338.9 391.1,331.5"/>
<polygon fill="#00dfff" points="272.4,377.1 278.3,380.4 274.6,377.3 268.7,374.3"/>
<polygon fill="#50ffaf" points="562,339.8 567.9,338.2 564.1,336.5 558.2,338.1"/>
<polygon fill="#30ffcf" points="495.9,350.7 501.8,346.5 498.1,344.7 492.2,349.1"/>
<polygon fill="#0020ff" points="449.2,397.4 455.1,386.1 451.3,380.1 445.4,391"/>
<polygon fill="#50ffaf" points="587.3,338.5 593.2,336.9 589.4,335.2 583.5,336.8"/>
<polygon fill="#cfff30" points="344.4,330.3 350.3,320.2 346.5,325.4 340.6,336.1"/>
<polygon fill="#00efff" points="480.4,361.5 486.3,354.7 482.5,352.6 476.6,359.7"/>
<polygon fill="#008fff" points="464.8,378.3 470.7,368.3 466.9,365 461,375.1"/>
<polygon fill="#0000df" points="433.6,409.5 439.5,401.2 435.7,390.8 429.8,398.1"/>
<polygon fill="#50ffaf" points="196.7,361.6 202.6,360.1 198.8,358.3 192.9,359.8"/>
<polygon fill="#30ffcf" points="247.2,365.3 253.1,366.5 249.3,363.6 243.4,362.7"/>
<polygon fill="#50ffaf" points="521.2,343.7 527.1,341.6 523.3,339.9 517.4,342.2"/>
<polygon fill="#ffaf00" points="360,309.9 365.9,307.7 362.1,310 356.2,313.1"/>
<polygon fill="#00bfff" points="282.1,382.6 288,385.5 284.2,383.4 278.3,380.4"/>
<polygon fill="#009fff" points="307.4,385.4 313.3,381.4 309.5,383.9 303.6,387.1"/>
<polygon fill="#50ffaf" points="221.9,361.4 227.8,360.6 224,358.4 218.1,359.4"/>
<polygon fill="#00efff" points="322.9,369.8 328.8,359.7 325.1,364.9 319.2,374.5"/>
<polygon fill="#50ffaf" points="546.4,341.4 552.3,339.7 548.6,338 542.7,339.7"/>
<polygon fill="#50ffaf" points="571.7,340 577.6,338.4 573.8,336.6 567.9,338.2"/>
<polygon fill="#40ffbf" points="505.6,347.9 511.5,344.7 507.7,343.2 501.8,346.5"/>
<polygon fill="#10ffef" points="256.9,369.2 262.8,371.5 259,368.4 253.1,366.5"/>
<polygon fill="#009fff" points="291.8,386.4 297.7,387.7 293.9,387.3 288,385.5"/>
<polygon fill="#0000ef" points="443.3,408.1 449.2,397.4 445.4,391 439.5,401.2"/>
<polygon fill="#50ffaf" points="206.3,361.9 212.2,360.6 208.5,358.7 202.6,360.1"/>
<polygon fill="#40ffbf" points="231.6,362.7 237.5,362.4 233.7,360.1 227.8,360.6"/>
<polygon fill="#0010ff" points="418,403.6 423.9,402.6 420.2,387.5 414.3,387.3"/>
<polygon fill="#50ffaf" points="530.9,343.3 536.8,341.4 533,339.7 527.1,341.6"/>
<polygon fill="#9fff60" points="338.5,341.9 344.4,330.3 340.6,336.1 334.7,348"/>
<polygon fill="#ffaf00" points="369.7,308.3 375.6,311.2 371.8,309.5 365.9,307.7"/>
<polygon fill="#0050ff" points="458.9,389.2 464.8,378.3 461,375.1 455.1,386.1"/>
<polygon fill="#10ffef" points="490,355.8 495.9,350.7 492.2,349.1 486.3,354.7"/>
<polygon fill="#008fff" points="408.4,383.7 414.3,387.3 410.5,370.7 404.6,366.1"/>
<polygon fill="#00bfff" points="474.5,369.7 480.4,361.5 476.6,359.7 470.7,368.3"/>
<polygon fill="#50ffaf" points="556.1,341.5 562,339.8 558.2,338.1 552.3,339.7"/>
<polygon fill="#0000cf" points="427.7,415.1 433.6,409.5 429.8,398.1 423.9,402.6"/>
<polygon fill="#20ffdf" points="398.7,359.1 404.6,366.1 400.8,350.6 394.9,343.3"/>
<polygon fill="#00efff" points="266.5,374.1 272.4,377.1 268.7,374.3 262.8,371.5"/>
<polygon fill="#50ffaf" points="581.4,340.1 587.3,338.5 583.5,336.8 577.6,338.4"/>
<polygon fill="#00cfff" points="317,377.3 322.9,369.8 319.2,374.5 313.3,381.4"/>
<polygon fill="#ffdf00" points="379.3,317.1 385.2,323.7 381.5,317 375.6,311.2"/>
<polygon fill="#ffcf00" points="354.1,316 360,309.9 356.2,313.1 350.3,320.2"/>
<polygon fill="#afff50" points="389,335.2 394.9,343.3 391.1,331.5 385.2,323.7"/>
<polygon fill="#40ffbf" points="515.3,346.2 521.2,343.7 517.4,342.2 511.5,344.7"/>
<polygon fill="#009fff" points="301.5,386.7 307.4,385.4 303.6,387.1 297.7,387.7"/>
<polygon fill="#30ffcf" points="241.3,364.7 247.2,365.3 243.4,362.7 237.5,362.4"/>
<polygon fill="#50ffaf" points="216,362.5 221.9,361.4 218.1,359.4 212.2,360.6"/>
<polygon fill="#50ffaf" points="540.5,343.1 546.4,341.4 542.7,339.7 536.8,341.4"/>
<polygon fill="#00cfff" points="276.2,379.3 282.1,382.6 278.3,380.4 272.4,377.1"/>
<polygon fill="#60ff9f" points="332.6,353.6 338.5,341.9 334.7,348 328.8,359.7"/>
<polygon fill="#0000bf" points="437.4,417.1 443.3,408.1 439.5,401.2 433.6,409.5"/>
<polygon fill="#50ffaf" points="565.8,341.6 571.7,340 567.9,338.2 562,339.8"/>
<polygon fill="#0020ff" points="453,400.4 458.9,389.2 455.1,386.1 449.2,397.4"/>
<polygon fill="#30ffcf" points="499.7,351.7 505.6,347.9 501.8,346.5 495.9,350.7"/>
<polygon fill="#50ffaf" points="591,340.2 596.9,338.6 593.2,336.9 587.3,338.5"/>
<polygon fill="#008fff" points="468.6,379.2 474.5,369.7 470.7,368.3 464.8,378.3"/>
<polygon fill="#00efff" points="484.1,362.1 490,355.8 486.3,354.7 480.4,361.5"/>
<polygon fill="#20ffdf" points="251,367.7 256.9,369.2 253.1,366.5 247.2,365.3"/>
<polygon fill="#50ffaf" points="200.4,363.3 206.3,361.9 202.6,360.1 196.7,361.6"/>
<polygon fill="#50ffaf" points="525,345.3 530.9,343.3 527.1,341.6 521.2,343.7"/>
<polygon fill="#00bfff" points="285.9,383.8 291.8,386.4 288,385.5 282.1,382.6"/>
<polygon fill="#50ffaf" points="225.7,363.4 231.6,362.7 227.8,360.6 221.9,361.4"/>
<polygon fill="#ff9f00" points="363.8,309.3 369.7,308.3 365.9,307.7 360,309.9"/>
<polygon fill="#0030ff" points="412.1,401.1 418,403.6 414.3,387.3 408.4,383.7"/>
<polygon fill="#ffff00" points="348.2,325.2 354.1,316 350.3,320.2 344.4,330.3"/>
<polygon fill="#50ffaf" points="550.2,343.1 556.1,341.5 552.3,339.7 546.4,341.4"/>
<polygon fill="#0000bf" points="421.8,417.3 427.7,415.1 423.9,402.6 418,403.6"/>
<polygon fill="#00bfff" points="311.1,382.1 317,377.3 313.3,381.4 307.4,385.4"/>
<polygon fill="#50ffaf" points="575.5,341.7 581.4,340.1 577.6,338.4 571.7,340"/>
<polygon fill="#00bfff" points="402.5,377.3 408.4,383.7 404.6,366.1 398.7,359.1"/>
<polygon fill="#10ffef" points="260.6,371.6 266.5,374.1 262.8,371.5 256.9,369.2"/>
<polygon fill="#20ffdf" points="326.7,364 332.6,353.6 328.8,359.7 322.9,369.8"/>
<polygon fill="#40ffbf" points="509.4,349 515.3,346.2 511.5,344.7 505.6,347.9"/>
<polygon fill="#0000df" points="447.1,411.1 453,400.4 449.2,397.4 443.3,408.1"/>
<polygon fill="#00009f" points="431.5,423.5 437.4,417.1 433.6,409.5 427.7,415.1"/>
<polygon fill="#00afff" points="295.6,385.9 301.5,386.7 297.7,387.7 291.8,386.4"/>
<polygon fill="#50ffaf" points="210.1,363.7 216,362.5 212.2,360.6 206.3,361.9"/>
<polygon fill="#60ff9f" points="392.8,350.9 398.7,359.1 394.9,343.3 389,335.2"/>
<polygon fill="#40ffbf" points="235.4,364.8 241.3,364.7 237.5,362.4 231.6,362.7"/>
<polygon fill="#ffbf00" points="373.4,313.1 379.3,317.1 375.6,311.2 369.7,308.3"/>
<polygon fill="#50ffaf" points="534.6,344.9 540.5,343.1 536.8,341.4 530.9,343.3"/>
<polygon fill="#0060ff" points="462.7,389.5 468.6,379.2 464.8,378.3 458.9,389.2"/>
<polygon fill="#20ffdf" points="493.8,356.3 499.7,351.7 495.9,350.7 490,355.8"/>
<polygon fill="#efff10" points="383.1,327.8 389,335.2 385.2,323.7 379.3,317.1"/>
<polygon fill="#50ffaf" points="559.9,343.2 565.8,341.6 562,339.8 556.1,341.5"/>
<polygon fill="#00cfff" points="478.2,369.6 484.1,362.1 480.4,361.5 474.5,369.7"/>
<polygon fill="#00efff" points="270.3,376.2 276.2,379.3 272.4,377.1 266.5,374.1"/>
<polygon fill="#bfff40" points="342.3,336.2 348.2,325.2 344.4,330.3 338.5,341.9"/>
<polygon fill="#50ffaf" points="585.1,341.8 591,340.2 587.3,338.5 581.4,340.1"/>
<polygon fill="#50ffaf" points="519.1,347.5 525,345.3 521.2,343.7 515.3,346.2"/>
<polygon fill="#30ffcf" points="245.1,366.9 251,367.7 247.2,365.3 241.3,364.7"/>
<polygon fill="#ffbf00" points="357.9,314 363.8,309.3 360,309.9 354.1,316"/>
<polygon fill="#50ffaf" points="219.8,364.3 225.7,363.4 221.9,361.4 216,362.5"/>
<polygon fill="#00ffff" points="320.8,372.2 326.7,364 322.9,369.8 317,377.3"/>
<polygon fill="#0000af" points="441.2,420.3 447.1,411.1 443.3,408.1 437.4,417.1"/>
<polygon fill="#00bfff" points="305.2,384.3 311.1,382.1 307.4,385.4 301.5,386.7"/>
<polygon fill="#50ffaf" points="544.3,344.8 550.2,343.1 546.4,341.4 540.5,343.1"/>
<polygon fill="#00dfff" points="280,380.7 285.9,383.8 282.1,382.6 276.2,379.3"/>
<polygon fill="#0000df" points="415.9,415.9 421.8,417.3 418,403.6 412.1,401.1"/>
<polygon fill="#50ffaf" points="569.6,343.3 575.5,341.7 571.7,340 565.8,341.6"/>
<polygon fill="#0030ff" points="456.8,400.1 462.7,389.5 458.9,389.2 453,400.4"/>
<polygon fill="#0050ff" points="406.2,395.4 412.1,401.1 408.4,383.7 402.5,377.3"/>
<polygon fill="#30ffcf" points="503.5,352.4 509.4,349 505.6,347.9 499.7,351.7"/>
<polygon fill="#50ffaf" points="594.8,342 600.7,340.4 596.9,338.6 591,340.2"/>
<polygon fill="#00008f" points="425.6,426.7 431.5,423.5 427.7,415.1 421.8,417.3"/>
<polygon fill="#20ffdf" points="254.7,369.9 260.6,371.6 256.9,369.2 251,367.7"/>
<polygon fill="#009fff" points="472.3,378.2 478.2,369.6 474.5,369.7 468.6,379.2"/>
<polygon fill="#8fff70" points="336.4,347.6 342.3,336.2 338.5,341.9 332.6,353.6"/>
<polygon fill="#00ffff" points="487.9,361.9 493.8,356.3 490,355.8 484.1,362.1"/>
<polygon fill="#50ffaf" points="204.2,365.1 210.1,363.7 206.3,361.9 200.4,363.3"/>
<polygon fill="#50ffaf" points="528.7,346.8 534.6,344.9 530.9,343.3 525,345.3"/>
<polygon fill="#00efff" points="396.6,369.1 402.5,377.3 398.7,359.1 392.8,350.9"/>
<polygon fill="#40ffbf" points="229.5,365.3 235.4,364.8 231.6,362.7 225.7,363.4"/>
<polygon fill="#00bfff" points="289.7,383.9 295.6,385.9 291.8,386.4 285.9,383.8"/>
<polygon fill="#ffaf00" points="367.5,312.5 373.4,313.1 369.7,308.3 363.8,309.3"/>
<polygon fill="#50ffaf" points="554,344.8 559.9,343.2 556.1,341.5 550.2,343.1"/>
<polygon fill="#50ffaf" points="579.2,343.4 585.1,341.8 581.4,340.1 575.5,341.7"/>
<polygon fill="#9fff60" points="386.9,342.7 392.8,350.9 389,335.2 383.1,327.8"/>
<polygon fill="#ffdf00" points="352,322 357.9,314 354.1,316 348.2,325.2"/>
<polygon fill="#10ffef" points="264.4,373.7 270.3,376.2 266.5,374.1 260.6,371.6"/>
<polygon fill="#ffef00" points="377.2,322.5 383.1,327.8 379.3,317.1 373.4,313.1"/>
<polygon fill="#00008f" points="435.3,427.1 441.2,420.3 437.4,417.1 431.5,423.5"/>
<polygon fill="#40ffbf" points="513.2,350.1 519.1,347.5 515.3,346.2 509.4,349"/>
<polygon fill="#00dfff" points="314.9,377.8 320.8,372.2 317,377.3 311.1,382.1"/>
<polygon fill="#0000ef" points="450.9,410.2 456.8,400.1 453,400.4 447.1,411.1"/>
<polygon fill="#50ffaf" points="213.9,365.6 219.8,364.3 216,362.5 210.1,363.7"/>
<polygon fill="#40ffbf" points="239.2,366.8 245.1,366.9 241.3,364.7 235.4,364.8"/>
<polygon fill="#50ffaf" points="538.4,346.5 544.3,344.8 540.5,343.1 534.6,344.9"/>
<polygon fill="#00bfff" points="299.3,384.4 305.2,384.3 301.5,386.7 295.6,385.9"/>
<polygon fill="#50ffaf" points="330.5,358.1 336.4,347.6 332.6,353.6 326.7,364"/>
<polygon fill="#0070ff" points="466.4,387.5 472.3,378.2 468.6,379.2 462.7,389.5"/>
<polygon fill="#20ffdf" points="497.6,356.5 503.5,352.4 499.7,351.7 493.8,356.3"/>
<polygon fill="#50ffaf" points="563.7,344.9 569.6,343.3 565.8,341.6 559.9,343.2"/>
<polygon fill="#00efff" points="274.1,377.7 280,380.7 276.2,379.3 270.3,376.2"/>
<polygon fill="#00dfff" points="482,368.5 487.9,361.9 484.1,362.1 478.2,369.6"/>
<polygon fill="#0000ff" points="410,411.2 415.9,415.9 412.1,401.1 406.2,395.4"/>
<polygon fill="#50ffaf" points="588.9,343.6 594.8,342 591,340.2 585.1,341.8"/>
<polygon fill="#00009f" points="419.7,426.3 425.6,426.7 421.8,417.3 415.9,415.9"/>
<polygon fill="#50ffaf" points="522.8,348.9 528.7,346.8 525,345.3 519.1,347.5"/>
<polygon fill="#30ffcf" points="248.8,369 254.7,369.9 251,367.7 245.1,366.9"/>
<polygon fill="#efff10" points="346.1,332 352,322 348.2,325.2 342.3,336.2"/>
<polygon fill="#008fff" points="400.3,387.5 406.2,395.4 402.5,377.3 396.6,369.1"/>
<polygon fill="#50ffaf" points="223.6,366.2 229.5,365.3 225.7,363.4 219.8,364.3"/>
<polygon fill="#ffbf00" points="361.6,315.6 367.5,312.5 363.8,309.3 357.9,314"/>
<polygon fill="#50ffaf" points="548.1,346.5 554,344.8 550.2,343.1 544.3,344.8"/>
<polygon fill="#0000bf" points="445,419.2 450.9,410.2 447.1,411.1 441.2,420.3"/>
<polygon fill="#00dfff" points="283.8,381.2 289.7,383.9 285.9,383.8 280,380.7"/>
<polygon fill="#00008f" points="429.4,431 435.3,427.1 431.5,423.5 425.6,426.7"/>
<polygon fill="#50ffaf" points="573.3,345 579.2,343.4 575.5,341.7 569.6,343.3"/>
<polygon fill="#00dfff" points="309,380.9 314.9,377.8 311.1,382.1 305.2,384.3"/>
<polygon fill="#40ffbf" points="507.3,353.1 513.2,350.1 509.4,349 503.5,352.4"/>
<polygon fill="#30ffcf" points="390.7,360.4 396.6,369.1 392.8,350.9 386.9,342.7"/>
<polygon fill="#30ffcf" points="324.6,366.7 330.5,358.1 326.7,364 320.8,372.2"/>
<polygon fill="#0040ff" points="460.5,397.1 466.4,387.5 462.7,389.5 456.8,400.1"/>
<polygon fill="#20ffdf" points="258.5,371.9 264.4,373.7 260.6,371.6 254.7,369.9"/>
<polygon fill="#ffcf00" points="371.3,320.2 377.2,322.5 373.4,313.1 367.5,312.5"/>
<polygon fill="#50ffaf" points="208,366.9 213.9,365.6 210.1,363.7 204.2,365.1"/>
<polygon fill="#cfff30" points="381,336.1 386.9,342.7 383.1,327.8 377.2,322.5"/>
<polygon fill="#10ffef" points="491.7,361.3 497.6,356.5 493.8,356.3 487.9,361.9"/>
<polygon fill="#50ffaf" points="532.5,348.3 538.4,346.5 534.6,344.9 528.7,346.8"/>
<polygon fill="#40ffbf" points="233.3,367.2 239.2,366.8 235.4,364.8 229.5,365.3"/>
<polygon fill="#00bfff" points="476.1,376 482,368.5 478.2,369.6 472.3,378.2"/>
<polygon fill="#00cfff" points="293.4,383.1 299.3,384.4 295.6,385.9 289.7,383.9"/>
<polygon fill="#50ffaf" points="557.8,346.5 563.7,344.9 559.9,343.2 554,344.8"/>
<polygon fill="#afff50" points="340.2,342.7 346.1,332 342.3,336.2 336.4,347.6"/>
<polygon fill="#50ffaf" points="583,345.2 588.9,343.6 585.1,341.8 579.2,343.4"/>
<polygon fill="#10ffef" points="268.2,375.3 274.1,377.7 270.3,376.2 264.4,373.7"/>
<polygon fill="#00009f" points="439.1,426 445,419.2 441.2,420.3 435.3,427.1"/>
<polygon fill="#ffcf00" points="355.7,321.8 361.6,315.6 357.9,314 352,322"/>
<polygon fill="#40ffbf" points="516.9,351.2 522.8,348.9 519.1,347.5 513.2,350.1"/>
<polygon fill="#0000bf" points="413.8,422.6 419.7,426.3 415.9,415.9 410,411.2"/>
<polygon fill="#50ffaf" points="217.7,367.4 223.6,366.2 219.8,364.3 213.9,365.6"/>
<polygon fill="#40ffbf" points="242.9,368.8 248.8,369 245.1,366.9 239.2,366.8"/>
<polygon fill="#0030ff" points="404.1,403.8 410,411.2 406.2,395.4 400.3,387.5"/>
<polygon fill="#0010ff" points="454.6,406.4 460.5,397.1 456.8,400.1 450.9,410.2"/>
<polygon fill="#50ffaf" points="542.2,348.2 548.1,346.5 544.3,344.8 538.4,346.5"/>
<polygon fill="#10ffef" points="318.7,373 324.6,366.7 320.8,372.2 314.9,377.8"/>
<polygon fill="#00008f" points="423.5,431.5 429.4,431 425.6,426.7 419.7,426.3"/>
<polygon fill="#50ffaf" points="567.4,346.6 573.3,345 569.6,343.3 563.7,344.9"/>
<polygon fill="#30ffcf" points="501.4,356.6 507.3,353.1 503.5,352.4 497.6,356.5"/>
<polygon fill="#00dfff" points="303.1,381.9 309,380.9 305.2,384.3 299.3,384.4"/>
<polygon fill="#00ffff" points="277.9,378.7 283.8,381.2 280,380.7 274.1,377.7"/>
<polygon fill="#008fff" points="470.2,384.1 476.1,376 472.3,378.2 466.4,387.5"/>
<polygon fill="#00cfff" points="394.4,378.6 400.3,387.5 396.6,369.1 390.7,360.4"/>
<polygon fill="#80ff80" points="334.3,352.9 340.2,342.7 336.4,347.6 330.5,358.1"/>
<polygon fill="#00efff" points="485.8,366.9 491.7,361.3 487.9,361.9 482,368.5"/>
<polygon fill="#ffcf00" points="365.4,321.2 371.3,320.2 367.5,312.5 361.6,315.6"/>
<polygon fill="#50ffaf" points="526.6,350.3 532.5,348.3 528.7,346.8 522.8,348.9"/>
<polygon fill="#30ffcf" points="252.6,370.9 258.5,371.9 254.7,369.9 248.8,369"/>
<polygon fill="#50ffaf" points="227.4,368.1 233.3,367.2 229.5,365.3 223.6,366.2"/>
<polygon fill="#70ff8f" points="384.8,352.6 390.7,360.4 386.9,342.7 381,336.1"/>
<polygon fill="#50ffaf" points="551.9,348.2 557.8,346.5 554,344.8 548.1,346.5"/>
<polygon fill="#ffff00" points="349.8,330.3 355.7,321.8 352,322 346.1,332"/>
<polygon fill="#efff10" points="375.1,331.9 381,336.1 377.2,322.5 371.3,320.2"/>
<polygon fill="#00008f" points="433.2,430.2 439.1,426 435.3,427.1 429.4,431"/>
<polygon fill="#00efff" points="287.5,381.1 293.4,383.1 289.7,383.9 283.8,381.2"/>
<polygon fill="#50ffaf" points="577.1,346.8 583,345.2 579.2,343.4 573.3,345"/>
<polygon fill="#0000ef" points="448.7,414.7 454.6,406.4 450.9,410.2 445,419.2"/>
<polygon fill="#40ffbf" points="511,353.8 516.9,351.2 513.2,350.1 507.3,353.1"/>
<polygon fill="#20ffdf" points="262.3,373.6 268.2,375.3 264.4,373.7 258.5,371.9"/>
<polygon fill="#00ffff" points="312.8,376.9 318.7,373 314.9,377.8 309,380.9"/>
<polygon fill="#50ffaf" points="211.8,368.7 217.7,367.4 213.9,365.6 208,366.9"/>
<polygon fill="#0070ff" points="464.3,392.5 470.2,384.1 466.4,387.5 460.5,397.1"/>
<polygon fill="#40ffbf" points="237,369.1 242.9,368.8 239.2,366.8 233.3,367.2"/>
<polygon fill="#50ffaf" points="536.3,349.9 542.2,348.2 538.4,346.5 532.5,348.3"/>
<polygon fill="#50ffaf" points="328.4,361.6 334.3,352.9 330.5,358.1 324.6,366.7"/>
<polygon fill="#20ffdf" points="495.5,360.7 501.4,356.6 497.6,356.5 491.7,361.3"/>
<polygon fill="#0000ef" points="407.9,416 413.8,422.6 410,411.2 404.1,403.8"/>
<polygon fill="#00dfff" points="479.9,373.3 485.8,366.9 482,368.5 476.1,376"/>
<polygon fill="#50ffaf" points="561.5,348.3 567.4,346.6 563.7,344.9 557.8,346.5"/>
<polygon fill="#0000af" points="417.6,428.6 423.5,431.5 419.7,426.3 413.8,422.6"/>
<polygon fill="#00efff" points="297.2,381.5 303.1,381.9 299.3,384.4 293.4,383.1"/>
<polygon fill="#0070ff" points="398.2,394.9 404.1,403.8 400.3,387.5 394.4,378.6"/>
<polygon fill="#cfff30" points="343.9,339.9 349.8,330.3 346.1,332 340.2,342.7"/>
<polygon fill="#ffdf00" points="359.5,325.4 365.4,321.2 361.6,315.6 355.7,321.8"/>
<polygon fill="#10ffef" points="272,376.5 277.9,378.7 274.1,377.7 268.2,375.3"/>
<polygon fill="#50ffaf" points="520.7,352.4 526.6,350.3 522.8,348.9 516.9,351.2"/>
<polygon fill="#50ffaf" points="221.5,369.2 227.4,368.1 223.6,366.2 217.7,367.4"/>
<polygon fill="#40ffbf" points="246.7,370.6 252.6,370.9 248.8,369 242.9,368.8"/>
<polygon fill="#0000cf" points="442.8,421.2 448.7,414.7 445,419.2 439.1,426"/>
<polygon fill="#10ffef" points="388.5,369.8 394.4,378.6 390.7,360.4 384.8,352.6"/>
<polygon fill="#50ffaf" points="546,349.8 551.9,348.2 548.1,346.5 542.2,348.2"/>
<polygon fill="#00009f" points="427.3,431.3 433.2,430.2 429.4,431 423.5,431.5"/>
<polygon fill="#50ffaf" points="571.2,348.4 577.1,346.8 573.3,345 567.4,346.6"/>
<polygon fill="#0040ff" points="458.4,400.6 464.3,392.5 460.5,397.1 454.6,406.4"/>
<polygon fill="#ffff00" points="369.2,330.8 375.1,331.9 371.3,320.2 365.4,321.2"/>
<polygon fill="#30ffcf" points="505.1,356.8 511,353.8 507.3,353.1 501.4,356.6"/>
<polygon fill="#9fff60" points="378.9,346.6 384.8,352.6 381,336.1 375.1,331.9"/>
<polygon fill="#00ffff" points="281.6,379 287.5,381.1 283.8,381.2 277.9,378.7"/>
<polygon fill="#30ffcf" points="322.5,368.4 328.4,361.6 324.6,366.7 318.7,373"/>
<polygon fill="#00ffff" points="306.9,378.9 312.8,376.9 309,380.9 303.1,381.9"/>
<polygon fill="#00bfff" points="474,380.1 479.9,373.3 476.1,376 470.2,384.1"/>
<polygon fill="#10ffef" points="489.6,365.4 495.5,360.7 491.7,361.3 485.8,366.9"/>
<polygon fill="#30ffcf" points="256.4,372.6 262.3,373.6 258.5,371.9 252.6,370.9"/>
<polygon fill="#50ffaf" points="530.4,351.7 536.3,349.9 532.5,348.3 526.6,350.3"/>
<polygon fill="#50ffaf" points="231.1,369.9 237,369.1 233.3,367.2 227.4,368.1"/>
<polygon fill="#9fff60" points="338,349.3 343.9,339.9 340.2,342.7 334.3,352.9"/>
<polygon fill="#50ffaf" points="555.6,349.9 561.5,348.3 557.8,346.5 551.9,348.2"/>
<polygon fill="#ffff00" points="353.6,331.9 359.5,325.4 355.7,321.8 349.8,330.3"/>
<polygon fill="#00ffff" points="291.3,380.3 297.2,381.5 293.4,383.1 287.5,381.1"/>
<polygon fill="#40ffbf" points="514.8,354.7 520.7,352.4 516.9,351.2 511,353.8"/>
<polygon fill="#0000bf" points="436.9,425.3 442.8,421.2 439.1,426 433.2,430.2"/>
<polygon fill="#0030ff" points="402,407.5 407.9,416 404.1,403.8 398.2,394.9"/>
<polygon fill="#0000cf" points="411.7,423 417.6,428.6 413.8,422.6 407.9,416"/>
<polygon fill="#20ffdf" points="266.1,375 272,376.5 268.2,375.3 262.3,373.6"/>
<polygon fill="#50ffaf" points="215.6,370.5 221.5,369.2 217.7,367.4 211.8,368.7"/>
<polygon fill="#0020ff" points="452.5,407.9 458.4,400.6 454.6,406.4 448.7,414.7"/>
<polygon fill="#40ffbf" points="240.8,370.9 246.7,370.6 242.9,368.8 237,369.1"/>
<polygon fill="#50ffaf" points="540.1,351.5 546,349.8 542.2,348.2 536.3,349.9"/>
<polygon fill="#00bfff" points="392.3,385.6 398.2,394.9 394.4,378.6 388.5,369.8"/>
<polygon fill="#30ffcf" points="499.2,360.3 505.1,356.8 501.4,356.6 495.5,360.7"/>
<polygon fill="#20ffdf" points="316.6,373 322.5,368.4 318.7,373 312.8,376.9"/>
<polygon fill="#50ffaf" points="565.3,350 571.2,348.4 567.4,346.6 561.5,348.3"/>
<polygon fill="#0000af" points="421.4,429.4 427.3,431.3 423.5,431.5 417.6,428.6"/>
<polygon fill="#009fff" points="468.1,387.2 474,380.1 470.2,384.1 464.3,392.5"/>
<polygon fill="#ffff00" points="363.3,332.5 369.2,330.8 365.4,321.2 359.5,325.4"/>
<polygon fill="#70ff8f" points="332.1,357.8 338,349.3 334.3,352.9 328.4,361.6"/>
<polygon fill="#00efff" points="483.7,370.6 489.6,365.4 485.8,366.9 479.9,373.3"/>
<polygon fill="#50ffaf" points="382.6,362.3 388.5,369.8 384.8,352.6 378.9,346.6"/>
<polygon fill="#00ffff" points="301,379.5 306.9,378.9 303.1,381.9 297.2,381.5"/>
<polygon fill="#10ffef" points="275.7,377.3 281.6,379 277.9,378.7 272,376.5"/>
<polygon fill="#bfff40" points="373,343.2 378.9,346.6 375.1,331.9 369.2,330.8"/>
<polygon fill="#dfff20" points="347.7,339.8 353.6,331.9 349.8,330.3 343.9,339.9"/>
<polygon fill="#50ffaf" points="524.5,353.7 530.4,351.7 526.6,350.3 520.7,352.4"/>
<polygon fill="#50ffaf" points="225.2,371 231.1,369.9 227.4,368.1 221.5,369.2"/>
<polygon fill="#40ffbf" points="250.5,372.4 256.4,372.6 252.6,370.9 246.7,370.6"/>
<polygon fill="#50ffaf" points="549.7,351.5 555.6,349.9 551.9,348.2 546,349.8"/>
<polygon fill="#0000ff" points="446.6,413.8 452.5,407.9 448.7,414.7 442.8,421.2"/>
<polygon fill="#40ffbf" points="508.9,357.3 514.8,354.7 511,353.8 505.1,356.8"/>
<polygon fill="#0000bf" points="431,426.9 436.9,425.3 433.2,430.2 427.3,431.3"/>
<polygon fill="#10ffef" points="285.4,379 291.3,380.3 287.5,381.1 281.6,379"/>
<polygon fill="#0080ff" points="462.2,394.1 468.1,387.2 464.3,392.5 458.4,400.6"/>
<polygon fill="#30ffcf" points="260.2,374.1 266.1,375 262.3,373.6 256.4,372.6"/>
<polygon fill="#50ffaf" points="534.2,353.3 540.1,351.5 536.3,349.9 530.4,351.7"/>
<polygon fill="#50ffaf" points="326.2,364.6 332.1,357.8 328.4,361.6 322.5,368.4"/>
<polygon fill="#50ffaf" points="234.9,371.7 240.8,370.9 237,369.1 231.1,369.9"/>
<polygon fill="#20ffdf" points="493.3,364.1 499.2,360.3 495.5,360.7 489.6,365.4"/>
<polygon fill="#20ffdf" points="310.7,375.9 316.6,373 312.8,376.9 306.9,378.9"/>
<polygon fill="#efff10" points="357.4,336.7 363.3,332.5 359.5,325.4 353.6,331.9"/>
<polygon fill="#00dfff" points="477.8,376.2 483.7,370.6 479.9,373.3 474,380.1"/>
<polygon fill="#50ffaf" points="559.4,351.6 565.3,350 561.5,348.3 555.6,349.9"/>
<polygon fill="#0010ff" points="405.8,415.2 411.7,423 407.9,416 402,407.5"/>
<polygon fill="#afff50" points="341.8,348 347.7,339.8 343.9,339.9 338,349.3"/>
<polygon fill="#0080ff" points="396.1,398.2 402,407.5 398.2,394.9 392.3,385.6"/>
<polygon fill="#0000cf" points="415.5,424.7 421.4,429.4 417.6,428.6 411.7,423"/>
<polygon fill="#00ffff" points="386.4,377.1 392.3,385.6 388.5,369.8 382.6,362.3"/>
<polygon fill="#50ffaf" points="518.6,355.8 524.5,353.7 520.7,352.4 514.8,354.7"/>
<polygon fill="#10ffef" points="295.1,379.2 301,379.5 297.2,381.5 291.3,380.3"/>
<polygon fill="#cfff30" points="367.1,342.5 373,343.2 369.2,330.8 363.3,332.5"/>
<polygon fill="#30ffcf" points="269.8,376.1 275.7,377.3 272,376.5 266.1,375"/>
<polygon fill="#50ffaf" points="219.3,372.2 225.2,371 221.5,369.2 215.6,370.5"/>
<polygon fill="#70ff8f" points="376.7,356.9 382.6,362.3 378.9,346.6 373,343.2"/>
<polygon fill="#40ffbf" points="244.6,372.7 250.5,372.4 246.7,370.6 240.8,370.9"/>
<polygon fill="#50ffaf" points="543.8,353.2 549.7,351.5 546,349.8 540.1,351.5"/>
<polygon fill="#0000ff" points="440.7,417.8 446.6,413.8 442.8,421.2 436.9,425.3"/>
<polygon fill="#30ffcf" points="503,360.2 508.9,357.3 505.1,356.8 499.2,360.3"/>
<polygon fill="#0060ff" points="456.3,400.3 462.2,394.1 458.4,400.6 452.5,407.9"/>
<polygon fill="#0000cf" points="425.1,425.7 431,426.9 427.3,431.3 421.4,429.4"/>
<polygon fill="#40ffbf" points="320.3,369.8 326.2,364.6 322.5,368.4 316.6,373"/>
<polygon fill="#8fff70" points="335.9,355.7 341.8,348 338,349.3 332.1,357.8"/>
<polygon fill="#10ffef" points="487.4,368.4 493.3,364.1 489.6,365.4 483.7,370.6"/>
<polygon fill="#cfff30" points="351.5,342.5 357.4,336.7 353.6,331.9 347.7,339.8"/>
<polygon fill="#00bfff" points="471.9,382 477.8,376.2 474,380.1 468.1,387.2"/>
<polygon fill="#20ffdf" points="279.5,377.8 285.4,379 281.6,379 275.7,377.3"/>
<polygon fill="#50ffaf" points="528.3,355.1 534.2,353.3 530.4,351.7 524.5,353.7"/>
<polygon fill="#50ffaf" points="229,372.7 234.9,371.7 231.1,369.9 225.2,371"/>
<polygon fill="#40ffbf" points="254.3,374 260.2,374.1 256.4,372.6 250.5,372.4"/>
<polygon fill="#20ffdf" points="304.8,377.4 310.7,375.9 306.9,378.9 301,379.5"/>
<polygon fill="#50ffaf" points="553.5,353.2 559.4,351.6 555.6,349.9 549.7,351.5"/>
<polygon fill="#40ffbf" points="512.7,358 518.6,355.8 514.8,354.7 508.9,357.3"/>
<polygon fill="#cfff30" points="361.2,344.2 367.1,342.5 363.3,332.5 357.4,336.7"/>
<polygon fill="#0050ff" points="399.9,406.4 405.8,415.2 402,407.5 396.1,398.2"/>
<polygon fill="#20ffdf" points="289.2,378.6 295.1,379.2 291.3,380.3 285.4,379"/>
<polygon fill="#00bfff" points="390.2,389.2 396.1,398.2 392.3,385.6 386.4,377.1"/>
<polygon fill="#50ffaf" points="537.9,354.9 543.8,353.2 540.1,351.5 534.2,353.3"/>
<polygon fill="#30ffcf" points="263.9,375.5 269.8,376.1 266.1,375 260.2,374.1"/>
<polygon fill="#50ffaf" points="238.7,373.4 244.6,372.7 240.8,370.9 234.9,371.7"/>
<polygon fill="#0010ff" points="409.6,418 415.5,424.7 411.7,423 405.8,415.2"/>
<polygon fill="#0000ff" points="434.8,419.5 440.7,417.8 436.9,425.3 431,426.9"/>
<polygon fill="#0040ff" points="450.4,405.4 456.3,400.3 452.5,407.9 446.6,413.8"/>
<polygon fill="#30ffcf" points="497.1,363.4 503,360.2 499.2,360.3 493.3,364.1"/>
<polygon fill="#30ffcf" points="380.5,370.1 386.4,377.1 382.6,362.3 376.7,356.9"/>
<polygon fill="#8fff70" points="370.8,353.9 376.7,356.9 373,343.2 367.1,342.5"/>
<polygon fill="#70ff8f" points="330,362.3 335.9,355.7 332.1,357.8 326.2,364.6"/>
<polygon fill="#afff50" points="345.6,349.1 351.5,342.5 347.7,339.8 341.8,348"/>
<polygon fill="#00afff" points="466,387.7 471.9,382 468.1,387.2 462.2,394.1"/>
<polygon fill="#30ffcf" points="314.4,373.3 320.3,369.8 316.6,373 310.7,375.9"/>
<polygon fill="#00ffff" points="481.5,372.9 487.4,368.4 483.7,370.6 477.8,376.2"/>
<polygon fill="#50ffaf" points="522.4,357 528.3,355.1 524.5,353.7 518.6,355.8"/>
<polygon fill="#0000ef" points="419.2,422.1 425.1,425.7 421.4,429.4 415.5,424.7"/>
<polygon fill="#50ffaf" points="223.1,374 229,372.7 225.2,371 219.3,372.2"/>
<polygon fill="#30ffcf" points="273.6,377 279.5,377.8 275.7,377.3 269.8,376.1"/>
<polygon fill="#20ffdf" points="298.9,378 304.8,377.4 301,379.5 295.1,379.2"/>
<polygon fill="#40ffbf" points="248.4,374.3 254.3,374 250.5,372.4 244.6,372.7"/>
<polygon fill="#50ffaf" points="547.6,354.8 553.5,353.2 549.7,351.5 543.8,353.2"/>
<polygon fill="#40ffbf" points="506.8,360.5 512.7,358 508.9,357.3 503,360.2"/>
<polygon fill="#bfff40" points="355.3,347.7 361.2,344.2 357.4,336.7 351.5,342.5"/>
<polygon fill="#0040ff" points="444.5,409 450.4,405.4 446.6,413.8 440.7,417.8"/>
<polygon fill="#50ffaf" points="532,356.6 537.9,354.9 534.2,353.3 528.3,355.1"/>
<polygon fill="#8fff70" points="339.7,355.7 345.6,349.1 341.8,348 335.9,355.7"/>
<polygon fill="#20ffdf" points="283.3,378 289.2,378.6 285.4,379 279.5,377.8"/>
<polygon fill="#50ffaf" points="324.1,367.6 330,362.3 326.2,364.6 320.3,369.8"/>
<polygon fill="#50ffaf" points="232.8,374.5 238.7,373.4 234.9,371.7 229,372.7"/>
<polygon fill="#20ffdf" points="491.2,366.8 497.1,363.4 493.3,364.1 487.4,368.4"/>
<polygon fill="#40ffbf" points="258,375.5 263.9,375.5 260.2,374.1 254.3,374"/>
<polygon fill="#008fff" points="460.1,392.9 466,387.7 462.2,394.1 456.3,400.3"/>
<polygon fill="#0000ff" points="428.9,419 434.8,419.5 431,426.9 425.1,425.7"/>
<polygon fill="#00efff" points="475.6,377.6 481.5,372.9 477.8,376.2 471.9,382"/>
<polygon fill="#30ffcf" points="308.5,375.6 314.4,373.3 310.7,375.9 304.8,377.4"/>
<polygon fill="#9fff60" points="364.9,353.2 370.8,353.9 367.1,342.5 361.2,344.2"/>
<polygon fill="#008fff" points="394,397.5 399.9,406.4 396.1,398.2 390.2,389.2"/>
<polygon fill="#00efff" points="384.3,381.3 390.2,389.2 386.4,377.1 380.5,370.1"/>
<polygon fill="#50ffaf" points="374.6,365.3 380.5,370.1 376.7,356.9 370.8,353.9"/>
<polygon fill="#0040ff" points="403.7,410.1 409.6,418 405.8,415.2 399.9,406.4"/>
<polygon fill="#50ffaf" points="516.5,359 522.4,357 518.6,355.8 512.7,358"/>
<polygon fill="#50ffaf" points="541.7,356.5 547.6,354.8 543.8,353.2 537.9,354.9"/>
<polygon fill="#50ffaf" points="242.5,375.1 248.4,374.3 244.6,372.7 238.7,373.4"/>
<polygon fill="#40ffbf" points="267.7,376.7 273.6,377 269.8,376.1 263.9,375.5"/>
<polygon fill="#20ffdf" points="293,378.2 298.9,378 295.1,379.2 289.2,378.6"/>
<polygon fill="#0020ff" points="413.3,416.6 419.2,422.1 415.5,424.7 409.6,418"/>
<polygon fill="#afff50" points="349.4,352.4 355.3,347.7 351.5,342.5 345.6,349.1"/>
<polygon fill="#40ffbf" points="500.9,363.2 506.8,360.5 503,360.2 497.1,363.4"/>
<polygon fill="#80ff80" points="333.8,361.6 339.7,355.7 335.9,355.7 330,362.3"/>
<polygon fill="#50ffaf" points="318.2,371.5 324.1,367.6 320.3,369.8 314.4,373.3"/>
<polygon fill="#0040ff" points="438.6,410.9 444.5,409 440.7,417.8 434.8,419.5"/>
<polygon fill="#0080ff" points="454.2,397.2 460.1,392.9 456.3,400.3 450.4,405.4"/>
<polygon fill="#10ffef" points="485.3,370.5 491.2,366.8 487.4,368.4 481.5,372.9"/>
<polygon fill="#50ffaf" points="526.1,358.4 532,356.6 528.3,355.1 522.4,357"/>
<polygon fill="#00cfff" points="469.7,382.2 475.6,377.6 471.9,382 466,387.7"/>
<polygon fill="#50ffaf" points="226.9,375.7 232.8,374.5 229,372.7 223.1,374"/>
<polygon fill="#30ffcf" points="277.4,377.7 283.3,378 279.5,377.8 273.6,377"/>
<polygon fill="#40ffbf" points="252.1,375.9 258,375.5 254.3,374 248.4,374.3"/>
<polygon fill="#0020ff" points="423,416.5 428.9,419 425.1,425.7 419.2,422.1"/>
<polygon fill="#30ffcf" points="302.6,377 308.5,375.6 304.8,377.4 298.9,378"/>
<polygon fill="#9fff60" points="359,354.5 364.9,353.2 361.2,344.2 355.3,347.7"/>
<polygon fill="#40ffbf" points="510.6,361.2 516.5,359 512.7,358 506.8,360.5"/>
<polygon fill="#70ff8f" points="368.7,362.6 374.6,365.3 370.8,353.9 364.9,353.2"/>
<polygon fill="#50ffaf" points="535.8,358.2 541.7,356.5 537.9,354.9 532,356.6"/>
<polygon fill="#8fff70" points="343.5,357.5 349.4,352.4 345.6,349.1 339.7,355.7"/>
<polygon fill="#20ffdf" points="378.4,375.2 384.3,381.3 380.5,370.1 374.6,365.3"/>
<polygon fill="#00cfff" points="388.1,389.4 394,397.5 390.2,389.2 384.3,381.3"/>
<polygon fill="#50ffaf" points="236.6,376.2 242.5,375.1 238.7,373.4 232.8,374.5"/>
<polygon fill="#40ffbf" points="261.8,376.8 267.7,376.7 263.9,375.5 258,375.5"/>
<polygon fill="#30ffcf" points="287.1,378.2 293,378.2 289.2,378.6 283.3,378"/>
<polygon fill="#0080ff" points="397.8,402 403.7,410.1 399.9,406.4 394,397.5"/>
<polygon fill="#30ffcf" points="495,366 500.9,363.2 497.1,363.4 491.2,366.8"/>
<polygon fill="#60ff9f" points="327.9,366.6 333.8,361.6 330,362.3 324.1,367.6"/>
<polygon fill="#10ffef" points="479.4,374.3 485.3,370.5 481.5,372.9 475.6,377.6"/>
<polygon fill="#0080ff" points="448.3,400.4 454.2,397.2 450.4,405.4 444.5,409"/>
<polygon fill="#40ffbf" points="312.3,374.3 318.2,371.5 314.4,373.3 308.5,375.6"/>
<polygon fill="#00bfff" points="463.8,386.4 469.7,382.2 466,387.7 460.1,392.9"/>
<polygon fill="#0050ff" points="407.4,410 413.3,416.6 409.6,418 403.7,410.1"/>
<polygon fill="#0040ff" points="432.7,410.9 438.6,410.9 434.8,419.5 428.9,419"/>
<polygon fill="#50ffaf" points="520.2,360.3 526.1,358.4 522.4,357 516.5,359"/>
<polygon fill="#50ffaf" points="246.2,376.8 252.1,375.9 248.4,374.3 242.5,375.1"/>
<polygon fill="#9fff60" points="353.1,357.3 359,354.5 355.3,347.7 349.4,352.4"/>
<polygon fill="#40ffbf" points="271.5,377.7 277.4,377.7 273.6,377 267.7,376.7"/>
<polygon fill="#30ffcf" points="296.7,377.8 302.6,377 298.9,378 293,378.2"/>
<polygon fill="#40ffbf" points="504.7,363.5 510.6,361.2 506.8,360.5 500.9,363.2"/>
<polygon fill="#0040ff" points="417.1,412.3 423,416.5 419.2,422.1 413.3,416.6"/>
<polygon fill="#80ff80" points="337.6,362.5 343.5,357.5 339.7,355.7 333.8,361.6"/>
<polygon fill="#50ffaf" points="529.9,359.9 535.8,358.2 532,356.6 526.1,358.4"/>
<polygon fill="#80ff80" points="362.8,361.9 368.7,362.6 364.9,353.2 359,354.5"/>
<polygon fill="#60ff9f" points="322,370.7 327.9,366.6 324.1,367.6 318.2,371.5"/>
<polygon fill="#50ffaf" points="230.7,377.5 236.6,376.2 232.8,374.5 226.9,375.7"/>
<polygon fill="#30ffcf" points="489.1,369 495,366 491.2,366.8 485.3,370.5"/>
<polygon fill="#50ffaf" points="255.9,377.4 261.8,376.8 258,375.5 252.1,375.9"/>
<polygon fill="#40ffbf" points="281.2,378.4 287.1,378.2 283.3,378 277.4,377.7"/>
<polygon fill="#40ffbf" points="372.5,371.1 378.4,375.2 374.6,365.3 368.7,362.6"/>
<polygon fill="#00ffff" points="473.5,378 479.4,374.3 475.6,377.6 469.7,382.2"/>
<polygon fill="#00bfff" points="457.9,390.1 463.8,386.4 460.1,392.9 454.2,397.2"/>
<polygon fill="#0070ff" points="442.4,402.3 448.3,400.4 444.5,409 438.6,410.9"/>
<polygon fill="#40ffbf" points="306.4,376.3 312.3,374.3 308.5,375.6 302.6,377"/>
<polygon fill="#00ffff" points="382.2,382.8 388.1,389.4 384.3,381.3 378.4,375.2"/>
<polygon fill="#50ffaf" points="514.3,362.2 520.2,360.3 516.5,359 510.6,361.2"/>
<polygon fill="#00bfff" points="391.9,394.3 397.8,402 394,397.5 388.1,389.4"/>
<polygon fill="#0050ff" points="426.8,409.3 432.7,410.9 428.9,419 423,416.5"/>
<polygon fill="#8fff70" points="347.2,360.8 353.1,357.3 349.4,352.4 343.5,357.5"/>
<polygon fill="#50ffaf" points="240.3,377.9 246.2,376.8 242.5,375.1 236.6,376.2"/>
<polygon fill="#40ffbf" points="265.6,378.2 271.5,377.7 267.7,376.7 261.8,376.8"/>
<polygon fill="#0080ff" points="401.5,402.9 407.4,410 403.7,410.1 397.8,402"/>
<polygon fill="#40ffbf" points="290.8,378.4 296.7,377.8 293,378.2 287.1,378.2"/>
<polygon fill="#40ffbf" points="498.8,365.9 504.7,363.5 500.9,363.2 495,366"/>
<polygon fill="#70ff8f" points="331.7,367 337.6,362.5 333.8,361.6 327.9,366.6"/>
<polygon fill="#50ffaf" points="316.1,373.8 322,370.7 318.2,371.5 312.3,374.3"/>
<polygon fill="#50ffaf" points="524,361.7 529.9,359.9 526.1,358.4 520.2,360.3"/>
<polygon fill="#20ffdf" points="483.2,372.1 489.1,369 485.3,370.5 479.4,374.3"/>
<polygon fill="#80ff80" points="356.9,362.9 362.8,361.9 359,354.5 353.1,357.3"/>
<polygon fill="#0070ff" points="411.2,407 417.1,412.3 413.3,416.6 407.4,410"/>
<polygon fill="#00efff" points="467.6,381.4 473.5,378 469.7,382.2 463.8,386.4"/>
<polygon fill="#50ffaf" points="250,378.4 255.9,377.4 252.1,375.9 246.2,376.8"/>
<polygon fill="#40ffbf" points="275.3,378.8 281.2,378.4 277.4,377.7 271.5,377.7"/>
<polygon fill="#00afff" points="452,392.8 457.9,390.1 454.2,397.2 448.3,400.4"/>
<polygon fill="#0080ff" points="436.5,402.7 442.4,402.3 438.6,410.9 432.7,410.9"/>
<polygon fill="#40ffbf" points="300.5,377.7 306.4,376.3 302.6,377 296.7,377.8"/>
<polygon fill="#60ff9f" points="366.6,368.9 372.5,371.1 368.7,362.6 362.8,361.9"/>
<polygon fill="#50ffaf" points="508.4,364.2 514.3,362.2 510.6,361.2 504.7,363.5"/>
<polygon fill="#80ff80" points="341.3,364.7 347.2,360.8 343.5,357.5 337.6,362.5"/>
<polygon fill="#20ffdf" points="376.3,377.9 382.2,382.8 378.4,375.2 372.5,371.1"/>
<polygon fill="#50ffaf" points="234.4,379.2 240.3,377.9 236.6,376.2 230.7,377.5"/>
<polygon fill="#0070ff" points="420.9,406.3 426.8,409.3 423,416.5 417.1,412.3"/>
<polygon fill="#60ff9f" points="325.8,370.8 331.7,367 327.9,366.6 322,370.7"/>
<polygon fill="#50ffaf" points="259.7,378.9 265.6,378.2 261.8,376.8 255.9,377.4"/>
<polygon fill="#40ffbf" points="492.9,368.4 498.8,365.9 495,366 489.1,369"/>
<polygon fill="#00efff" points="386,387.8 391.9,394.3 388.1,389.4 382.2,382.8"/>
<polygon fill="#40ffbf" points="284.9,379.1 290.8,378.4 287.1,378.2 281.2,378.4"/>
<polygon fill="#50ffaf" points="310.2,376.1 316.1,373.8 312.3,374.3 306.4,376.3"/>
<polygon fill="#10ffef" points="477.3,375.1 483.2,372.1 479.4,374.3 473.5,378"/>
<polygon fill="#00bfff" points="395.6,396.1 401.5,402.9 397.8,402 391.9,394.3"/>
<polygon fill="#50ffaf" points="518.1,363.5 524,361.7 520.2,360.3 514.3,362.2"/>
<polygon fill="#80ff80" points="351,365 356.9,362.9 353.1,357.3 347.2,360.8"/>
<polygon fill="#00dfff" points="461.7,384.4 467.6,381.4 463.8,386.4 457.9,390.1"/>
<polygon fill="#50ffaf" points="244.1,379.5 250,378.4 246.2,376.8 240.3,377.9"/>
<polygon fill="#00afff" points="446.1,394.7 452,392.8 448.3,400.4 442.4,402.3"/>
<polygon fill="#40ffbf" points="269.4,379.5 275.3,378.8 271.5,377.7 265.6,378.2"/>
<polygon fill="#009fff" points="405.3,401.3 411.2,407 407.4,410 401.5,402.9"/>
<polygon fill="#40ffbf" points="294.6,378.8 300.5,377.7 296.7,377.8 290.8,378.4"/>
<polygon fill="#70ff8f" points="335.4,368.4 341.3,364.7 337.6,362.5 331.7,367"/>
<polygon fill="#40ffbf" points="502.5,366.3 508.4,364.2 504.7,363.5 498.8,365.9"/>
<polygon fill="#008fff" points="430.6,401.9 436.5,402.7 432.7,410.9 426.8,409.3"/>
<polygon fill="#70ff8f" points="360.7,368.5 366.6,368.9 362.8,361.9 356.9,362.9"/>
<polygon fill="#60ff9f" points="319.9,374 325.8,370.8 322,370.7 316.1,373.8"/>
<polygon fill="#30ffcf" points="487,370.9 492.9,368.4 489.1,369 483.2,372.1"/>
<polygon fill="#50ffaf" points="253.8,380 259.7,378.9 255.9,377.4 250,378.4"/>
<polygon fill="#40ffbf" points="370.4,374.9 376.3,377.9 372.5,371.1 366.6,368.9"/>
<polygon fill="#40ffbf" points="279,379.8 284.9,379.1 281.2,378.4 275.3,378.8"/>
<polygon fill="#008fff" points="415,402.4 420.9,406.3 417.1,412.3 411.2,407"/>
<polygon fill="#10ffef" points="471.4,377.9 477.3,375.1 473.5,378 467.6,381.4"/>
<polygon fill="#50ffaf" points="304.3,377.9 310.2,376.1 306.4,376.3 300.5,377.7"/>
<polygon fill="#70ff8f" points="345.1,367.7 351,365 347.2,360.8 341.3,364.7"/>
<polygon fill="#50ffaf" points="512.2,365.3 518.1,363.5 514.3,362.2 508.4,364.2"/>
<polygon fill="#10ffef" points="380.1,382.8 386,387.8 382.2,382.8 376.3,377.9"/>
<polygon fill="#00dfff" points="455.8,386.9 461.7,384.4 457.9,390.1 452,392.8"/>
<polygon fill="#50ffaf" points="238.2,380.9 244.1,379.5 240.3,377.9 234.4,379.2"/>
<polygon fill="#00afff" points="440.2,395.4 446.1,394.7 442.4,402.3 436.5,402.7"/>
<polygon fill="#00dfff" points="389.7,390.3 395.6,396.1 391.9,394.3 386,387.8"/>
<polygon fill="#60ff9f" points="329.5,371.9 335.4,368.4 331.7,367 325.8,370.8"/>
<polygon fill="#50ffaf" points="263.5,380.4 269.4,379.5 265.6,378.2 259.7,378.9"/>
<polygon fill="#40ffbf" points="496.6,368.5 502.5,366.3 498.8,365.9 492.9,368.4"/>
<polygon fill="#40ffbf" points="288.7,379.9 294.6,378.8 290.8,378.4 284.9,379.1"/>
<polygon fill="#70ff8f" points="354.8,369.4 360.7,368.5 356.9,362.9 351,365"/>
<polygon fill="#009fff" points="424.7,400 430.6,401.9 426.8,409.3 420.9,406.3"/>
<polygon fill="#50ffaf" points="314,376.5 319.9,374 316.1,373.8 310.2,376.1"/>
<polygon fill="#00bfff" points="399.4,395.7 405.3,401.3 401.5,402.9 395.6,396.1"/>
<polygon fill="#30ffcf" points="481.1,373.4 487,370.9 483.2,372.1 477.3,375.1"/>
<polygon fill="#50ffaf" points="247.9,381.2 253.8,380 250,378.4 244.1,379.5"/>
<polygon fill="#50ffaf" points="273.1,380.8 279,379.8 275.3,378.8 269.4,379.5"/>
<polygon fill="#50ffaf" points="364.5,373.5 370.4,374.9 366.6,368.9 360.7,368.5"/>
<polygon fill="#10ffef" points="465.5,380.4 471.4,377.9 467.6,381.4 461.7,384.4"/>
<polygon fill="#70ff8f" points="339.2,370.7 345.1,367.7 341.3,364.7 335.4,368.4"/>
<polygon fill="#50ffaf" points="298.4,379.5 304.3,377.9 300.5,377.7 294.6,378.8"/>
<polygon fill="#50ffaf" points="506.3,367.2 512.2,365.3 508.4,364.2 502.5,366.3"/>
<polygon fill="#00dfff" points="449.9,388.6 455.8,386.9 452,392.8 446.1,394.7"/>
<polygon fill="#00afff" points="409.1,398.2 415,402.4 411.2,407 405.3,401.3"/>
<polygon fill="#30ffcf" points="374.2,379.4 380.1,382.8 376.3,377.9 370.4,374.9"/>
<polygon fill="#60ff9f" points="323.6,374.8 329.5,371.9 325.8,370.8 319.9,374"/>
<polygon fill="#00bfff" points="434.3,395.3 440.2,395.4 436.5,402.7 430.6,401.9"/>
<polygon fill="#50ffaf" points="257.6,381.5 263.5,380.4 259.7,378.9 253.8,380"/>
<polygon fill="#40ffbf" points="490.7,370.6 496.6,368.5 492.9,368.4 487,370.9"/>
<polygon fill="#50ffaf" points="282.8,380.9 288.7,379.9 284.9,379.1 279,379.8"/>
<polygon fill="#70ff8f" points="348.9,371.1 354.8,369.4 351,365 345.1,367.7"/>
<polygon fill="#10ffef" points="383.8,385.7 389.7,390.3 386,387.8 380.1,382.8"/>
<polygon fill="#50ffaf" points="308.1,378.6 314,376.5 310.2,376.1 304.3,377.9"/>
<polygon fill="#20ffdf" points="475.2,375.8 481.1,373.4 477.3,375.1 471.4,377.9"/>
<polygon fill="#00bfff" points="418.8,397.5 424.7,400 420.9,406.3 415,402.4"/>
<polygon fill="#50ffaf" points="242,382.6 247.9,381.2 244.1,379.5 238.2,380.9"/>
<polygon fill="#00ffff" points="459.6,382.6 465.5,380.4 461.7,384.4 455.8,386.9"/>
<polygon fill="#00efff" points="393.5,390.9 399.4,395.7 395.6,396.1 389.7,390.3"/>
<polygon fill="#60ff9f" points="333.3,373.6 339.2,370.7 335.4,368.4 329.5,371.9"/>
<polygon fill="#50ffaf" points="267.2,381.9 273.1,380.8 269.4,379.5 263.5,380.4"/>
<polygon fill="#60ff9f" points="358.6,373.5 364.5,373.5 360.7,368.5 354.8,369.4"/>
<polygon fill="#50ffaf" points="500.4,369.1 506.3,367.2 502.5,366.3 496.6,368.5"/>
<polygon fill="#50ffaf" points="292.5,380.8 298.4,379.5 294.6,378.8 288.7,379.9"/>
<polygon fill="#00dfff" points="444,389.7 449.9,388.6 446.1,394.7 440.2,395.4"/>
<polygon fill="#60ff9f" points="317.7,377.4 323.6,374.8 319.9,374 314,376.5"/>
<polygon fill="#00dfff" points="403.2,394 409.1,398.2 405.3,401.3 399.4,395.7"/>
<polygon fill="#40ffbf" points="484.8,372.8 490.7,370.6 487,370.9 481.1,373.4"/>
<polygon fill="#50ffaf" points="251.7,382.9 257.6,381.5 253.8,380 247.9,381.2"/>
<polygon fill="#40ffbf" points="368.3,377.6 374.2,379.4 370.4,374.9 364.5,373.5"/>
<polygon fill="#00cfff" points="428.4,394.4 434.3,395.3 430.6,401.9 424.7,400"/>
<polygon fill="#50ffaf" points="276.9,382.1 282.8,380.9 279,379.8 273.1,380.8"/>
<polygon fill="#70ff8f" points="343,373.3 348.9,371.1 345.1,367.7 339.2,370.7"/>
<polygon fill="#50ffaf" points="302.2,380.4 308.1,378.6 304.3,377.9 298.4,379.5"/>
<polygon fill="#20ffdf" points="469.3,378 475.2,375.8 471.4,377.9 465.5,380.4"/>
<polygon fill="#30ffcf" points="377.9,382.5 383.8,385.7 380.1,382.8 374.2,379.4"/>
<polygon fill="#60ff9f" points="327.4,376.3 333.3,373.6 329.5,371.9 323.6,374.8"/>
<polygon fill="#00dfff" points="412.9,394.6 418.8,397.5 415,402.4 409.1,398.2"/>
<polygon fill="#00ffff" points="453.7,384.3 459.6,382.6 455.8,386.9 449.9,388.6"/>
<polygon fill="#50ffaf" points="261.3,383.1 267.2,381.9 263.5,380.4 257.6,381.5"/>
<polygon fill="#40ffbf" points="494.5,371.1 500.4,369.1 496.6,368.5 490.7,370.6"/>
<polygon fill="#60ff9f" points="352.7,374.5 358.6,373.5 354.8,369.4 348.9,371.1"/>
<polygon fill="#50ffaf" points="286.6,382.2 292.5,380.8 288.7,379.9 282.8,380.9"/>
<polygon fill="#10ffef" points="387.6,387 393.5,390.9 389.7,390.3 383.8,385.7"/>
<polygon fill="#00efff" points="438.1,390 444,389.7 440.2,395.4 434.3,395.3"/>
<polygon fill="#50ffaf" points="311.8,379.6 317.7,377.4 314,376.5 308.1,378.6"/>
<polygon fill="#40ffbf" points="478.9,374.9 484.8,372.8 481.1,373.4 475.2,375.8"/>
<polygon fill="#50ffaf" points="245.8,384.3 251.7,382.9 247.9,381.2 242,382.6"/>
<polygon fill="#60ff9f" points="337.1,375.7 343,373.3 339.2,370.7 333.3,373.6"/>
<polygon fill="#50ffaf" points="362.4,377.1 368.3,377.6 364.5,373.5 358.6,373.5"/>
<polygon fill="#50ffaf" points="271,383.4 276.9,382.1 273.1,380.8 267.2,381.9"/>
<polygon fill="#00dfff" points="422.5,392.9 428.4,394.4 424.7,400 418.8,397.5"/>
<polygon fill="#00ffff" points="397.3,390.3 403.2,394 399.4,395.7 393.5,390.9"/>
<polygon fill="#50ffaf" points="296.3,382 302.2,380.4 298.4,379.5 292.5,380.8"/>
<polygon fill="#20ffdf" points="463.4,380 469.3,378 465.5,380.4 459.6,382.6"/>
<polygon fill="#60ff9f" points="321.5,378.7 327.4,376.3 323.6,374.8 317.7,377.4"/>
<polygon fill="#40ffbf" points="372,380.6 377.9,382.5 374.2,379.4 368.3,377.6"/>
<polygon fill="#10ffef" points="447.8,385.5 453.7,384.3 449.9,388.6 444,389.7"/>
<polygon fill="#50ffaf" points="255.4,384.5 261.3,383.1 257.6,381.5 251.7,382.9"/>
<polygon fill="#40ffbf" points="488.6,373 494.5,371.1 490.7,370.6 484.8,372.8"/>
<polygon fill="#60ff9f" points="346.8,376.1 352.7,374.5 348.9,371.1 343,373.3"/>
<polygon fill="#00efff" points="407,391.7 412.9,394.6 409.1,398.2 403.2,394"/>
<polygon fill="#50ffaf" points="280.7,383.5 286.6,382.2 282.8,380.9 276.9,382.1"/>
<polygon fill="#00efff" points="432.2,389.9 438.1,390 434.3,395.3 428.4,394.4"/>
<polygon fill="#50ffaf" points="305.9,381.5 311.8,379.6 308.1,378.6 302.2,380.4"/>
<polygon fill="#30ffcf" points="381.7,384.3 387.6,387 383.8,385.7 377.9,382.5"/>
<polygon fill="#30ffcf" points="473,376.9 478.9,374.9 475.2,375.8 469.3,378"/>
<polygon fill="#60ff9f" points="331.2,378.1 337.1,375.7 333.3,373.6 327.4,376.3"/>
<polygon fill="#50ffaf" points="265.1,384.7 271,383.4 267.2,381.9 261.3,383.1"/>
<polygon fill="#60ff9f" points="356.5,377.6 362.4,377.1 358.6,373.5 352.7,374.5"/>
<polygon fill="#20ffdf" points="457.5,381.6 463.4,380 459.6,382.6 453.7,384.3"/>
<polygon fill="#50ffaf" points="290.4,383.5 296.3,382 292.5,380.8 286.6,382.2"/>
<polygon fill="#00efff" points="416.6,391.2 422.5,392.9 418.8,397.5 412.9,394.6"/>
<polygon fill="#10ffef" points="391.4,387.4 397.3,390.3 393.5,390.9 387.6,387"/>
<polygon fill="#50ffaf" points="315.6,380.9 321.5,378.7 317.7,377.4 311.8,379.6"/>
<polygon fill="#10ffef" points="441.9,386.3 447.8,385.5 444,389.7 438.1,390"/>
<polygon fill="#50ffaf" points="249.5,386 255.4,384.5 251.7,382.9 245.8,384.3"/>
<polygon fill="#40ffbf" points="482.7,374.9 488.6,373 484.8,372.8 478.9,374.9"/>
<polygon fill="#50ffaf" points="366.1,380 372,380.6 368.3,377.6 362.4,377.1"/>
<polygon fill="#60ff9f" points="340.9,378.1 346.8,376.1 343,373.3 337.1,375.7"/>
<polygon fill="#50ffaf" points="274.8,384.9 280.7,383.5 276.9,382.1 271,383.4"/>
<polygon fill="#50ffaf" points="300,383.3 305.9,381.5 302.2,380.4 296.3,382"/>
<polygon fill="#10ffef" points="401.1,389.2 407,391.7 403.2,394 397.3,390.3"/>
<polygon fill="#00ffff" points="426.3,389.3 432.2,389.9 428.4,394.4 422.5,392.9"/>
<polygon fill="#30ffcf" points="467.1,378.7 473,376.9 469.3,378 463.4,380"/>
<polygon fill="#60ff9f" points="325.3,380.4 331.2,378.1 327.4,376.3 321.5,378.7"/>
<polygon fill="#40ffbf" points="375.8,382.8 381.7,384.3 377.9,382.5 372,380.6"/>
<polygon fill="#50ffaf" points="259.2,386.2 265.1,384.7 261.3,383.1 255.4,384.5"/>
<polygon fill="#60ff9f" points="350.6,378.8 356.5,377.6 352.7,374.5 346.8,376.1"/>
<polygon fill="#20ffdf" points="451.6,383 457.5,381.6 453.7,384.3 447.8,385.5"/>
<polygon fill="#50ffaf" points="284.5,385 290.4,383.5 286.6,382.2 280.7,383.5"/>
<polygon fill="#10ffef" points="410.7,389.5 416.6,391.2 412.9,394.6 407,391.7"/>
<polygon fill="#50ffaf" points="309.7,382.9 315.6,380.9 311.8,379.6 305.9,381.5"/>
<polygon fill="#30ffcf" points="385.5,385.4 391.4,387.4 387.6,387 381.7,384.3"/>
<polygon fill="#10ffef" points="436,386.7 441.9,386.3 438.1,390 432.2,389.9"/>
<polygon fill="#40ffbf" points="476.8,376.7 482.7,374.9 478.9,374.9 473,376.9"/>
<polygon fill="#60ff9f" points="335,380.2 340.9,378.1 337.1,375.7 331.2,378.1"/>
<polygon fill="#50ffaf" points="360.2,380.3 366.1,380 362.4,377.1 356.5,377.6"/>
<polygon fill="#50ffaf" points="268.9,386.3 274.8,384.9 271,383.4 265.1,384.7"/>
<polygon fill="#50ffaf" points="294.1,384.9 300,383.3 296.3,382 290.4,383.5"/>
<polygon fill="#30ffcf" points="461.2,380.3 467.1,378.7 463.4,380 457.5,381.6"/>
<polygon fill="#20ffdf" points="395.2,387.3 401.1,389.2 397.3,390.3 391.4,387.4"/>
<polygon fill="#10ffef" points="420.4,388.6 426.3,389.3 422.5,392.9 416.6,391.2"/>
<polygon fill="#60ff9f" points="319.4,382.5 325.3,380.4 321.5,378.7 315.6,380.9"/>
<polygon fill="#50ffaf" points="369.9,382.3 375.8,382.8 372,380.6 366.1,380"/>
<polygon fill="#50ffaf" points="253.3,387.6 259.2,386.2 255.4,384.5 249.5,386"/>
<polygon fill="#60ff9f" points="344.7,380.4 350.6,378.8 346.8,376.1 340.9,378.1"/>
<polygon fill="#50ffaf" points="278.6,386.5 284.5,385 280.7,383.5 274.8,384.9"/>
<polygon fill="#20ffdf" points="445.7,384 451.6,383 447.8,385.5 441.9,386.3"/>
<polygon fill="#50ffaf" points="303.8,384.7 309.7,382.9 305.9,381.5 300,383.3"/>
<polygon fill="#20ffdf" points="404.8,388.1 410.7,389.5 407,391.7 401.1,389.2"/>
<polygon fill="#60ff9f" points="329.1,382.2 335,380.2 331.2,378.1 325.3,380.4"/>
<polygon fill="#40ffbf" points="470.9,378.4 476.8,376.7 473,376.9 467.1,378.7"/>
<polygon fill="#40ffbf" points="379.6,384.3 385.5,385.4 381.7,384.3 375.8,382.8"/>
<polygon fill="#20ffdf" points="430.1,386.9 436,386.7 432.2,389.9 426.3,389.3"/>
<polygon fill="#60ff9f" points="354.3,381.2 360.2,380.3 356.5,377.6 350.6,378.8"/>
<polygon fill="#50ffaf" points="263,387.8 268.9,386.3 265.1,384.7 259.2,386.2"/>
<polygon fill="#50ffaf" points="288.2,386.5 294.1,384.9 290.4,383.5 284.5,385"/>
<polygon fill="#30ffcf" points="455.3,381.7 461.2,380.3 457.5,381.6 451.6,383"/>
<polygon fill="#50ffaf" points="313.5,384.5 319.4,382.5 315.6,380.9 309.7,382.9"/>
<polygon fill="#20ffdf" points="414.5,387.9 420.4,388.6 416.6,391.2 410.7,389.5"/>
<polygon fill="#30ffcf" points="389.3,386.1 395.2,387.3 391.4,387.4 385.5,385.4"/>
<polygon fill="#60ff9f" points="338.8,382.3 344.7,380.4 340.9,378.1 335,380.2"/>
<polygon fill="#50ffaf" points="364,382.6 369.9,382.3 366.1,380 360.2,380.3"/>
<polygon fill="#50ffaf" points="272.7,388 278.6,386.5 274.8,384.9 268.9,386.3"/>
<polygon fill="#30ffcf" points="439.8,384.8 445.7,384 441.9,386.3 436,386.7"/>
<polygon fill="#50ffaf" points="297.9,386.5 303.8,384.7 300,383.3 294.1,384.9"/>
<polygon fill="#50ffaf" points="323.2,384.3 329.1,382.2 325.3,380.4 319.4,382.5"/>
<polygon fill="#40ffbf" points="465,380 470.9,378.4 467.1,378.7 461.2,380.3"/>
<polygon fill="#30ffcf" points="398.9,387.1 404.8,388.1 401.1,389.2 395.2,387.3"/>
<polygon fill="#50ffaf" points="373.7,384.1 379.6,384.3 375.8,382.8 369.9,382.3"/>
<polygon fill="#60ff9f" points="348.4,382.7 354.3,381.2 350.6,378.8 344.7,380.4"/>
<polygon fill="#20ffdf" points="424.2,386.9 430.1,386.9 426.3,389.3 420.4,388.6"/>
<polygon fill="#50ffaf" points="257.1,389.3 263,387.8 259.2,386.2 253.3,387.6"/>
<polygon fill="#50ffaf" points="282.3,388.1 288.2,386.5 284.5,385 278.6,386.5"/>
<polygon fill="#30ffcf" points="449.4,383 455.3,381.7 451.6,383 445.7,384"/>
<polygon fill="#50ffaf" points="307.6,386.3 313.5,384.5 309.7,382.9 303.8,384.7"/>
<polygon fill="#60ff9f" points="332.9,384.2 338.8,382.3 335,380.2 329.1,382.2"/>
<polygon fill="#30ffcf" points="408.6,387.4 414.5,387.9 410.7,389.5 404.8,388.1"/>
<polygon fill="#40ffbf" points="383.4,385.5 389.3,386.1 385.5,385.4 379.6,384.3"/>
<polygon fill="#50ffaf" points="358.1,383.5 364,382.6 360.2,380.3 354.3,381.2"/>
<polygon fill="#50ffaf" points="266.8,389.5 272.7,388 268.9,386.3 263,387.8"/>
<polygon fill="#30ffcf" points="433.9,385.5 439.8,384.8 436,386.7 430.1,386.9"/>
<polygon fill="#50ffaf" points="292,388.1 297.9,386.5 294.1,384.9 288.2,386.5"/>
<polygon fill="#50ffaf" points="317.3,386.2 323.2,384.3 319.4,382.5 313.5,384.5"/>
<polygon fill="#40ffbf" points="459.1,381.5 465,380 461.2,380.3 455.3,381.7"/>
<polygon fill="#60ff9f" points="342.5,384.4 348.4,382.7 344.7,380.4 338.8,382.3"/>
<polygon fill="#40ffbf" points="393,386.6 398.9,387.1 395.2,387.3 389.3,386.1"/>
<polygon fill="#50ffaf" points="367.8,384.5 373.7,384.1 369.9,382.3 364,382.6"/>
<polygon fill="#30ffcf" points="418.3,386.9 424.2,386.9 420.4,388.6 414.5,387.9"/>
<polygon fill="#50ffaf" points="276.4,389.6 282.3,388.1 278.6,386.5 272.7,388"/>
<polygon fill="#40ffbf" points="443.5,384.1 449.4,383 445.7,384 439.8,384.8"/>
<polygon fill="#50ffaf" points="301.7,388.1 307.6,386.3 303.8,384.7 297.9,386.5"/>
<polygon fill="#50ffaf" points="327,386.1 332.9,384.2 329.1,382.2 323.2,384.3"/>
<polygon fill="#50ffaf" points="352.2,384.8 358.1,383.5 354.3,381.2 348.4,382.7"/>
<polygon fill="#40ffbf" points="402.7,387.1 408.6,387.4 404.8,388.1 398.9,387.1"/>
<polygon fill="#50ffaf" points="377.5,385.7 383.4,385.5 379.6,384.3 373.7,384.1"/>
<polygon fill="#50ffaf" points="260.9,391.1 266.8,389.5 263,387.8 257.1,389.3"/>
<polygon fill="#30ffcf" points="428,386.1 433.9,385.5 430.1,386.9 424.2,386.9"/>
<polygon fill="#50ffaf" points="286.1,389.7 292,388.1 288.2,386.5 282.3,388.1"/>
<polygon fill="#50ffaf" points="311.4,388 317.3,386.2 313.5,384.5 307.6,386.3"/>
<polygon fill="#40ffbf" points="453.2,382.9 459.1,381.5 455.3,381.7 449.4,383"/>
<polygon fill="#50ffaf" points="336.6,386.2 342.5,384.4 338.8,382.3 332.9,384.2"/>
<polygon fill="#50ffaf" points="361.9,385.5 367.8,384.5 364,382.6 358.1,383.5"/>
<polygon fill="#40ffbf" points="387.1,386.6 393,386.6 389.3,386.1 383.4,385.5"/>
<polygon fill="#40ffbf" points="412.4,387.1 418.3,386.9 414.5,387.9 408.6,387.4"/>
<polygon fill="#50ffaf" points="270.5,391.2 276.4,389.6 272.7,388 266.8,389.5"/>
<polygon fill="#50ffaf" points="295.8,389.8 301.7,388.1 297.9,386.5 292,388.1"/>
<polygon fill="#40ffbf" points="437.6,385.1 443.5,384.1 439.8,384.8 433.9,385.5"/>
<polygon fill="#50ffaf" points="321.1,388 327,386.1 323.2,384.3 317.3,386.2"/>
<polygon fill="#50ffaf" points="346.3,386.4 352.2,384.8 348.4,382.7 342.5,384.4"/>
<polygon fill="#50ffaf" points="371.6,386.3 377.5,385.7 373.7,384.1 367.8,384.5"/>
<polygon fill="#40ffbf" points="396.8,387.2 402.7,387.1 398.9,387.1 393,386.6"/>
<polygon fill="#50ffaf" points="280.2,391.3 286.1,389.7 282.3,388.1 276.4,389.6"/>
<polygon fill="#40ffbf" points="422.1,386.7 428,386.1 424.2,386.9 418.3,386.9"/>
<polygon fill="#50ffaf" points="305.5,389.8 311.4,388 307.6,386.3 301.7,388.1"/>
<polygon fill="#40ffbf" points="447.3,384.2 453.2,382.9 449.4,383 443.5,384.1"/>
<polygon fill="#50ffaf" points="330.7,388 336.6,386.2 332.9,384.2 327,386.1"/>
<polygon fill="#50ffaf" points="356,386.8 361.9,385.5 358.1,383.5 352.2,384.8"/>
<polygon fill="#50ffaf" points="381.2,387.1 387.1,386.6 383.4,385.5 377.5,385.7"/>
<polygon fill="#50ffaf" points="264.6,392.8 270.5,391.2 266.8,389.5 260.9,391.1"/>
<polygon fill="#40ffbf" points="406.5,387.5 412.4,387.1 408.6,387.4 402.7,387.1"/>
<polygon fill="#50ffaf" points="289.9,391.4 295.8,389.8 292,388.1 286.1,389.7"/>
<polygon fill="#40ffbf" points="431.7,386.1 437.6,385.1 433.9,385.5 428,386.1"/>
<polygon fill="#50ffaf" points="315.2,389.8 321.1,388 317.3,386.2 311.4,388"/>
<polygon fill="#50ffaf" points="340.4,388.1 346.3,386.4 342.5,384.4 336.6,386.2"/>
<polygon fill="#50ffaf" points="365.7,387.4 371.6,386.3 367.8,384.5 361.9,385.5"/>
<polygon fill="#50ffaf" points="390.9,387.7 396.8,387.2 393,386.6 387.1,386.6"/>
<polygon fill="#50ffaf" points="274.3,392.9 280.2,391.3 276.4,389.6 270.5,391.2"/>
<polygon fill="#40ffbf" points="416.2,387.4 422.1,386.7 418.3,386.9 412.4,387.1"/>
<polygon fill="#50ffaf" points="299.6,391.5 305.5,389.8 301.7,388.1 295.8,389.8"/>
<polygon fill="#40ffbf" points="441.4,385.5 447.3,384.2 443.5,384.1 437.6,385.1"/>
<polygon fill="#50ffaf" points="324.8,389.8 330.7,388 327,386.1 321.1,388"/>
<polygon fill="#50ffaf" points="350.1,388.4 356,386.8 352.2,384.8 346.3,386.4"/>
<polygon fill="#50ffaf" points="375.3,388 381.2,387.1 377.5,385.7 371.6,386.3"/>
<polygon fill="#40ffbf" points="400.6,388.1 406.5,387.5 402.7,387.1 396.8,387.2"/>
<polygon fill="#50ffaf" points="284,393 289.9,391.4 286.1,389.7 280.2,391.3"/>
<polygon fill="#40ffbf" points="425.8,387.1 431.7,386.1 428,386.1 422.1,386.7"/>
<polygon fill="#50ffaf" points="309.3,391.5 315.2,389.8 311.4,388 305.5,389.8"/>
<polygon fill="#50ffaf" points="334.5,389.8 340.4,388.1 336.6,386.2 330.7,388"/>
<polygon fill="#50ffaf" points="359.8,388.7 365.7,387.4 361.9,385.5 356,386.8"/>
<polygon fill="#50ffaf" points="268.4,394.5 274.3,392.9 270.5,391.2 264.6,392.8"/>
<polygon fill="#50ffaf" points="385,388.5 390.9,387.7 387.1,386.6 381.2,387.1"/>
<polygon fill="#40ffbf" points="410.3,388.2 416.2,387.4 412.4,387.1 406.5,387.5"/>
<polygon fill="#50ffaf" points="293.7,393.1 299.6,391.5 295.8,389.8 289.9,391.4"/>
<polygon fill="#50ffaf" points="435.5,386.7 441.4,385.5 437.6,385.1 431.7,386.1"/>
<polygon fill="#50ffaf" points="318.9,391.5 324.8,389.8 321.1,388 315.2,389.8"/>
<polygon fill="#50ffaf" points="344.2,390 350.1,388.4 346.3,386.4 340.4,388.1"/>
<polygon fill="#50ffaf" points="369.4,389.2 375.3,388 371.6,386.3 365.7,387.4"/>
<polygon fill="#50ffaf" points="278.1,394.6 284,393 280.2,391.3 274.3,392.9"/>
<polygon fill="#50ffaf" points="394.7,388.9 400.6,388.1 396.8,387.2 390.9,387.7"/>
<polygon fill="#50ffaf" points="419.9,388.1 425.8,387.1 422.1,386.7 416.2,387.4"/>
<polygon fill="#50ffaf" points="303.4,393.2 309.3,391.5 305.5,389.8 299.6,391.5"/>
<polygon fill="#50ffaf" points="328.6,391.6 334.5,389.8 330.7,388 324.8,389.8"/>
<polygon fill="#50ffaf" points="353.9,390.3 359.8,388.7 356,386.8 350.1,388.4"/>
<polygon fill="#50ffaf" points="379.1,389.6 385,388.5 381.2,387.1 375.3,388"/>
<polygon fill="#50ffaf" points="404.4,389.1 410.3,388.2 406.5,387.5 400.6,388.1"/>
<polygon fill="#50ffaf" points="287.8,394.7 293.7,393.1 289.9,391.4 284,393"/>
<polygon fill="#50ffaf" points="429.6,387.9 435.5,386.7 431.7,386.1 425.8,387.1"/>
<polygon fill="#50ffaf" points="313,393.2 318.9,391.5 315.2,389.8 309.3,391.5"/>
<polygon fill="#50ffaf" points="338.3,391.7 344.2,390 340.4,388.1 334.5,389.8"/>
<polygon fill="#50ffaf" points="363.5,390.6 369.4,389.2 365.7,387.4 359.8,388.7"/>
<polygon fill="#50ffaf" points="272.2,396.2 278.1,394.6 274.3,392.9 268.4,394.5"/>
<polygon fill="#50ffaf" points="388.8,390 394.7,388.9 390.9,387.7 385,388.5"/>
<polygon fill="#50ffaf" points="297.5,394.8 303.4,393.2 299.6,391.5 293.7,393.1"/>
<polygon fill="#50ffaf" points="414,389.2 419.9,388.1 416.2,387.4 410.3,388.2"/>
<polygon fill="#50ffaf" points="322.7,393.3 328.6,391.6 324.8,389.8 318.9,391.5"/>
<polygon fill="#50ffaf" points="348,391.9 353.9,390.3 350.1,388.4 344.2,390"/>
<polygon fill="#50ffaf" points="373.2,390.9 379.1,389.6 375.3,388 369.4,389.2"/>
<polygon fill="#50ffaf" points="281.9,396.3 287.8,394.7 284,393 278.1,394.6"/>
<polygon fill="#50ffaf" points="398.5,390.2 404.4,389.1 400.6,388.1 394.7,388.9"/>
<polygon fill="#50ffaf" points="307.1,394.9 313,393.2 309.3,391.5 303.4,393.2"/>
<polygon fill="#50ffaf" points="423.7,389.2 429.6,387.9 425.8,387.1 419.9,388.1"/>
<polygon fill="#50ffaf" points="332.4,393.4 338.3,391.7 334.5,389.8 328.6,391.6"/>
<polygon fill="#50ffaf" points="357.6,392.1 363.5,390.6 359.8,388.7 353.9,390.3"/>
<polygon fill="#50ffaf" points="382.9,391.2 388.8,390 385,388.5 379.1,389.6"/>
<polygon fill="#50ffaf" points="291.6,396.5 297.5,394.8 293.7,393.1 287.8,394.7"/>
<polygon fill="#50ffaf" points="408.1,390.4 414,389.2 410.3,388.2 404.4,389.1"/>
<polygon fill="#50ffaf" points="316.8,395 322.7,393.3 318.9,391.5 313,393.2"/>
<polygon fill="#50ffaf" points="342.1,393.6 348,391.9 344.2,390 338.3,391.7"/>
<polygon fill="#50ffaf" points="367.3,392.4 373.2,390.9 369.4,389.2 363.5,390.6"/>
<polygon fill="#50ffaf" points="276,397.9 281.9,396.3 278.1,394.6 272.2,396.2"/>
<polygon fill="#50ffaf" points="392.6,391.5 398.5,390.2 394.7,388.9 388.8,390"/>
<polygon fill="#50ffaf" points="301.2,396.6 307.1,394.9 303.4,393.2 297.5,394.8"/>
<polygon fill="#50ffaf" points="417.8,390.5 423.7,389.2 419.9,388.1 414,389.2"/>
<polygon fill="#50ffaf" points="326.5,395.1 332.4,393.4 328.6,391.6 322.7,393.3"/>
<polygon fill="#50ffaf" points="351.7,393.7 357.6,392.1 353.9,390.3 348,391.9"/>
<polygon fill="#50ffaf" points="377,392.6 382.9,391.2 379.1,389.6 373.2,390.9"/>
<polygon fill="#50ffaf" points="285.7,398.1 291.6,396.5 287.8,394.7 281.9,396.3"/>
<polygon fill="#50ffaf" points="402.2,391.7 408.1,390.4 404.4,389.1 398.5,390.2"/>
<polygon fill="#50ffaf" points="310.9,396.7 316.8,395 313,393.2 307.1,394.9"/>
<polygon fill="#50ffaf" points="336.2,395.2 342.1,393.6 338.3,391.7 332.4,393.4"/>
<polygon fill="#50ffaf" points="361.4,393.9 367.3,392.4 363.5,390.6 357.6,392.1"/>
<polygon fill="#50ffaf" points="386.7,392.9 392.6,391.5 388.8,390 382.9,391.2"/>
<polygon fill="#50ffaf" points="295.3,398.2 301.2,396.6 297.5,394.8 291.6,396.5"/>
<polygon fill="#50ffaf" points="411.9,391.9 417.8,390.5 414,389.2 408.1,390.4"/>
<polygon fill="#50ffaf" points="320.6,396.8 326.5,395.1 322.7,393.3 316.8,395"/>
<polygon fill="#50ffaf" points="345.8,395.4 351.7,393.7 348,391.9 342.1,393.6"/>
<polygon fill="#50ffaf" points="371.1,394.2 377,392.6 373.2,390.9 367.3,392.4"/>
<polygon fill="#50ffaf" points="279.8,399.7 285.7,398.1 281.9,396.3 276,397.9"/>
<polygon fill="#50ffaf" points="396.3,393.1 402.2,391.7 398.5,390.2 392.6,391.5"/>
<polygon fill="#50ffaf" points="305,398.3 310.9,396.7 307.1,394.9 301.2,396.6"/>
<polygon fill="#50ffaf" points="330.3,396.9 336.2,395.2 332.4,393.4 326.5,395.1"/>
<polygon fill="#50ffaf" points="355.5,395.5 361.4,393.9 357.6,392.1 351.7,393.7"/>
<polygon fill="#50ffaf" points="380.8,394.4 386.7,392.9 382.9,391.2 377,392.6"/>
<polygon fill="#50ffaf" points="289.4,399.8 295.3,398.2 291.6,396.5 285.7,398.1"/>
<polygon fill="#50ffaf" points="406,393.3 411.9,391.9 408.1,390.4 402.2,391.7"/>
<polygon fill="#50ffaf" points="314.7,398.4 320.6,396.8 316.8,395 310.9,396.7"/>
<polygon fill="#50ffaf" points="339.9,397 345.8,395.4 342.1,393.6 336.2,395.2"/>
<polygon fill="#50ffaf" points="365.2,395.7 371.1,394.2 367.3,392.4 361.4,393.9"/>
<polygon fill="#50ffaf" points="390.4,394.6 396.3,393.1 392.6,391.5 386.7,392.9"/>
<polygon fill="#50ffaf" points="299.1,399.9 305,398.3 301.2,396.6 295.3,398.2"/>
<polygon fill="#50ffaf" points="324.4,398.6 330.3,396.9 326.5,395.1 320.6,396.8"/>
<polygon fill="#50ffaf" points="349.6,397.2 355.5,395.5 351.7,393.7 345.8,395.4"/>
<polygon fill="#50ffaf" points="374.9,395.9 380.8,394.4 377,392.6 371.1,394.2"/>
<polygon fill="#50ffaf" points="283.5,401.4 289.4,399.8 285.7,398.1 279.8,399.7"/>
<polygon fill="#50ffaf" points="400.1,394.8 406,393.3 402.2,391.7 396.3,393.1"/>
<polygon fill="#50ffaf" points="308.8,400.1 314.7,398.4 310.9,396.7 305,398.3"/>
<polygon fill="#50ffaf" points="334,398.7 339.9,397 336.2,395.2 330.3,396.9"/>
<polygon fill="#50ffaf" points="359.3,397.3 365.2,395.7 361.4,393.9 355.5,395.5"/>
<polygon fill="#50ffaf" points="384.5,396.1 390.4,394.6 386.7,392.9 380.8,394.4"/>
<polygon fill="#50ffaf" points="293.2,401.6 299.1,399.9 295.3,398.2 289.4,399.8"/>
<polygon fill="#50ffaf" points="318.5,400.2 324.4,398.6 320.6,396.8 314.7,398.4"/>
<polygon fill="#50ffaf" points="343.7,398.8 349.6,397.2 345.8,395.4 339.9,397"/>
<polygon fill="#50ffaf" points="369,397.5 374.9,395.9 371.1,394.2 365.2,395.7"/>
<polygon fill="#50ffaf" points="394.2,396.3 400.1,394.8 396.3,393.1 390.4,394.6"/>
<polygon fill="#50ffaf" points="302.9,401.7 308.8,400.1 305,398.3 299.1,399.9"/>
<polygon fill="#50ffaf" points="328.1,400.3 334,398.7 330.3,396.9 324.4,398.6"/>
<polygon fill="#50ffaf" points="353.4,399 359.3,397.3 355.5,395.5 349.6,397.2"/>
<polygon fill="#50ffaf" points="378.6,397.7 384.5,396.1 380.8,394.4 374.9,395.9"/>
<polygon fill="#50ffaf" points="287.3,403.2 293.2,401.6 289.4,399.8 283.5,401.4"/>
<polygon fill="#50ffaf" points="312.6,401.8 318.5,400.2 314.7,398.4 308.8,400.1"/>
<polygon fill="#50ffaf" points="337.8,400.5 343.7,398.8 339.9,397 334,398.7"/>
<polygon fill="#50ffaf" points="363.1,399.1 369,397.5 365.2,395.7 359.3,397.3"/>
<polygon fill="#50ffaf" points="388.3,397.9 394.2,396.3 390.4,394.6 384.5,396.1"/>
<polygon fill="#50ffaf" points="297,403.3 302.9,401.7 299.1,399.9 293.2,401.6"/>
<polygon fill="#50ffaf" points="322.2,401.9 328.1,400.3 324.4,398.6 318.5,400.2"/>
<polygon fill="#50ffaf" points="347.5,400.6 353.4,399 349.6,397.2 343.7,398.8"/>
<polygon fill="#50ffaf" points="372.7,399.3 378.6,397.7 374.9,395.9 369,397.5"/>
<polygon fill="#50ffaf" points="306.7,403.4 312.6,401.8 308.8,400.1 302.9,401.7"/>
<polygon fill="#50ffaf" points="331.9,402.1 337.8,400.5 334,398.7 328.1,400.3"/>
<polygon fill="#50ffaf" points="357.2,400.7 363.1,399.1 359.3,397.3 353.4,399"/>
<polygon fill="#50ffaf" points="382.4,399.4 388.3,397.9 384.5,396.1 378.6,397.7"/>
<polygon fill="#50ffaf" points="291.1,404.9 297,403.3 293.2,401.6 287.3,403.2"/>
<polygon fill="#50ffaf" points="316.3,403.6 322.2,401.9 318.5,400.2 312.6,401.8"/>
<polygon fill="#50ffaf" points="341.6,402.2 347.5,400.6 343.7,398.8 337.8,400.5"/>
<polygon fill="#50ffaf" points="366.8,400.9 372.7,399.3 369,397.5 363.1,399.1"/>
<polygon fill="#50ffaf" points="300.8,405 306.7,403.4 302.9,401.7 297,403.3"/>
<polygon fill="#50ffaf" points="326,403.7 331.9,402.1 328.1,400.3 322.2,401.9"/>
<polygon fill="#50ffaf" points="351.3,402.4 357.2,400.7 353.4,399 347.5,400.6"/>
<polygon fill="#50ffaf" points="376.5,401 382.4,399.4 378.6,397.7 372.7,399.3"/>
<polygon fill="#50ffaf" points="310.4,405.2 316.3,403.6 312.6,401.8 306.7,403.4"/>
<polygon fill="#50ffaf" points="335.7,403.8 341.6,402.2 337.8,400.5 331.9,402.1"/>
<polygon fill="#50ffaf" points="360.9,402.5 366.8,400.9 363.1,399.1 357.2,400.7"/>
<polygon fill="#50ffaf" points="294.9,406.6 300.8,405 297,403.3 291.1,404.9"/>
<polygon fill="#50ffaf" points="320.1,405.3 326,403.7 322.2,401.9 316.3,403.6"/>
<polygon fill="#50ffaf" points="345.4,404 351.3,402.4 347.5,400.6 341.6,402.2"/>
<polygon fill="#50ffaf" points="370.6,402.7 376.5,401 372.7,399.3 366.8,400.9"/>
<polygon fill="#50ffaf" points="304.5,406.8 310.4,405.2 306.7,403.4 300.8,405"/>
<polygon fill="#50ffaf" points="329.8,405.4 335.7,403.8 331.9,402.1 326,403.7"/>
<polygon fill="#50ffaf" points="355,404.1 360.9,402.5 357.2,400.7 351.3,402.4"/>
<polygon fill="#50ffaf" points="314.2,406.9 320.1,405.3 316.3,403.6 310.4,405.2"/>
<polygon fill="#50ffaf" points="339.5,405.6 345.4,404 341.6,402.2 335.7,403.8"/>
<polygon fill="#50ffaf" points="364.7,404.3 370.6,402.7 366.8,400.9 360.9,402.5"/>
<polygon fill="#50ffaf" points="298.6,408.4 304.5,406.8 300.8,405 294.9,406.6"/>
<polygon fill="#50ffaf" points="323.9,407.1 329.8,405.4 326,403.7 320.1,405.3"/>
<polygon fill="#50ffaf" points="349.1,405.7 355,404.1 351.3,402.4 345.4,404"/>
<polygon fill="#50ffaf" points="308.3,408.5 314.2,406.9 310.4,405.2 304.5,406.8"/>
<polygon fill="#50ffaf" points="333.6,407.2 339.5,405.6 335.7,403.8 329.8,405.4"/>
<polygon fill="#50ffaf" points="358.8,405.9 364.7,404.3 360.9,402.5 355,404.1"/>
<polygon fill="#50ffaf" points="318,408.7 323.9,407.1 320.1,405.3 314.2,406.9"/>
<polygon fill="#50ffaf" points="343.2,407.3 349.1,405.7 345.4,404 339.5,405.6"/>
<polygon fill="#50ffaf" points="302.4,410.1 308.3,408.5 304.5,406.8 298.6,408.4"/>
<polygon fill="#50ffaf" points="327.7,408.8 333.6,407.2 329.8,405.4 323.9,407.1"/>
<polygon fill="#50ffaf" points="352.9,407.5 358.8,405.9 355,404.1 349.1,405.7"/>
<polygon fill="#50ffaf" points="312.1,410.3 318,408.7 314.2,406.9 308.3,408.5"/>
<polygon fill="#50ffaf" points="337.3,408.9 343.2,407.3 339.5,405.6 333.6,407.2"/>
<polygon fill="#50ffaf" points="321.8,410.4 327.7,408.8 323.9,407.1 318,408.7"/>
<polygon fill="#50ffaf" points="347,409.1 352.9,407.5 349.1,405.7 343.2,407.3"/>
<polygon fill="#50ffaf" points="306.2,411.9 312.1,410.3 308.3,408.5 302.4,410.1"/>
<polygon fill="#50ffaf" points="331.4,410.5 337.3,408.9 333.6,407.2 327.7,408.8"/>
<polygon fill="#50ffaf" points="315.9,412 321.8,410.4 318,408.7 312.1,410.3"/>
<polygon fill="#50ffaf" points="341.1,410.7 347,409.1 343.2,407.3 337.3,408.9"/>
<polygon fill="#50ffaf" points="325.5,412.1 331.4,410.5 327.7,408.8 321.8,410.4"/>
<polygon fill="#50ffaf" points="310,413.6 315.9,412 312.1,410.3 306.2,411.9"/>
<polygon fill="#50ffaf" points="335.2,412.3 341.1,410.7 337.3,408.9 331.4,410.5"/>
<polygon fill="#50ffaf" points="319.6,413.7 325.5,412.1 321.8,410.4 315.9,412"/>
<polygon fill="#50ffaf" points="329.3,413.9 335.2,412.3 331.4,410.5 325.5,412.1"/>
<polygon fill="#50ffaf" points="313.7,415.3 319.6,413.7 315.9,412 310,413.6"/>
<polygon fill="#50ffaf" points="323.4,415.5 329.3,413.9 325.5,412.1 319.6,413.7"/>
<polygon fill="#50ffaf" points="317.5,417.1 323.4,415.5 319.6,413.7 313.7,415.3"/>
</g>
<g stroke="#000" stroke-width="1" shape-rendering="crispEdges">
<line x1="315.4" y1="534.0" x2="320.9" y2="537.2"/>
<line x1="374.4" y1="518.0" x2="379.9" y2="521.3"/>
<line x1="433.4" y1="502.0" x2="438.9" y2="505.3"/>
<line x1="492.4" y1="486.0" x2="497.9" y2="489.3"/>
<line x1="551.4" y1="470.0" x2="556.9" y2="473.3"/>
<line x1="610.4" y1="454.1" x2="615.9" y2="457.4"/>
<line x1="315.4" y1="534.0" x2="308.2" y2="535.9"/>
<line x1="239.9" y1="499.2" x2="232.7" y2="501.1"/>
<line x1="164.3" y1="464.4" x2="157.1" y2="466.2"/>
<line x1="88.8" y1="429.6" x2="81.6" y2="431.5"/>
<line x1="88.8" y1="430.0" x2="82.0" y2="427.5"/>
<line x1="88.8" y1="373.0" x2="82.0" y2="370.5"/>
<line x1="88.8" y1="316.0" x2="82.0" y2="313.5"/>
<line x1="88.8" y1="259.1" x2="82.0" y2="256.6"/>
<line x1="88.8" y1="202.1" x2="82.0" y2="199.6"/>
</g>
<g style="will-change:transform">
<path fill="#000" shape-rendering="crispEdges" d="M64 193h1v1h-1zM63 194h2v1h-2zM62 195h1v1h-1zM64 195h1v1h-1zM61 196h1v1h-1zM64 196h1v1h-1zM64 197h1v1h-1zM64 198h1v1h-1zM64 199h1v1h-1zM64 200h1v1h-1zM64 201h1v1h-1zM64 202h1v1h-1zM64 203h1v1h-1zM64 204h1v1h-1zM71 193h3v1h-3zM70 194h1v1h-1zM74 194h1v1h-1zM69 195h1v1h-1zM75 195h1v1h-1zM69 196h1v1h-1zM75 196h1v1h-1zM69 197h1v1h-1zM75 197h1v1h-1zM69 198h1v1h-1zM75 198h1v1h-1zM69 199h1v1h-1zM75 199h1v1h-1zM69 200h1v1h-1zM75 200h1v1h-1zM69 201h1v1h-1zM75 201h1v1h-1zM69 202h1v1h-1zM75 202h1v1h-1zM70 203h1v1h-1zM74 203h1v1h-1zM71 204h3v1h-3zM70 249h6v1h-6zM70 250h1v1h-1zM70 251h1v1h-1zM69 252h1v1h-1zM69 253h5v1h-5zM74 254h1v1h-1zM75 255h1v1h-1zM75 256h1v1h-1zM75 257h1v1h-1zM69 258h1v1h-1zM75 258h1v1h-1zM70 259h1v1h-1zM74 259h1v1h-1zM71 260h3v1h-3zM71 306h3v1h-3zM70 307h1v1h-1zM74 307h1v1h-1zM69 308h1v1h-1zM75 308h1v1h-1zM69 309h1v1h-1zM75 309h1v1h-1zM69 310h1v1h-1zM75 310h1v1h-1zM69 311h1v1h-1zM75 311h1v1h-1zM69 312h1v1h-1zM75 312h1v1h-1zM69 313h1v1h-1zM75 313h1v1h-1zM69 314h1v1h-1zM75 314h1v1h-1zM69 315h1v1h-1zM75 315h1v1h-1zM70 316h1v1h-1zM74 316h1v1h-1zM71 317h3v1h-3zM63 371h4v1h-4zM70 363h6v1h-6zM70 364h1v1h-1zM70 365h1v1h-1zM69 366h1v1h-1zM69 367h5v1h-5zM74 368h1v1h-1zM75 369h1v1h-1zM75 370h1v1h-1zM75 371h1v1h-1zM69 372h1v1h-1zM75 372h1v1h-1zM70 373h1v1h-1zM74 373h1v1h-1zM71 374h3v1h-3zM54 427h4v1h-4zM64 419h1v1h-1zM63 420h2v1h-2zM62 421h1v1h-1zM64 421h1v1h-1zM61 422h1v1h-1zM64 422h1v1h-1zM64 423h1v1h-1zM64 424h1v1h-1zM64 425h1v1h-1zM64 426h1v1h-1zM64 427h1v1h-1zM64 428h1v1h-1zM64 429h1v1h-1zM64 430h1v1h-1zM71 419h3v1h-3zM70 420h1v1h-1zM74 420h1v1h-1zM69 421h1v1h-1zM75 421h1v1h-1zM69 422h1v1h-1zM75 422h1v1h-1zM69 423h1v1h-1zM75 423h1v1h-1zM69 424h1v1h-1zM75 424h1v1h-1zM69 425h1v1h-1zM75 425h1v1h-1zM69 426h1v1h-1zM75 426h1v1h-1zM69 427h1v1h-1zM75 427h1v1h-1zM69 428h1v1h-1zM75 428h1v1h-1zM70 429h1v1h-1zM74 429h1v1h-1zM71 430h3v1h-3zM297 541h3v1h-3zM296 542h1v1h-1zM300 542h1v1h-1zM295 543h1v1h-1zM301 543h1v1h-1zM295 544h1v1h-1zM301 544h1v1h-1zM295 545h1v1h-1zM301 545h1v1h-1zM295 546h1v1h-1zM301 546h1v1h-1zM295 547h1v1h-1zM301 547h1v1h-1zM295 548h1v1h-1zM301 548h1v1h-1zM295 549h1v1h-1zM301 549h1v1h-1zM295 550h1v1h-1zM301 550h1v1h-1zM296 551h1v1h-1zM300 551h1v1h-1zM297 552h3v1h-3zM212 506h4v1h-4zM211 507h1v1h-1zM216 507h1v1h-1zM210 508h1v1h-1zM216 508h1v1h-1zM216 509h1v1h-1zM216 510h1v1h-1zM215 511h1v1h-1zM214 512h1v1h-1zM213 513h1v1h-1zM212 514h1v1h-1zM211 515h1v1h-1zM210 516h1v1h-1zM210 517h7v1h-7zM221 506h3v1h-3zM220 507h1v1h-1zM224 507h1v1h-1zM219 508h1v1h-1zM225 508h1v1h-1zM219 509h1v1h-1zM225 509h1v1h-1zM219 510h1v1h-1zM225 510h1v1h-1zM219 511h1v1h-1zM225 511h1v1h-1zM219 512h1v1h-1zM225 512h1v1h-1zM219 513h1v1h-1zM225 513h1v1h-1zM219 514h1v1h-1zM225 514h1v1h-1zM219 515h1v1h-1zM225 515h1v1h-1zM220 516h1v1h-1zM224 516h1v1h-1zM221 517h3v1h-3zM140 471h1v1h-1zM139 472h2v1h-2zM138 473h1v1h-1zM140 473h1v1h-1zM137 474h1v1h-1zM140 474h1v1h-1zM137 475h1v1h-1zM140 475h1v1h-1zM136 476h1v1h-1zM140 476h1v1h-1zM135 477h1v1h-1zM140 477h1v1h-1zM134 478h1v1h-1zM140 478h1v1h-1zM134 479h8v1h-8zM140 480h1v1h-1zM140 481h1v1h-1zM140 482h1v1h-1zM146 471h3v1h-3zM145 472h1v1h-1zM149 472h1v1h-1zM144 473h1v1h-1zM150 473h1v1h-1zM144 474h1v1h-1zM150 474h1v1h-1zM144 475h1v1h-1zM150 475h1v1h-1zM144 476h1v1h-1zM150 476h1v1h-1zM144 477h1v1h-1zM150 477h1v1h-1zM144 478h1v1h-1zM150 478h1v1h-1zM144 479h1v1h-1zM150 479h1v1h-1zM144 480h1v1h-1zM150 480h1v1h-1zM145 481h1v1h-1zM149 481h1v1h-1zM146 482h3v1h-3zM62 437h3v1h-3zM61 438h1v1h-1zM65 438h1v1h-1zM60 439h1v1h-1zM66 439h1v1h-1zM60 440h1v1h-1zM60 441h1v1h-1zM62 441h3v1h-3zM60 442h2v1h-2zM65 442h1v1h-1zM60 443h1v1h-1zM66 443h1v1h-1zM60 444h1v1h-1zM66 444h1v1h-1zM60 445h1v1h-1zM66 445h1v1h-1zM60 446h1v1h-1zM66 446h1v1h-1zM61 447h1v1h-1zM65 447h1v1h-1zM62 448h3v1h-3zM71 437h3v1h-3zM70 438h1v1h-1zM74 438h1v1h-1zM69 439h1v1h-1zM75 439h1v1h-1zM69 440h1v1h-1zM75 440h1v1h-1zM69 441h1v1h-1zM75 441h1v1h-1zM69 442h1v1h-1zM75 442h1v1h-1zM69 443h1v1h-1zM75 443h1v1h-1zM69 444h1v1h-1zM75 444h1v1h-1zM69 445h1v1h-1zM75 445h1v1h-1zM69 446h1v1h-1zM75 446h1v1h-1zM70 447h1v1h-1zM74 447h1v1h-1zM71 448h3v1h-3zM329 543h3v1h-3zM328 544h1v1h-1zM332 544h1v1h-1zM327 545h1v1h-1zM333 545h1v1h-1zM327 546h1v1h-1zM333 546h1v1h-1zM327 547h1v1h-1zM333 547h1v1h-1zM327 548h1v1h-1zM333 548h1v1h-1zM327 549h1v1h-1zM333 549h1v1h-1zM327 550h1v1h-1zM333 550h1v1h-1zM327 551h1v1h-1zM333 551h1v1h-1zM327 552h1v1h-1zM333 552h1v1h-1zM328 553h1v1h-1zM332 553h1v1h-1zM329 554h3v1h-3zM390 527h1v1h-1zM389 528h2v1h-2zM388 529h1v1h-1zM390 529h1v1h-1zM387 530h1v1h-1zM390 530h1v1h-1zM390 531h1v1h-1zM390 532h1v1h-1zM390 533h1v1h-1zM390 534h1v1h-1zM390 535h1v1h-1zM390 536h1v1h-1zM390 537h1v1h-1zM390 538h1v1h-1zM397 527h3v1h-3zM396 528h1v1h-1zM400 528h1v1h-1zM395 529h1v1h-1zM401 529h1v1h-1zM395 530h1v1h-1zM401 530h1v1h-1zM395 531h1v1h-1zM401 531h1v1h-1zM395 532h1v1h-1zM401 532h1v1h-1zM395 533h1v1h-1zM401 533h1v1h-1zM395 534h1v1h-1zM401 534h1v1h-1zM395 535h1v1h-1zM401 535h1v1h-1zM395 536h1v1h-1zM401 536h1v1h-1zM396 537h1v1h-1zM400 537h1v1h-1zM397 538h3v1h-3zM447 511h4v1h-4zM446 512h1v1h-1zM451 512h1v1h-1zM445 513h1v1h-1zM451 513h1v1h-1zM451 514h1v1h-1zM451 515h1v1h-1zM450 516h1v1h-1zM449 517h1v1h-1zM448 518h1v1h-1zM447 519h1v1h-1zM446 520h1v1h-1zM445 521h1v1h-1zM445 522h7v1h-7zM456 511h3v1h-3zM455 512h1v1h-1zM459 512h1v1h-1zM454 513h1v1h-1zM460 513h1v1h-1zM454 514h1v1h-1zM460 514h1v1h-1zM454 515h1v1h-1zM460 515h1v1h-1zM454 516h1v1h-1zM460 516h1v1h-1zM454 517h1v1h-1zM460 517h1v1h-1zM454 518h1v1h-1zM460 518h1v1h-1zM454 519h1v1h-1zM460 519h1v1h-1zM454 520h1v1h-1zM460 520h1v1h-1zM455 521h1v1h-1zM459 521h1v1h-1zM456 522h3v1h-3zM506 495h3v1h-3zM505 496h1v1h-1zM509 496h1v1h-1zM504 497h1v1h-1zM509 497h1v1h-1zM509 498h1v1h-1zM509 499h1v1h-1zM506 500h3v1h-3zM509 501h1v1h-1zM510 502h1v1h-1zM510 503h1v1h-1zM504 504h1v1h-1zM510 504h1v1h-1zM505 505h1v1h-1zM509 505h1v1h-1zM506 506h3v1h-3zM515 495h3v1h-3zM514 496h1v1h-1zM518 496h1v1h-1zM513 497h1v1h-1zM519 497h1v1h-1zM513 498h1v1h-1zM519 498h1v1h-1zM513 499h1v1h-1zM519 499h1v1h-1zM513 500h1v1h-1zM519 500h1v1h-1zM513 501h1v1h-1zM519 501h1v1h-1zM513 502h1v1h-1zM519 502h1v1h-1zM513 503h1v1h-1zM519 503h1v1h-1zM513 504h1v1h-1zM519 504h1v1h-1zM514 505h1v1h-1zM518 505h1v1h-1zM515 506h3v1h-3zM568 479h1v1h-1zM567 480h2v1h-2zM566 481h1v1h-1zM568 481h1v1h-1zM565 482h1v1h-1zM568 482h1v1h-1zM565 483h1v1h-1zM568 483h1v1h-1zM564 484h1v1h-1zM568 484h1v1h-1zM563 485h1v1h-1zM568 485h1v1h-1zM562 486h1v1h-1zM568 486h1v1h-1zM562 487h8v1h-8zM568 488h1v1h-1zM568 489h1v1h-1zM568 490h1v1h-1zM574 479h3v1h-3zM573 480h1v1h-1zM577 480h1v1h-1zM572 481h1v1h-1zM578 481h1v1h-1zM572 482h1v1h-1zM578 482h1v1h-1zM572 483h1v1h-1zM578 483h1v1h-1zM572 484h1v1h-1zM578 484h1v1h-1zM572 485h1v1h-1zM578 485h1v1h-1zM572 486h1v1h-1zM578 486h1v1h-1zM572 487h1v1h-1zM578 487h1v1h-1zM572 488h1v1h-1zM578 488h1v1h-1zM573 489h1v1h-1zM577 489h1v1h-1zM574 490h3v1h-3zM623 463h6v1h-6zM623 464h1v1h-1zM623 465h1v1h-1zM622 466h1v1h-1zM622 467h5v1h-5zM627 468h1v1h-1zM628 469h1v1h-1zM628 470h1v1h-1zM628 471h1v1h-1zM622 472h1v1h-1zM628 472h1v1h-1zM623 473h1v1h-1zM627 473h1v1h-1zM624 474h3v1h-3zM633 463h3v1h-3zM632 464h1v1h-1zM636 464h1v1h-1zM631 465h1v1h-1zM637 465h1v1h-1zM631 466h1v1h-1zM637 466h1v1h-1zM631 467h1v1h-1zM637 467h1v1h-1zM631 468h1v1h-1zM637 468h1v1h-1zM631 469h1v1h-1zM637 469h1v1h-1zM631 470h1v1h-1zM637 470h1v1h-1zM631 471h1v1h-1zM637 471h1v1h-1zM631 472h1v1h-1zM637 472h1v1h-1zM632 473h1v1h-1zM636 473h1v1h-1zM633 474h3v1h-3z"/>
</g>
</svg>
</body></html>
